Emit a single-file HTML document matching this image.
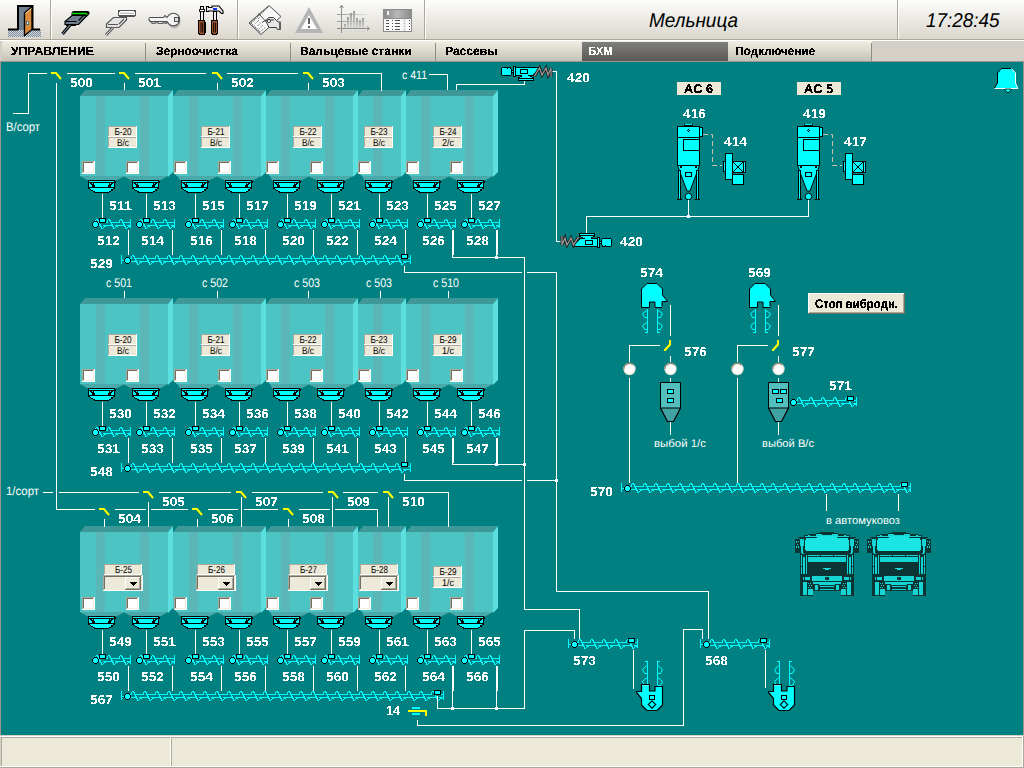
<!DOCTYPE html><html><head><meta charset="utf-8"><style>html,body{margin:0;padding:0;width:1024px;height:768px;overflow:hidden;background:#D4D0C8;}svg{display:block;font-family:"Liberation Sans",sans-serif;} rect,path.c{shape-rendering:crispEdges}</style></head><body><svg width="1024" height="768" viewBox="0 0 1024 768" text-rendering="geometricPrecision"><path class="c" fill="#D4D0C8" d="M0 0h1024v768h-1024z"/><defs><linearGradient id="tb" x1="0" y1="0" x2="0" y2="1"><stop offset="0" stop-color="#FDFDFB"/><stop offset="1" stop-color="#DAD6CE"/></linearGradient><linearGradient id="tab" x1="0" y1="0" x2="0" y2="1"><stop offset="0" stop-color="#F1EFE3"/><stop offset="1" stop-color="#C4C1B7"/></linearGradient><linearGradient id="tabA" x1="0" y1="0" x2="0" y2="1"><stop offset="0" stop-color="#7E7E7C"/><stop offset="1" stop-color="#5D5954"/></linearGradient><filter id="crisp" x="-10%" y="-30%" width="120%" height="160%"><feComponentTransfer><feFuncA type="discrete" tableValues="0 0 1 1"/></feComponentTransfer></filter><filter id="crispK" x="-10%" y="-30%" width="120%" height="160%"><feComponentTransfer><feFuncA type="discrete" tableValues="0 1 1"/></feComponentTransfer></filter><filter id="crispN" x="-10%" y="-30%" width="120%" height="160%"><feComponentTransfer><feFuncA type="discrete" tableValues="0 0 1 1 1"/></feComponentTransfer></filter><pattern id="dith" width="2" height="2" patternUnits="userSpaceOnUse"><rect width="1" height="1" fill="#7088A0"/><rect x="1" y="1" width="1" height="1" fill="#7088A0"/></pattern></defs><rect x="0" y="0" width="1024" height="39" fill="url(#tb)"/><rect x="0" y="39" width="1024" height="1" fill="#ACA899"/><rect x="0" y="40" width="1024" height="1" fill="#FFFFFF"/><rect x="50" y="0" width="1" height="39" fill="#ACA899"/><rect x="51" y="0" width="1" height="39" fill="#FFFFFF"/><rect x="237" y="0" width="1" height="39" fill="#ACA899"/><rect x="238" y="0" width="1" height="39" fill="#FFFFFF"/><rect x="424" y="0" width="1" height="39" fill="#ACA899"/><rect x="425" y="0" width="1" height="39" fill="#FFFFFF"/><rect x="897" y="0" width="1" height="39" fill="#ACA899"/><rect x="898" y="0" width="1" height="39" fill="#FFFFFF"/><rect x="0" y="41" width="1024" height="20" fill="#D4D0C8"/><rect x="2" y="41" width="870" height="20" fill="url(#tab)"/><rect x="582" y="42" width="146" height="19" fill="url(#tabA)"/><rect x="145" y="43" width="1" height="18" fill="#8E8C86"/><rect x="290" y="43" width="1" height="18" fill="#8E8C86"/><rect x="435" y="43" width="1" height="18" fill="#8E8C86"/><rect x="871" y="43" width="1" height="18" fill="#8E8C86"/><text x="11" y="55" font-size="12" fill="#000" style="font-weight:bold;" textLength="83" lengthAdjust="spacingAndGlyphs" filter="url(#crispK)">УПРАВЛЕНИЕ</text><text x="156" y="55" font-size="12" fill="#000" style="font-weight:bold;" textLength="82" lengthAdjust="spacingAndGlyphs" filter="url(#crispK)">Зерноочистка</text><text x="300" y="55" font-size="12" fill="#000" style="font-weight:bold;" textLength="111.5" lengthAdjust="spacingAndGlyphs" filter="url(#crispK)">Вальцевые станки</text><text x="445" y="55" font-size="12" fill="#000" style="font-weight:bold;" textLength="52.5" lengthAdjust="spacingAndGlyphs" filter="url(#crispK)">Рассевы</text><text x="588.5" y="55" font-size="12" fill="#FFFFFF" style="font-weight:bold;" textLength="24" lengthAdjust="spacingAndGlyphs" filter="url(#crisp)">БХМ</text><text x="735.5" y="55" font-size="12" fill="#000" style="font-weight:bold;" textLength="79.5" lengthAdjust="spacingAndGlyphs" filter="url(#crispK)">Подключение</text><text x="649" y="27" font-size="20" fill="#000" style="font-style:italic;" textLength="89" lengthAdjust="spacingAndGlyphs">Мельница</text><text x="926" y="27" font-size="20" fill="#000" style="font-style:italic;" textLength="73.5" lengthAdjust="spacingAndGlyphs">17:28:45</text><rect x="8" y="30" width="33" height="7" fill="url(#dith)"/><path d="M8,29.5 H18 M32,29.5 H40" stroke="#000" stroke-width="2"/><path d="M18,30 V6 H32.5 V30" fill="#708090" stroke="#000" stroke-width="2"/><path d="M24.5,13 L32,6.5 V29.5 L24.5,35.5 Z" fill="#D98C3C" stroke="#000" stroke-width="1.4"/><path d="M25.5,13.5 L31.5,8.5" stroke="#F8D8A8" stroke-width="1"/><rect x="26.5" y="21" width="2" height="3" fill="#fff" stroke="#2A6070" stroke-width="0.8"/><path d="M71.5,15.5 V13 Q72,11 74,11 H87.5 Q89.5,11 89.5,13 V14 L87,16.5 Z" fill="#000"/><path d="M72,13.5 H86 L87.5,15.8" stroke="#00E000" stroke-width="1.3" fill="none"/><path d="M72,15.5 H87 L78.5,24.5 H65 V21.5 Z" fill="#708090" stroke="#000" stroke-width="1.2"/><path d="M65.5,21.5 H76.5 M78.5,20.5 L83.5,15.5" stroke="#000" stroke-width="1.1"/><path d="M66.5,24.5 V25.5 H76" stroke="#000" stroke-width="1.2" fill="none"/><path d="M70,25 L62.5,34" stroke="#000" stroke-width="3.2"/><path d="M70,25 L62.5,34" stroke="#7890A0" stroke-width="1.1"/><rect x="118.5" y="10.5" width="17" height="5.5" rx="2" fill="#fff" stroke="#555" stroke-width="1.4"/><path d="M120.5,13.3 H134" stroke="#555" stroke-width="1.1" stroke-dasharray="1,1"/><path d="M113.5,17.5 H126.5 V20 L119,27.5 H106.5 V24 Z" fill="#E4E4E4" stroke="#555" stroke-width="1.2"/><path d="M108,24.5 H118 M119,24 L124,19" stroke="#555" stroke-width="1.1"/><path d="M113,27.5 L106,35" stroke="#555" stroke-width="2.8"/><path d="M113,27.5 L106,35" stroke="#fff" stroke-width="0.9"/><g transform="translate(1,2.5)" opacity="0.45"><path d="M150,17.5 H167 L170,14 A6.3,6.3 0 1 1 170,25 L167,21.5 H152 Q149,21.5 149,19.5 Z" fill="#808080"/></g><path d="M152,21.5 V23.5 H155 V22 H158 V23.5 H163 V22 H165 V23.5 H166.5 V21.5" fill="#E8E8E8" stroke="#606060" stroke-width="1"/><path d="M150,17.5 H163.5 L165,15.5 L167,17.5 L169,15 A6.3,6.3 0 1 1 169.5,24.5 L167,21.5 H151.5 Q149,21.5 149,19.5 Q149,17.5 150,17.5 Z" fill="#F4F4F4" stroke="#505050" stroke-width="1.1"/><rect x="174.5" y="17.5" width="4" height="4" rx="1.5" fill="#E0E0E0" stroke="#505050" stroke-width="1.1"/><rect x="198.5" y="20" width="6.5" height="14.5" rx="2.5" fill="#A0522D" stroke="#000" stroke-width="1.3"/><path d="M201,22.5 V32.5 M202.7,22.5 V32.5" stroke="#000" stroke-width="0.9"/><rect x="200" y="6" width="3" height="14" fill="#EEE" stroke="#000" stroke-width="1"/><rect x="199" y="9" width="5" height="2.5" fill="#fff" stroke="#000" stroke-width="0.9"/><rect x="211.3" y="20" width="6.5" height="14.5" rx="2.5" fill="#A0522D" stroke="#000" stroke-width="1.3"/><path d="M213.7,22.5 V32.5 M215.4,22.5 V32.5" stroke="#000" stroke-width="0.9"/><rect x="213" y="11.5" width="3" height="8.5" fill="#EEE" stroke="#000" stroke-width="1"/><path d="M206.5,6.5 H208.5 V7.5 H212 V6 H219 L223,11 V13.5 H221.5 L219,11 H208.5 V11.5 H206.5 Z" fill="#EEE" stroke="#000" stroke-width="1.1"/><rect x="212.8" y="8" width="4" height="1.6" fill="#1030FF"/><path d="M269,5.5 L281,16.5 L261,34.5 L249,23 Z" fill="#F8F8F8" stroke="#505050" stroke-width="1"/><path d="M268,7 L250.5,23 L261,33" stroke="#505050" stroke-width="1.6" stroke-dasharray="1,1" fill="none"/><path d="M258.5,13.5 L269,25" stroke="#505050" stroke-width="1"/><path d="M255.5,23.5 L259,20 M257.5,26 L261,22.5 M259.5,28.5 L263,25 M261.5,31 L265,27.5 M258,19 L260,17" stroke="#606060" stroke-width="1" stroke-dasharray="1,1"/><path d="M266,21.5 L268.5,17.5 H273.5 L278,22 H280.5 V29.5 H277.5 L276.5,27.5 H269 Z" fill="#E6E6E6" stroke="#404040" stroke-width="1"/><rect x="278.5" y="22" width="2.5" height="8" fill="#606060"/><path d="M262,22.5 L266,20 H274" stroke="#404040" stroke-width="1" fill="none"/><circle cx="269" cy="21" r="1.6" fill="#fff" stroke="#404040" stroke-width="1"/><path d="M309,7 L323,33 H295 Z" fill="#B4B4B4"/><path d="M309,15 L317,29 H301 Z" fill="#FFFFFF"/><rect x="308" y="18" width="2" height="6" fill="#606060"/><rect x="308" y="26" width="2" height="2" fill="#606060"/><defs><linearGradient id="bar" x1="0" y1="0" x2="0" y2="1"><stop offset="0" stop-color="#9C9C9C"/><stop offset="1" stop-color="#D4D4D4"/></linearGradient><linearGradient id="grid" x1="0" y1="0" x2="1" y2="0"><stop offset="0" stop-color="#9A9A9A"/><stop offset="1" stop-color="#E4E4E4"/></linearGradient><linearGradient id="thead" x1="0" y1="0" x2="1" y2="0"><stop offset="0" stop-color="#8A8A8A"/><stop offset="0.5" stop-color="#B8B8B8"/><stop offset="1" stop-color="#8A8A8A"/></linearGradient></defs><rect x="337" y="14" width="32" height="1" fill="url(#grid)"/><rect x="337" y="21" width="32" height="1" fill="url(#grid)"/><rect x="341" y="6" width="1" height="27" fill="#909090"/><rect x="337" y="28" width="32" height="1" fill="#909090"/><path d="M339.5,8 L341.5,5 L343.5,8 M367,26.5 L369.5,28.5 L367,30.5" stroke="#909090" fill="none" stroke-width="1"/><rect x="344" y="24" width="2" height="4" fill="url(#bar)"/><rect x="347" y="17" width="2" height="11" fill="url(#bar)"/><rect x="350" y="13" width="2" height="15" fill="url(#bar)"/><rect x="353" y="11" width="2" height="17" fill="url(#bar)"/><rect x="356" y="18" width="2" height="10" fill="url(#bar)"/><rect x="359" y="20" width="2" height="8" fill="url(#bar)"/><rect x="362" y="18" width="2" height="10" fill="url(#bar)"/><path d="M344,31.5 H364" stroke="#D8D8D8" stroke-dasharray="2,1"/><rect x="383" y="9" width="29" height="23" rx="1" fill="#8C8C8C"/><rect x="384" y="10" width="27" height="8" fill="url(#thead)"/><rect x="384" y="19" width="27" height="12" fill="#F8F8F8"/><rect x="387" y="11" width="2" height="4" fill="#F0F0F0"/><path d="M386,20.5 H389 M392,20.5 H393 M395,20.5 H400 M404,20.5 H405 M409,20.5 H410" stroke="#505050"/><path d="M386,23.5 H389 M392,23.5 H393 M395,23.5 H400 M404,23.5 H405 M409,23.5 H410" stroke="#505050"/><path d="M386,26.5 H389 M392,26.5 H393 M395,26.5 H400 M404,26.5 H405 M409,26.5 H410" stroke="#505050"/><path d="M386,29.5 H389 M392,29.5 H393 M395,29.5 H400 M404,29.5 H405 M409,29.5 H410" stroke="#505050"/><rect x="403" y="19" width="3" height="12" fill="#E8E8E8" opacity="0.6"/><path class="c" fill="#9D9492" d="M0 61h1024v675h-1024z"/><path class="c" fill="#008080" d="M1 62h1022v673h-1022z"/><polygon points="80,96 85,90 173,90 168,96" fill="#3F9898"/><path class="c" fill="#4DC4C4" d="M80 96h88v80h-88z"/><path class="c" fill="#5BB7B7" d="M96 96h9v80h-9zM140 96h9v80h-9z"/><polygon points="168,96 173,90 173,172 168,177" fill="#5BDFDF"/><polygon points="80,176 87,180 117,180 124.0,176.5 131,180 161,180 168,176" fill="#48AAAA"/><path class="c" fill="#FFFFFF" d="M82 161h13v13h-13z"/><path class="c" fill="#ACA899" d="M82 161h12v1h-12zM82 161h1v12h-1z"/><path class="c" fill="#716F64" d="M83 162h10v1h-10zM83 162h1v10h-1z"/><path class="c" fill="#F1EFE2" d="M83 172h11v1h-11zM93 162h1v11h-1z"/><path class="c" fill="#FFFFFF" d="M126 161h13v13h-13z"/><path class="c" fill="#ACA899" d="M126 161h12v1h-12zM126 161h1v12h-1z"/><path class="c" fill="#716F64" d="M127 162h10v1h-10zM127 162h1v10h-1z"/><path class="c" fill="#F1EFE2" d="M127 172h11v1h-11zM137 162h1v11h-1z"/><polygon points="173,96 178,90 266,90 261,96" fill="#3F9898"/><path class="c" fill="#4DC4C4" d="M173 96h88v80h-88z"/><path class="c" fill="#5BB7B7" d="M189 96h9v80h-9zM233 96h9v80h-9z"/><polygon points="261,96 266,90 266,172 261,177" fill="#5BDFDF"/><polygon points="173,172.5 177,176 173,176" fill="#008080"/><polygon points="177,176 180,180 210,180 217.0,176.5 224,180 254,180 261,176" fill="#48AAAA"/><path class="c" fill="#FFFFFF" d="M174 161h13v13h-13z"/><path class="c" fill="#ACA899" d="M174 161h12v1h-12zM174 161h1v12h-1z"/><path class="c" fill="#716F64" d="M175 162h10v1h-10zM175 162h1v10h-1z"/><path class="c" fill="#F1EFE2" d="M175 172h11v1h-11zM185 162h1v11h-1z"/><path class="c" fill="#FFFFFF" d="M218 161h13v13h-13z"/><path class="c" fill="#ACA899" d="M218 161h12v1h-12zM218 161h1v12h-1z"/><path class="c" fill="#716F64" d="M219 162h10v1h-10zM219 162h1v10h-1z"/><path class="c" fill="#F1EFE2" d="M219 172h11v1h-11zM229 162h1v11h-1z"/><polygon points="266,96 271,90 358,90 353,96" fill="#3F9898"/><path class="c" fill="#4DC4C4" d="M266 96h87v80h-87z"/><path class="c" fill="#5BB7B7" d="M281 96h9v80h-9zM325 96h9v80h-9z"/><polygon points="353,96 358,90 358,172 353,177" fill="#5BDFDF"/><polygon points="266,172.5 270,176 266,176" fill="#008080"/><polygon points="270,176 272,180 302,180 309.0,176.5 316,180 346,180 353,176" fill="#48AAAA"/><path class="c" fill="#FFFFFF" d="M266 161h13v13h-13z"/><path class="c" fill="#ACA899" d="M266 161h12v1h-12zM266 161h1v12h-1z"/><path class="c" fill="#716F64" d="M267 162h10v1h-10zM267 162h1v10h-1z"/><path class="c" fill="#F1EFE2" d="M267 172h11v1h-11zM277 162h1v11h-1z"/><path class="c" fill="#FFFFFF" d="M310 161h13v13h-13z"/><path class="c" fill="#ACA899" d="M310 161h12v1h-12zM310 161h1v12h-1z"/><path class="c" fill="#716F64" d="M311 162h10v1h-10zM311 162h1v10h-1z"/><path class="c" fill="#F1EFE2" d="M311 172h11v1h-11zM321 162h1v11h-1z"/><polygon points="358,96 363,90 406,90 401,96" fill="#3F9898"/><path class="c" fill="#4DC4C4" d="M358 96h43v80h-43z"/><path class="c" fill="#5BB7B7" d="M373 96h9v80h-9z"/><polygon points="401,96 406,90 406,172 401,177" fill="#5BDFDF"/><polygon points="358,172.5 362,176 358,176" fill="#008080"/><polygon points="362,176 364,180 394,180 401,176" fill="#48AAAA"/><path class="c" fill="#FFFFFF" d="M358 161h13v13h-13z"/><path class="c" fill="#ACA899" d="M358 161h12v1h-12zM358 161h1v12h-1z"/><path class="c" fill="#716F64" d="M359 162h10v1h-10zM359 162h1v10h-1z"/><path class="c" fill="#F1EFE2" d="M359 172h11v1h-11zM369 162h1v11h-1z"/><polygon points="406,96 411,90 498,90 493,96" fill="#3F9898"/><path class="c" fill="#4DC4C4" d="M406 96h87v80h-87z"/><path class="c" fill="#5BB7B7" d="M421 96h9v80h-9zM465 96h9v80h-9z"/><polygon points="493,96 498,90 498,172 493,177" fill="#5BDFDF"/><polygon points="406,172.5 410,176 406,176" fill="#008080"/><polygon points="410,176 412,180 442,180 449.0,176.5 456,180 486,180 493,176" fill="#48AAAA"/><path class="c" fill="#FFFFFF" d="M406 161h13v13h-13z"/><path class="c" fill="#ACA899" d="M406 161h12v1h-12zM406 161h1v12h-1z"/><path class="c" fill="#716F64" d="M407 162h10v1h-10zM407 162h1v10h-1z"/><path class="c" fill="#F1EFE2" d="M407 172h11v1h-11zM417 162h1v11h-1z"/><path class="c" fill="#FFFFFF" d="M450 161h13v13h-13z"/><path class="c" fill="#ACA899" d="M450 161h12v1h-12zM450 161h1v12h-1z"/><path class="c" fill="#716F64" d="M451 162h10v1h-10zM451 162h1v10h-1z"/><path class="c" fill="#F1EFE2" d="M451 172h11v1h-11zM461 162h1v11h-1z"/><path class="c" fill="#FFFFFF" d="M108 126h29v11h-29z"/><path class="c" fill="#ACA899" d="M108 126h28v10h-28z"/><path class="c" fill="#ECE9D8" d="M109 127h27v9h-27z"/><text x="114.5" y="135" font-size="10" fill="#000" style="" text-anchor="start" textLength="17" lengthAdjust="spacingAndGlyphs" >Б-20</text><path class="c" fill="#FFFFFF" d="M108 137h29v11h-29z"/><path class="c" fill="#ACA899" d="M108 137h28v10h-28z"/><path class="c" fill="#ECE9D8" d="M109 138h27v9h-27z"/><text x="117.0" y="146" font-size="10" fill="#000" style="" text-anchor="start" textLength="12" lengthAdjust="spacingAndGlyphs" >В/с</text><path class="c" fill="#FFFFFF" d="M201 126h29v11h-29z"/><path class="c" fill="#ACA899" d="M201 126h28v10h-28z"/><path class="c" fill="#ECE9D8" d="M202 127h27v9h-27z"/><text x="207.5" y="135" font-size="10" fill="#000" style="" text-anchor="start" textLength="17" lengthAdjust="spacingAndGlyphs" >Б-21</text><path class="c" fill="#FFFFFF" d="M201 137h29v11h-29z"/><path class="c" fill="#ACA899" d="M201 137h28v10h-28z"/><path class="c" fill="#ECE9D8" d="M202 138h27v9h-27z"/><text x="210.0" y="146" font-size="10" fill="#000" style="" text-anchor="start" textLength="12" lengthAdjust="spacingAndGlyphs" >В/с</text><path class="c" fill="#FFFFFF" d="M293 126h29v11h-29z"/><path class="c" fill="#ACA899" d="M293 126h28v10h-28z"/><path class="c" fill="#ECE9D8" d="M294 127h27v9h-27z"/><text x="299.5" y="135" font-size="10" fill="#000" style="" text-anchor="start" textLength="17" lengthAdjust="spacingAndGlyphs" >Б-22</text><path class="c" fill="#FFFFFF" d="M293 137h29v11h-29z"/><path class="c" fill="#ACA899" d="M293 137h28v10h-28z"/><path class="c" fill="#ECE9D8" d="M294 138h27v9h-27z"/><text x="302.0" y="146" font-size="10" fill="#000" style="" text-anchor="start" textLength="12" lengthAdjust="spacingAndGlyphs" >В/с</text><path class="c" fill="#FFFFFF" d="M364 126h29v11h-29z"/><path class="c" fill="#ACA899" d="M364 126h28v10h-28z"/><path class="c" fill="#ECE9D8" d="M365 127h27v9h-27z"/><text x="370.5" y="135" font-size="10" fill="#000" style="" text-anchor="start" textLength="17" lengthAdjust="spacingAndGlyphs" >Б-23</text><path class="c" fill="#FFFFFF" d="M364 137h29v11h-29z"/><path class="c" fill="#ACA899" d="M364 137h28v10h-28z"/><path class="c" fill="#ECE9D8" d="M365 138h27v9h-27z"/><text x="373.0" y="146" font-size="10" fill="#000" style="" text-anchor="start" textLength="12" lengthAdjust="spacingAndGlyphs" >В/с</text><path class="c" fill="#FFFFFF" d="M433 126h29v11h-29z"/><path class="c" fill="#ACA899" d="M433 126h28v10h-28z"/><path class="c" fill="#ECE9D8" d="M434 127h27v9h-27z"/><text x="439.5" y="135" font-size="10" fill="#000" style="" text-anchor="start" textLength="17" lengthAdjust="spacingAndGlyphs" >Б-24</text><path class="c" fill="#FFFFFF" d="M433 137h29v11h-29z"/><path class="c" fill="#ACA899" d="M433 137h28v10h-28z"/><path class="c" fill="#ECE9D8" d="M434 138h27v9h-27z"/><text x="442.0" y="146" font-size="10" fill="#000" style="" text-anchor="start" textLength="12" lengthAdjust="spacingAndGlyphs" >2/с</text><path class="c" fill="#000" d="M88 180h27v1h-27zM88 181h1v1h-1z"/><path class="c" fill="#00FFFF" d="M89 181h25v1h-25z"/><path class="c" fill="#000" d="M114 181h2v1h-2zM88 182h28v1h-28zM88 183h1v1h-1z"/><path class="c" fill="#00FFFF" d="M89 183h1v1h-1z"/><path class="c" fill="#000" d="M90 183h2v1h-2z"/><path class="c" fill="#00FFFF" d="M92 183h1v1h-1z"/><path class="c" fill="#000" d="M93 183h1v1h-1z"/><path class="c" fill="#00FFFF" d="M94 183h15v1h-15z"/><path class="c" fill="#000" d="M109 183h1v1h-1z"/><path class="c" fill="#00FFFF" d="M110 183h1v1h-1z"/><path class="c" fill="#000" d="M111 183h2v1h-2z"/><path class="c" fill="#00FFFF" d="M113 183h1v1h-1z"/><path class="c" fill="#000" d="M114 183h1v1h-1zM88 184h1v1h-1z"/><path class="c" fill="#00FFFF" d="M89 184h2v1h-2z"/><path class="c" fill="#000" d="M91 184h3v1h-3z"/><path class="c" fill="#00FFFF" d="M94 184h15v1h-15z"/><path class="c" fill="#000" d="M109 184h3v1h-3z"/><path class="c" fill="#00FFFF" d="M112 184h2v1h-2z"/><path class="c" fill="#000" d="M114 184h1v1h-1zM88 185h1v1h-1z"/><path class="c" fill="#00FFFF" d="M89 185h3v1h-3z"/><path class="c" fill="#000" d="M92 185h3v1h-3z"/><path class="c" fill="#00FFFF" d="M95 185h13v1h-13z"/><path class="c" fill="#000" d="M108 185h3v1h-3z"/><path class="c" fill="#00FFFF" d="M111 185h3v1h-3z"/><path class="c" fill="#000" d="M114 185h1v1h-1zM88 186h1v1h-1z"/><path class="c" fill="#00FFFF" d="M89 186h3v1h-3z"/><path class="c" fill="#000" d="M92 186h3v1h-3z"/><path class="c" fill="#00FFFF" d="M95 186h13v1h-13z"/><path class="c" fill="#000" d="M108 186h3v1h-3z"/><path class="c" fill="#00FFFF" d="M111 186h3v1h-3z"/><path class="c" fill="#000" d="M114 186h1v1h-1zM88 187h27v1h-27zM88 188h2v1h-2z"/><path class="c" fill="#00FFFF" d="M90 188h23v1h-23z"/><path class="c" fill="#000" d="M113 188h2v1h-2zM90 189h1v1h-1z"/><path class="c" fill="#00FFFF" d="M91 189h20v1h-20z"/><path class="c" fill="#000" d="M111 189h2v1h-2zM91 190h2v1h-2z"/><path class="c" fill="#00FFFF" d="M93 190h18v1h-18z"/><path class="c" fill="#000" d="M111 190h2v1h-2zM93 191h2v1h-2z"/><path class="c" fill="#00FFFF" d="M95 191h14v1h-14z"/><path class="c" fill="#000" d="M109 191h2v1h-2zM94 192h15v1h-15z"/><path class="c" fill="#fff" d="M102 194h1v24h-1z"/><path class="c" fill="#00FFFF" d="M98 222h10v1h-10zM110 222h10v1h-10zM122 222h8v1h-8zM96 225h5v1h-5zM103 225h10v1h-10zM115 225h10v1h-10zM127 225h3v1h-3zM96 219h1v1h-1zM97 219h1v1h-1zM95 220h1v1h-1zM97 220h1v1h-1zM98 220h1v1h-1zM95 221h1v1h-1zM98 221h1v1h-1zM98 222h1v1h-1zM99 222h1v1h-1zM99 223h1v1h-1zM99 224h1v1h-1zM100 224h1v1h-1zM100 225h1v1h-1zM100 226h1v1h-1zM101 226h1v1h-1zM104 226h1v1h-1zM105 226h1v1h-1zM101 227h1v1h-1zM103 227h1v1h-1zM101 228h1v1h-1zM102 228h1v1h-1zM108 219h1v1h-1zM109 219h1v1h-1zM107 220h1v1h-1zM109 220h1v1h-1zM110 220h1v1h-1zM107 221h1v1h-1zM110 221h1v1h-1zM110 222h1v1h-1zM111 222h1v1h-1zM111 223h1v1h-1zM111 224h1v1h-1zM112 224h1v1h-1zM112 225h1v1h-1zM112 226h1v1h-1zM113 226h1v1h-1zM116 226h1v1h-1zM117 226h1v1h-1zM113 227h1v1h-1zM115 227h1v1h-1zM113 228h1v1h-1zM114 228h1v1h-1zM120 219h1v1h-1zM121 219h1v1h-1zM119 220h1v1h-1zM121 220h1v1h-1zM122 220h1v1h-1zM119 221h1v1h-1zM122 221h1v1h-1zM122 222h1v1h-1zM123 222h1v1h-1zM123 223h1v1h-1zM123 224h1v1h-1zM124 224h1v1h-1zM124 225h1v1h-1zM124 226h1v1h-1zM125 226h1v1h-1zM128 226h1v1h-1zM129 226h1v1h-1zM125 227h1v1h-1zM127 227h1v1h-1zM125 228h1v1h-1zM126 228h1v1h-1zM130 219h1v9h-1z"/><path class="c" fill="#000" d="M94 221h3v1h-3zM93 222h1v1h-1z"/><path class="c" fill="#00FFFF" d="M94 222h3v1h-3z"/><path class="c" fill="#000" d="M97 222h1v1h-1zM92 223h1v1h-1z"/><path class="c" fill="#00FFFF" d="M93 223h5v1h-5z"/><path class="c" fill="#000" d="M98 223h1v1h-1zM92 224h1v1h-1z"/><path class="c" fill="#00FFFF" d="M93 224h5v1h-5z"/><path class="c" fill="#000" d="M98 224h1v1h-1zM92 225h1v1h-1z"/><path class="c" fill="#00FFFF" d="M93 225h5v1h-5z"/><path class="c" fill="#000" d="M98 225h1v1h-1zM93 226h1v1h-1z"/><path class="c" fill="#00FFFF" d="M94 226h3v1h-3z"/><path class="c" fill="#000" d="M97 226h1v1h-1zM94 227h3v1h-3zM99 218h7v5h-7z"/><path class="c" fill="#00FFFF" d="M100 219h5v3h-5z"/><path class="c" fill="#fff" d="M128 230h1v25h-1z"/><path class="c" fill="#000" d="M132 180h27v1h-27zM132 181h1v1h-1z"/><path class="c" fill="#00FFFF" d="M133 181h25v1h-25z"/><path class="c" fill="#000" d="M158 181h2v1h-2zM132 182h28v1h-28zM132 183h1v1h-1z"/><path class="c" fill="#00FFFF" d="M133 183h1v1h-1z"/><path class="c" fill="#000" d="M134 183h2v1h-2z"/><path class="c" fill="#00FFFF" d="M136 183h1v1h-1z"/><path class="c" fill="#000" d="M137 183h1v1h-1z"/><path class="c" fill="#00FFFF" d="M138 183h15v1h-15z"/><path class="c" fill="#000" d="M153 183h1v1h-1z"/><path class="c" fill="#00FFFF" d="M154 183h1v1h-1z"/><path class="c" fill="#000" d="M155 183h2v1h-2z"/><path class="c" fill="#00FFFF" d="M157 183h1v1h-1z"/><path class="c" fill="#000" d="M158 183h1v1h-1zM132 184h1v1h-1z"/><path class="c" fill="#00FFFF" d="M133 184h2v1h-2z"/><path class="c" fill="#000" d="M135 184h3v1h-3z"/><path class="c" fill="#00FFFF" d="M138 184h15v1h-15z"/><path class="c" fill="#000" d="M153 184h3v1h-3z"/><path class="c" fill="#00FFFF" d="M156 184h2v1h-2z"/><path class="c" fill="#000" d="M158 184h1v1h-1zM132 185h1v1h-1z"/><path class="c" fill="#00FFFF" d="M133 185h3v1h-3z"/><path class="c" fill="#000" d="M136 185h3v1h-3z"/><path class="c" fill="#00FFFF" d="M139 185h13v1h-13z"/><path class="c" fill="#000" d="M152 185h3v1h-3z"/><path class="c" fill="#00FFFF" d="M155 185h3v1h-3z"/><path class="c" fill="#000" d="M158 185h1v1h-1zM132 186h1v1h-1z"/><path class="c" fill="#00FFFF" d="M133 186h3v1h-3z"/><path class="c" fill="#000" d="M136 186h3v1h-3z"/><path class="c" fill="#00FFFF" d="M139 186h13v1h-13z"/><path class="c" fill="#000" d="M152 186h3v1h-3z"/><path class="c" fill="#00FFFF" d="M155 186h3v1h-3z"/><path class="c" fill="#000" d="M158 186h1v1h-1zM132 187h27v1h-27zM132 188h2v1h-2z"/><path class="c" fill="#00FFFF" d="M134 188h23v1h-23z"/><path class="c" fill="#000" d="M157 188h2v1h-2zM134 189h1v1h-1z"/><path class="c" fill="#00FFFF" d="M135 189h20v1h-20z"/><path class="c" fill="#000" d="M155 189h2v1h-2zM135 190h2v1h-2z"/><path class="c" fill="#00FFFF" d="M137 190h18v1h-18z"/><path class="c" fill="#000" d="M155 190h2v1h-2zM137 191h2v1h-2z"/><path class="c" fill="#00FFFF" d="M139 191h14v1h-14z"/><path class="c" fill="#000" d="M153 191h2v1h-2zM138 192h15v1h-15z"/><path class="c" fill="#fff" d="M146 194h1v24h-1z"/><path class="c" fill="#00FFFF" d="M142 222h10v1h-10zM154 222h10v1h-10zM166 222h8v1h-8zM140 225h5v1h-5zM147 225h10v1h-10zM159 225h10v1h-10zM171 225h3v1h-3zM140 219h1v1h-1zM141 219h1v1h-1zM139 220h1v1h-1zM141 220h1v1h-1zM142 220h1v1h-1zM139 221h1v1h-1zM142 221h1v1h-1zM142 222h1v1h-1zM143 222h1v1h-1zM143 223h1v1h-1zM143 224h1v1h-1zM144 224h1v1h-1zM144 225h1v1h-1zM144 226h1v1h-1zM145 226h1v1h-1zM148 226h1v1h-1zM149 226h1v1h-1zM145 227h1v1h-1zM147 227h1v1h-1zM145 228h1v1h-1zM146 228h1v1h-1zM152 219h1v1h-1zM153 219h1v1h-1zM151 220h1v1h-1zM153 220h1v1h-1zM154 220h1v1h-1zM151 221h1v1h-1zM154 221h1v1h-1zM154 222h1v1h-1zM155 222h1v1h-1zM155 223h1v1h-1zM155 224h1v1h-1zM156 224h1v1h-1zM156 225h1v1h-1zM156 226h1v1h-1zM157 226h1v1h-1zM160 226h1v1h-1zM161 226h1v1h-1zM157 227h1v1h-1zM159 227h1v1h-1zM157 228h1v1h-1zM158 228h1v1h-1zM164 219h1v1h-1zM165 219h1v1h-1zM163 220h1v1h-1zM165 220h1v1h-1zM166 220h1v1h-1zM163 221h1v1h-1zM166 221h1v1h-1zM166 222h1v1h-1zM167 222h1v1h-1zM167 223h1v1h-1zM167 224h1v1h-1zM168 224h1v1h-1zM168 225h1v1h-1zM168 226h1v1h-1zM169 226h1v1h-1zM172 226h1v1h-1zM173 226h1v1h-1zM169 227h1v1h-1zM171 227h1v1h-1zM169 228h1v1h-1zM170 228h1v1h-1zM174 219h1v9h-1z"/><path class="c" fill="#000" d="M138 221h3v1h-3zM137 222h1v1h-1z"/><path class="c" fill="#00FFFF" d="M138 222h3v1h-3z"/><path class="c" fill="#000" d="M141 222h1v1h-1zM136 223h1v1h-1z"/><path class="c" fill="#00FFFF" d="M137 223h5v1h-5z"/><path class="c" fill="#000" d="M142 223h1v1h-1zM136 224h1v1h-1z"/><path class="c" fill="#00FFFF" d="M137 224h5v1h-5z"/><path class="c" fill="#000" d="M142 224h1v1h-1zM136 225h1v1h-1z"/><path class="c" fill="#00FFFF" d="M137 225h5v1h-5z"/><path class="c" fill="#000" d="M142 225h1v1h-1zM137 226h1v1h-1z"/><path class="c" fill="#00FFFF" d="M138 226h3v1h-3z"/><path class="c" fill="#000" d="M141 226h1v1h-1zM138 227h3v1h-3zM143 218h7v5h-7z"/><path class="c" fill="#00FFFF" d="M144 219h5v3h-5z"/><path class="c" fill="#fff" d="M172 230h1v25h-1z"/><path class="c" fill="#000" d="M181 180h27v1h-27zM181 181h1v1h-1z"/><path class="c" fill="#00FFFF" d="M182 181h25v1h-25z"/><path class="c" fill="#000" d="M207 181h2v1h-2zM181 182h28v1h-28zM181 183h1v1h-1z"/><path class="c" fill="#00FFFF" d="M182 183h1v1h-1z"/><path class="c" fill="#000" d="M183 183h2v1h-2z"/><path class="c" fill="#00FFFF" d="M185 183h1v1h-1z"/><path class="c" fill="#000" d="M186 183h1v1h-1z"/><path class="c" fill="#00FFFF" d="M187 183h15v1h-15z"/><path class="c" fill="#000" d="M202 183h1v1h-1z"/><path class="c" fill="#00FFFF" d="M203 183h1v1h-1z"/><path class="c" fill="#000" d="M204 183h2v1h-2z"/><path class="c" fill="#00FFFF" d="M206 183h1v1h-1z"/><path class="c" fill="#000" d="M207 183h1v1h-1zM181 184h1v1h-1z"/><path class="c" fill="#00FFFF" d="M182 184h2v1h-2z"/><path class="c" fill="#000" d="M184 184h3v1h-3z"/><path class="c" fill="#00FFFF" d="M187 184h15v1h-15z"/><path class="c" fill="#000" d="M202 184h3v1h-3z"/><path class="c" fill="#00FFFF" d="M205 184h2v1h-2z"/><path class="c" fill="#000" d="M207 184h1v1h-1zM181 185h1v1h-1z"/><path class="c" fill="#00FFFF" d="M182 185h3v1h-3z"/><path class="c" fill="#000" d="M185 185h3v1h-3z"/><path class="c" fill="#00FFFF" d="M188 185h13v1h-13z"/><path class="c" fill="#000" d="M201 185h3v1h-3z"/><path class="c" fill="#00FFFF" d="M204 185h3v1h-3z"/><path class="c" fill="#000" d="M207 185h1v1h-1zM181 186h1v1h-1z"/><path class="c" fill="#00FFFF" d="M182 186h3v1h-3z"/><path class="c" fill="#000" d="M185 186h3v1h-3z"/><path class="c" fill="#00FFFF" d="M188 186h13v1h-13z"/><path class="c" fill="#000" d="M201 186h3v1h-3z"/><path class="c" fill="#00FFFF" d="M204 186h3v1h-3z"/><path class="c" fill="#000" d="M207 186h1v1h-1zM181 187h27v1h-27zM181 188h2v1h-2z"/><path class="c" fill="#00FFFF" d="M183 188h23v1h-23z"/><path class="c" fill="#000" d="M206 188h2v1h-2zM183 189h1v1h-1z"/><path class="c" fill="#00FFFF" d="M184 189h20v1h-20z"/><path class="c" fill="#000" d="M204 189h2v1h-2zM184 190h2v1h-2z"/><path class="c" fill="#00FFFF" d="M186 190h18v1h-18z"/><path class="c" fill="#000" d="M204 190h2v1h-2zM186 191h2v1h-2z"/><path class="c" fill="#00FFFF" d="M188 191h14v1h-14z"/><path class="c" fill="#000" d="M202 191h2v1h-2zM187 192h15v1h-15z"/><path class="c" fill="#fff" d="M195 194h1v24h-1z"/><path class="c" fill="#00FFFF" d="M191 222h10v1h-10zM203 222h10v1h-10zM215 222h8v1h-8zM189 225h5v1h-5zM196 225h10v1h-10zM208 225h10v1h-10zM220 225h3v1h-3zM189 219h1v1h-1zM190 219h1v1h-1zM188 220h1v1h-1zM190 220h1v1h-1zM191 220h1v1h-1zM188 221h1v1h-1zM191 221h1v1h-1zM191 222h1v1h-1zM192 222h1v1h-1zM192 223h1v1h-1zM192 224h1v1h-1zM193 224h1v1h-1zM193 225h1v1h-1zM193 226h1v1h-1zM194 226h1v1h-1zM197 226h1v1h-1zM198 226h1v1h-1zM194 227h1v1h-1zM196 227h1v1h-1zM194 228h1v1h-1zM195 228h1v1h-1zM201 219h1v1h-1zM202 219h1v1h-1zM200 220h1v1h-1zM202 220h1v1h-1zM203 220h1v1h-1zM200 221h1v1h-1zM203 221h1v1h-1zM203 222h1v1h-1zM204 222h1v1h-1zM204 223h1v1h-1zM204 224h1v1h-1zM205 224h1v1h-1zM205 225h1v1h-1zM205 226h1v1h-1zM206 226h1v1h-1zM209 226h1v1h-1zM210 226h1v1h-1zM206 227h1v1h-1zM208 227h1v1h-1zM206 228h1v1h-1zM207 228h1v1h-1zM213 219h1v1h-1zM214 219h1v1h-1zM212 220h1v1h-1zM214 220h1v1h-1zM215 220h1v1h-1zM212 221h1v1h-1zM215 221h1v1h-1zM215 222h1v1h-1zM216 222h1v1h-1zM216 223h1v1h-1zM216 224h1v1h-1zM217 224h1v1h-1zM217 225h1v1h-1zM217 226h1v1h-1zM218 226h1v1h-1zM221 226h1v1h-1zM222 226h1v1h-1zM218 227h1v1h-1zM220 227h1v1h-1zM218 228h1v1h-1zM219 228h1v1h-1zM223 219h1v9h-1z"/><path class="c" fill="#000" d="M187 221h3v1h-3zM186 222h1v1h-1z"/><path class="c" fill="#00FFFF" d="M187 222h3v1h-3z"/><path class="c" fill="#000" d="M190 222h1v1h-1zM185 223h1v1h-1z"/><path class="c" fill="#00FFFF" d="M186 223h5v1h-5z"/><path class="c" fill="#000" d="M191 223h1v1h-1zM185 224h1v1h-1z"/><path class="c" fill="#00FFFF" d="M186 224h5v1h-5z"/><path class="c" fill="#000" d="M191 224h1v1h-1zM185 225h1v1h-1z"/><path class="c" fill="#00FFFF" d="M186 225h5v1h-5z"/><path class="c" fill="#000" d="M191 225h1v1h-1zM186 226h1v1h-1z"/><path class="c" fill="#00FFFF" d="M187 226h3v1h-3z"/><path class="c" fill="#000" d="M190 226h1v1h-1zM187 227h3v1h-3zM192 218h7v5h-7z"/><path class="c" fill="#00FFFF" d="M193 219h5v3h-5z"/><path class="c" fill="#fff" d="M221 230h1v25h-1z"/><path class="c" fill="#000" d="M225 180h27v1h-27zM225 181h1v1h-1z"/><path class="c" fill="#00FFFF" d="M226 181h25v1h-25z"/><path class="c" fill="#000" d="M251 181h2v1h-2zM225 182h28v1h-28zM225 183h1v1h-1z"/><path class="c" fill="#00FFFF" d="M226 183h1v1h-1z"/><path class="c" fill="#000" d="M227 183h2v1h-2z"/><path class="c" fill="#00FFFF" d="M229 183h1v1h-1z"/><path class="c" fill="#000" d="M230 183h1v1h-1z"/><path class="c" fill="#00FFFF" d="M231 183h15v1h-15z"/><path class="c" fill="#000" d="M246 183h1v1h-1z"/><path class="c" fill="#00FFFF" d="M247 183h1v1h-1z"/><path class="c" fill="#000" d="M248 183h2v1h-2z"/><path class="c" fill="#00FFFF" d="M250 183h1v1h-1z"/><path class="c" fill="#000" d="M251 183h1v1h-1zM225 184h1v1h-1z"/><path class="c" fill="#00FFFF" d="M226 184h2v1h-2z"/><path class="c" fill="#000" d="M228 184h3v1h-3z"/><path class="c" fill="#00FFFF" d="M231 184h15v1h-15z"/><path class="c" fill="#000" d="M246 184h3v1h-3z"/><path class="c" fill="#00FFFF" d="M249 184h2v1h-2z"/><path class="c" fill="#000" d="M251 184h1v1h-1zM225 185h1v1h-1z"/><path class="c" fill="#00FFFF" d="M226 185h3v1h-3z"/><path class="c" fill="#000" d="M229 185h3v1h-3z"/><path class="c" fill="#00FFFF" d="M232 185h13v1h-13z"/><path class="c" fill="#000" d="M245 185h3v1h-3z"/><path class="c" fill="#00FFFF" d="M248 185h3v1h-3z"/><path class="c" fill="#000" d="M251 185h1v1h-1zM225 186h1v1h-1z"/><path class="c" fill="#00FFFF" d="M226 186h3v1h-3z"/><path class="c" fill="#000" d="M229 186h3v1h-3z"/><path class="c" fill="#00FFFF" d="M232 186h13v1h-13z"/><path class="c" fill="#000" d="M245 186h3v1h-3z"/><path class="c" fill="#00FFFF" d="M248 186h3v1h-3z"/><path class="c" fill="#000" d="M251 186h1v1h-1zM225 187h27v1h-27zM225 188h2v1h-2z"/><path class="c" fill="#00FFFF" d="M227 188h23v1h-23z"/><path class="c" fill="#000" d="M250 188h2v1h-2zM227 189h1v1h-1z"/><path class="c" fill="#00FFFF" d="M228 189h20v1h-20z"/><path class="c" fill="#000" d="M248 189h2v1h-2zM228 190h2v1h-2z"/><path class="c" fill="#00FFFF" d="M230 190h18v1h-18z"/><path class="c" fill="#000" d="M248 190h2v1h-2zM230 191h2v1h-2z"/><path class="c" fill="#00FFFF" d="M232 191h14v1h-14z"/><path class="c" fill="#000" d="M246 191h2v1h-2zM231 192h15v1h-15z"/><path class="c" fill="#fff" d="M239 194h1v24h-1z"/><path class="c" fill="#00FFFF" d="M235 222h10v1h-10zM247 222h10v1h-10zM259 222h8v1h-8zM233 225h5v1h-5zM240 225h10v1h-10zM252 225h10v1h-10zM264 225h3v1h-3zM233 219h1v1h-1zM234 219h1v1h-1zM232 220h1v1h-1zM234 220h1v1h-1zM235 220h1v1h-1zM232 221h1v1h-1zM235 221h1v1h-1zM235 222h1v1h-1zM236 222h1v1h-1zM236 223h1v1h-1zM236 224h1v1h-1zM237 224h1v1h-1zM237 225h1v1h-1zM237 226h1v1h-1zM238 226h1v1h-1zM241 226h1v1h-1zM242 226h1v1h-1zM238 227h1v1h-1zM240 227h1v1h-1zM238 228h1v1h-1zM239 228h1v1h-1zM245 219h1v1h-1zM246 219h1v1h-1zM244 220h1v1h-1zM246 220h1v1h-1zM247 220h1v1h-1zM244 221h1v1h-1zM247 221h1v1h-1zM247 222h1v1h-1zM248 222h1v1h-1zM248 223h1v1h-1zM248 224h1v1h-1zM249 224h1v1h-1zM249 225h1v1h-1zM249 226h1v1h-1zM250 226h1v1h-1zM253 226h1v1h-1zM254 226h1v1h-1zM250 227h1v1h-1zM252 227h1v1h-1zM250 228h1v1h-1zM251 228h1v1h-1zM257 219h1v1h-1zM258 219h1v1h-1zM256 220h1v1h-1zM258 220h1v1h-1zM259 220h1v1h-1zM256 221h1v1h-1zM259 221h1v1h-1zM259 222h1v1h-1zM260 222h1v1h-1zM260 223h1v1h-1zM260 224h1v1h-1zM261 224h1v1h-1zM261 225h1v1h-1zM261 226h1v1h-1zM262 226h1v1h-1zM265 226h1v1h-1zM266 226h1v1h-1zM262 227h1v1h-1zM264 227h1v1h-1zM262 228h1v1h-1zM263 228h1v1h-1zM267 219h1v9h-1z"/><path class="c" fill="#000" d="M231 221h3v1h-3zM230 222h1v1h-1z"/><path class="c" fill="#00FFFF" d="M231 222h3v1h-3z"/><path class="c" fill="#000" d="M234 222h1v1h-1zM229 223h1v1h-1z"/><path class="c" fill="#00FFFF" d="M230 223h5v1h-5z"/><path class="c" fill="#000" d="M235 223h1v1h-1zM229 224h1v1h-1z"/><path class="c" fill="#00FFFF" d="M230 224h5v1h-5z"/><path class="c" fill="#000" d="M235 224h1v1h-1zM229 225h1v1h-1z"/><path class="c" fill="#00FFFF" d="M230 225h5v1h-5z"/><path class="c" fill="#000" d="M235 225h1v1h-1zM230 226h1v1h-1z"/><path class="c" fill="#00FFFF" d="M231 226h3v1h-3z"/><path class="c" fill="#000" d="M234 226h1v1h-1zM231 227h3v1h-3zM236 218h7v5h-7z"/><path class="c" fill="#00FFFF" d="M237 219h5v3h-5z"/><path class="c" fill="#fff" d="M265 230h1v25h-1z"/><path class="c" fill="#000" d="M273 180h27v1h-27zM273 181h1v1h-1z"/><path class="c" fill="#00FFFF" d="M274 181h25v1h-25z"/><path class="c" fill="#000" d="M299 181h2v1h-2zM273 182h28v1h-28zM273 183h1v1h-1z"/><path class="c" fill="#00FFFF" d="M274 183h1v1h-1z"/><path class="c" fill="#000" d="M275 183h2v1h-2z"/><path class="c" fill="#00FFFF" d="M277 183h1v1h-1z"/><path class="c" fill="#000" d="M278 183h1v1h-1z"/><path class="c" fill="#00FFFF" d="M279 183h15v1h-15z"/><path class="c" fill="#000" d="M294 183h1v1h-1z"/><path class="c" fill="#00FFFF" d="M295 183h1v1h-1z"/><path class="c" fill="#000" d="M296 183h2v1h-2z"/><path class="c" fill="#00FFFF" d="M298 183h1v1h-1z"/><path class="c" fill="#000" d="M299 183h1v1h-1zM273 184h1v1h-1z"/><path class="c" fill="#00FFFF" d="M274 184h2v1h-2z"/><path class="c" fill="#000" d="M276 184h3v1h-3z"/><path class="c" fill="#00FFFF" d="M279 184h15v1h-15z"/><path class="c" fill="#000" d="M294 184h3v1h-3z"/><path class="c" fill="#00FFFF" d="M297 184h2v1h-2z"/><path class="c" fill="#000" d="M299 184h1v1h-1zM273 185h1v1h-1z"/><path class="c" fill="#00FFFF" d="M274 185h3v1h-3z"/><path class="c" fill="#000" d="M277 185h3v1h-3z"/><path class="c" fill="#00FFFF" d="M280 185h13v1h-13z"/><path class="c" fill="#000" d="M293 185h3v1h-3z"/><path class="c" fill="#00FFFF" d="M296 185h3v1h-3z"/><path class="c" fill="#000" d="M299 185h1v1h-1zM273 186h1v1h-1z"/><path class="c" fill="#00FFFF" d="M274 186h3v1h-3z"/><path class="c" fill="#000" d="M277 186h3v1h-3z"/><path class="c" fill="#00FFFF" d="M280 186h13v1h-13z"/><path class="c" fill="#000" d="M293 186h3v1h-3z"/><path class="c" fill="#00FFFF" d="M296 186h3v1h-3z"/><path class="c" fill="#000" d="M299 186h1v1h-1zM273 187h27v1h-27zM273 188h2v1h-2z"/><path class="c" fill="#00FFFF" d="M275 188h23v1h-23z"/><path class="c" fill="#000" d="M298 188h2v1h-2zM275 189h1v1h-1z"/><path class="c" fill="#00FFFF" d="M276 189h20v1h-20z"/><path class="c" fill="#000" d="M296 189h2v1h-2zM276 190h2v1h-2z"/><path class="c" fill="#00FFFF" d="M278 190h18v1h-18z"/><path class="c" fill="#000" d="M296 190h2v1h-2zM278 191h2v1h-2z"/><path class="c" fill="#00FFFF" d="M280 191h14v1h-14z"/><path class="c" fill="#000" d="M294 191h2v1h-2zM279 192h15v1h-15z"/><path class="c" fill="#fff" d="M287 194h1v24h-1z"/><path class="c" fill="#00FFFF" d="M283 222h10v1h-10zM295 222h10v1h-10zM307 222h8v1h-8zM281 225h5v1h-5zM288 225h10v1h-10zM300 225h10v1h-10zM312 225h3v1h-3zM281 219h1v1h-1zM282 219h1v1h-1zM280 220h1v1h-1zM282 220h1v1h-1zM283 220h1v1h-1zM280 221h1v1h-1zM283 221h1v1h-1zM283 222h1v1h-1zM284 222h1v1h-1zM284 223h1v1h-1zM284 224h1v1h-1zM285 224h1v1h-1zM285 225h1v1h-1zM285 226h1v1h-1zM286 226h1v1h-1zM289 226h1v1h-1zM290 226h1v1h-1zM286 227h1v1h-1zM288 227h1v1h-1zM286 228h1v1h-1zM287 228h1v1h-1zM293 219h1v1h-1zM294 219h1v1h-1zM292 220h1v1h-1zM294 220h1v1h-1zM295 220h1v1h-1zM292 221h1v1h-1zM295 221h1v1h-1zM295 222h1v1h-1zM296 222h1v1h-1zM296 223h1v1h-1zM296 224h1v1h-1zM297 224h1v1h-1zM297 225h1v1h-1zM297 226h1v1h-1zM298 226h1v1h-1zM301 226h1v1h-1zM302 226h1v1h-1zM298 227h1v1h-1zM300 227h1v1h-1zM298 228h1v1h-1zM299 228h1v1h-1zM305 219h1v1h-1zM306 219h1v1h-1zM304 220h1v1h-1zM306 220h1v1h-1zM307 220h1v1h-1zM304 221h1v1h-1zM307 221h1v1h-1zM307 222h1v1h-1zM308 222h1v1h-1zM308 223h1v1h-1zM308 224h1v1h-1zM309 224h1v1h-1zM309 225h1v1h-1zM309 226h1v1h-1zM310 226h1v1h-1zM313 226h1v1h-1zM314 226h1v1h-1zM310 227h1v1h-1zM312 227h1v1h-1zM310 228h1v1h-1zM311 228h1v1h-1zM315 219h1v9h-1z"/><path class="c" fill="#000" d="M279 221h3v1h-3zM278 222h1v1h-1z"/><path class="c" fill="#00FFFF" d="M279 222h3v1h-3z"/><path class="c" fill="#000" d="M282 222h1v1h-1zM277 223h1v1h-1z"/><path class="c" fill="#00FFFF" d="M278 223h5v1h-5z"/><path class="c" fill="#000" d="M283 223h1v1h-1zM277 224h1v1h-1z"/><path class="c" fill="#00FFFF" d="M278 224h5v1h-5z"/><path class="c" fill="#000" d="M283 224h1v1h-1zM277 225h1v1h-1z"/><path class="c" fill="#00FFFF" d="M278 225h5v1h-5z"/><path class="c" fill="#000" d="M283 225h1v1h-1zM278 226h1v1h-1z"/><path class="c" fill="#00FFFF" d="M279 226h3v1h-3z"/><path class="c" fill="#000" d="M282 226h1v1h-1zM279 227h3v1h-3zM284 218h7v5h-7z"/><path class="c" fill="#00FFFF" d="M285 219h5v3h-5z"/><path class="c" fill="#fff" d="M313 230h1v25h-1z"/><path class="c" fill="#000" d="M317 180h27v1h-27zM317 181h1v1h-1z"/><path class="c" fill="#00FFFF" d="M318 181h25v1h-25z"/><path class="c" fill="#000" d="M343 181h2v1h-2zM317 182h28v1h-28zM317 183h1v1h-1z"/><path class="c" fill="#00FFFF" d="M318 183h1v1h-1z"/><path class="c" fill="#000" d="M319 183h2v1h-2z"/><path class="c" fill="#00FFFF" d="M321 183h1v1h-1z"/><path class="c" fill="#000" d="M322 183h1v1h-1z"/><path class="c" fill="#00FFFF" d="M323 183h15v1h-15z"/><path class="c" fill="#000" d="M338 183h1v1h-1z"/><path class="c" fill="#00FFFF" d="M339 183h1v1h-1z"/><path class="c" fill="#000" d="M340 183h2v1h-2z"/><path class="c" fill="#00FFFF" d="M342 183h1v1h-1z"/><path class="c" fill="#000" d="M343 183h1v1h-1zM317 184h1v1h-1z"/><path class="c" fill="#00FFFF" d="M318 184h2v1h-2z"/><path class="c" fill="#000" d="M320 184h3v1h-3z"/><path class="c" fill="#00FFFF" d="M323 184h15v1h-15z"/><path class="c" fill="#000" d="M338 184h3v1h-3z"/><path class="c" fill="#00FFFF" d="M341 184h2v1h-2z"/><path class="c" fill="#000" d="M343 184h1v1h-1zM317 185h1v1h-1z"/><path class="c" fill="#00FFFF" d="M318 185h3v1h-3z"/><path class="c" fill="#000" d="M321 185h3v1h-3z"/><path class="c" fill="#00FFFF" d="M324 185h13v1h-13z"/><path class="c" fill="#000" d="M337 185h3v1h-3z"/><path class="c" fill="#00FFFF" d="M340 185h3v1h-3z"/><path class="c" fill="#000" d="M343 185h1v1h-1zM317 186h1v1h-1z"/><path class="c" fill="#00FFFF" d="M318 186h3v1h-3z"/><path class="c" fill="#000" d="M321 186h3v1h-3z"/><path class="c" fill="#00FFFF" d="M324 186h13v1h-13z"/><path class="c" fill="#000" d="M337 186h3v1h-3z"/><path class="c" fill="#00FFFF" d="M340 186h3v1h-3z"/><path class="c" fill="#000" d="M343 186h1v1h-1zM317 187h27v1h-27zM317 188h2v1h-2z"/><path class="c" fill="#00FFFF" d="M319 188h23v1h-23z"/><path class="c" fill="#000" d="M342 188h2v1h-2zM319 189h1v1h-1z"/><path class="c" fill="#00FFFF" d="M320 189h20v1h-20z"/><path class="c" fill="#000" d="M340 189h2v1h-2zM320 190h2v1h-2z"/><path class="c" fill="#00FFFF" d="M322 190h18v1h-18z"/><path class="c" fill="#000" d="M340 190h2v1h-2zM322 191h2v1h-2z"/><path class="c" fill="#00FFFF" d="M324 191h14v1h-14z"/><path class="c" fill="#000" d="M338 191h2v1h-2zM323 192h15v1h-15z"/><path class="c" fill="#fff" d="M331 194h1v24h-1z"/><path class="c" fill="#00FFFF" d="M327 222h10v1h-10zM339 222h10v1h-10zM351 222h8v1h-8zM325 225h5v1h-5zM332 225h10v1h-10zM344 225h10v1h-10zM356 225h3v1h-3zM325 219h1v1h-1zM326 219h1v1h-1zM324 220h1v1h-1zM326 220h1v1h-1zM327 220h1v1h-1zM324 221h1v1h-1zM327 221h1v1h-1zM327 222h1v1h-1zM328 222h1v1h-1zM328 223h1v1h-1zM328 224h1v1h-1zM329 224h1v1h-1zM329 225h1v1h-1zM329 226h1v1h-1zM330 226h1v1h-1zM333 226h1v1h-1zM334 226h1v1h-1zM330 227h1v1h-1zM332 227h1v1h-1zM330 228h1v1h-1zM331 228h1v1h-1zM337 219h1v1h-1zM338 219h1v1h-1zM336 220h1v1h-1zM338 220h1v1h-1zM339 220h1v1h-1zM336 221h1v1h-1zM339 221h1v1h-1zM339 222h1v1h-1zM340 222h1v1h-1zM340 223h1v1h-1zM340 224h1v1h-1zM341 224h1v1h-1zM341 225h1v1h-1zM341 226h1v1h-1zM342 226h1v1h-1zM345 226h1v1h-1zM346 226h1v1h-1zM342 227h1v1h-1zM344 227h1v1h-1zM342 228h1v1h-1zM343 228h1v1h-1zM349 219h1v1h-1zM350 219h1v1h-1zM348 220h1v1h-1zM350 220h1v1h-1zM351 220h1v1h-1zM348 221h1v1h-1zM351 221h1v1h-1zM351 222h1v1h-1zM352 222h1v1h-1zM352 223h1v1h-1zM352 224h1v1h-1zM353 224h1v1h-1zM353 225h1v1h-1zM353 226h1v1h-1zM354 226h1v1h-1zM357 226h1v1h-1zM358 226h1v1h-1zM354 227h1v1h-1zM356 227h1v1h-1zM354 228h1v1h-1zM355 228h1v1h-1zM359 219h1v9h-1z"/><path class="c" fill="#000" d="M323 221h3v1h-3zM322 222h1v1h-1z"/><path class="c" fill="#00FFFF" d="M323 222h3v1h-3z"/><path class="c" fill="#000" d="M326 222h1v1h-1zM321 223h1v1h-1z"/><path class="c" fill="#00FFFF" d="M322 223h5v1h-5z"/><path class="c" fill="#000" d="M327 223h1v1h-1zM321 224h1v1h-1z"/><path class="c" fill="#00FFFF" d="M322 224h5v1h-5z"/><path class="c" fill="#000" d="M327 224h1v1h-1zM321 225h1v1h-1z"/><path class="c" fill="#00FFFF" d="M322 225h5v1h-5z"/><path class="c" fill="#000" d="M327 225h1v1h-1zM322 226h1v1h-1z"/><path class="c" fill="#00FFFF" d="M323 226h3v1h-3z"/><path class="c" fill="#000" d="M326 226h1v1h-1zM323 227h3v1h-3zM328 218h7v5h-7z"/><path class="c" fill="#00FFFF" d="M329 219h5v3h-5z"/><path class="c" fill="#fff" d="M357 230h1v25h-1z"/><path class="c" fill="#000" d="M365 180h27v1h-27zM365 181h1v1h-1z"/><path class="c" fill="#00FFFF" d="M366 181h25v1h-25z"/><path class="c" fill="#000" d="M391 181h2v1h-2zM365 182h28v1h-28zM365 183h1v1h-1z"/><path class="c" fill="#00FFFF" d="M366 183h1v1h-1z"/><path class="c" fill="#000" d="M367 183h2v1h-2z"/><path class="c" fill="#00FFFF" d="M369 183h1v1h-1z"/><path class="c" fill="#000" d="M370 183h1v1h-1z"/><path class="c" fill="#00FFFF" d="M371 183h15v1h-15z"/><path class="c" fill="#000" d="M386 183h1v1h-1z"/><path class="c" fill="#00FFFF" d="M387 183h1v1h-1z"/><path class="c" fill="#000" d="M388 183h2v1h-2z"/><path class="c" fill="#00FFFF" d="M390 183h1v1h-1z"/><path class="c" fill="#000" d="M391 183h1v1h-1zM365 184h1v1h-1z"/><path class="c" fill="#00FFFF" d="M366 184h2v1h-2z"/><path class="c" fill="#000" d="M368 184h3v1h-3z"/><path class="c" fill="#00FFFF" d="M371 184h15v1h-15z"/><path class="c" fill="#000" d="M386 184h3v1h-3z"/><path class="c" fill="#00FFFF" d="M389 184h2v1h-2z"/><path class="c" fill="#000" d="M391 184h1v1h-1zM365 185h1v1h-1z"/><path class="c" fill="#00FFFF" d="M366 185h3v1h-3z"/><path class="c" fill="#000" d="M369 185h3v1h-3z"/><path class="c" fill="#00FFFF" d="M372 185h13v1h-13z"/><path class="c" fill="#000" d="M385 185h3v1h-3z"/><path class="c" fill="#00FFFF" d="M388 185h3v1h-3z"/><path class="c" fill="#000" d="M391 185h1v1h-1zM365 186h1v1h-1z"/><path class="c" fill="#00FFFF" d="M366 186h3v1h-3z"/><path class="c" fill="#000" d="M369 186h3v1h-3z"/><path class="c" fill="#00FFFF" d="M372 186h13v1h-13z"/><path class="c" fill="#000" d="M385 186h3v1h-3z"/><path class="c" fill="#00FFFF" d="M388 186h3v1h-3z"/><path class="c" fill="#000" d="M391 186h1v1h-1zM365 187h27v1h-27zM365 188h2v1h-2z"/><path class="c" fill="#00FFFF" d="M367 188h23v1h-23z"/><path class="c" fill="#000" d="M390 188h2v1h-2zM367 189h1v1h-1z"/><path class="c" fill="#00FFFF" d="M368 189h20v1h-20z"/><path class="c" fill="#000" d="M388 189h2v1h-2zM368 190h2v1h-2z"/><path class="c" fill="#00FFFF" d="M370 190h18v1h-18z"/><path class="c" fill="#000" d="M388 190h2v1h-2zM370 191h2v1h-2z"/><path class="c" fill="#00FFFF" d="M372 191h14v1h-14z"/><path class="c" fill="#000" d="M386 191h2v1h-2zM371 192h15v1h-15z"/><path class="c" fill="#fff" d="M379 194h1v24h-1z"/><path class="c" fill="#00FFFF" d="M375 222h10v1h-10zM387 222h10v1h-10zM399 222h8v1h-8zM373 225h5v1h-5zM380 225h10v1h-10zM392 225h10v1h-10zM404 225h3v1h-3zM373 219h1v1h-1zM374 219h1v1h-1zM372 220h1v1h-1zM374 220h1v1h-1zM375 220h1v1h-1zM372 221h1v1h-1zM375 221h1v1h-1zM375 222h1v1h-1zM376 222h1v1h-1zM376 223h1v1h-1zM376 224h1v1h-1zM377 224h1v1h-1zM377 225h1v1h-1zM377 226h1v1h-1zM378 226h1v1h-1zM381 226h1v1h-1zM382 226h1v1h-1zM378 227h1v1h-1zM380 227h1v1h-1zM378 228h1v1h-1zM379 228h1v1h-1zM385 219h1v1h-1zM386 219h1v1h-1zM384 220h1v1h-1zM386 220h1v1h-1zM387 220h1v1h-1zM384 221h1v1h-1zM387 221h1v1h-1zM387 222h1v1h-1zM388 222h1v1h-1zM388 223h1v1h-1zM388 224h1v1h-1zM389 224h1v1h-1zM389 225h1v1h-1zM389 226h1v1h-1zM390 226h1v1h-1zM393 226h1v1h-1zM394 226h1v1h-1zM390 227h1v1h-1zM392 227h1v1h-1zM390 228h1v1h-1zM391 228h1v1h-1zM397 219h1v1h-1zM398 219h1v1h-1zM396 220h1v1h-1zM398 220h1v1h-1zM399 220h1v1h-1zM396 221h1v1h-1zM399 221h1v1h-1zM399 222h1v1h-1zM400 222h1v1h-1zM400 223h1v1h-1zM400 224h1v1h-1zM401 224h1v1h-1zM401 225h1v1h-1zM401 226h1v1h-1zM402 226h1v1h-1zM405 226h1v1h-1zM406 226h1v1h-1zM402 227h1v1h-1zM404 227h1v1h-1zM402 228h1v1h-1zM403 228h1v1h-1zM407 219h1v9h-1z"/><path class="c" fill="#000" d="M371 221h3v1h-3zM370 222h1v1h-1z"/><path class="c" fill="#00FFFF" d="M371 222h3v1h-3z"/><path class="c" fill="#000" d="M374 222h1v1h-1zM369 223h1v1h-1z"/><path class="c" fill="#00FFFF" d="M370 223h5v1h-5z"/><path class="c" fill="#000" d="M375 223h1v1h-1zM369 224h1v1h-1z"/><path class="c" fill="#00FFFF" d="M370 224h5v1h-5z"/><path class="c" fill="#000" d="M375 224h1v1h-1zM369 225h1v1h-1z"/><path class="c" fill="#00FFFF" d="M370 225h5v1h-5z"/><path class="c" fill="#000" d="M375 225h1v1h-1zM370 226h1v1h-1z"/><path class="c" fill="#00FFFF" d="M371 226h3v1h-3z"/><path class="c" fill="#000" d="M374 226h1v1h-1zM371 227h3v1h-3zM376 218h7v5h-7z"/><path class="c" fill="#00FFFF" d="M377 219h5v3h-5z"/><path class="c" fill="#fff" d="M405 230h1v25h-1z"/><path class="c" fill="#000" d="M413 180h27v1h-27zM413 181h1v1h-1z"/><path class="c" fill="#00FFFF" d="M414 181h25v1h-25z"/><path class="c" fill="#000" d="M439 181h2v1h-2zM413 182h28v1h-28zM413 183h1v1h-1z"/><path class="c" fill="#00FFFF" d="M414 183h1v1h-1z"/><path class="c" fill="#000" d="M415 183h2v1h-2z"/><path class="c" fill="#00FFFF" d="M417 183h1v1h-1z"/><path class="c" fill="#000" d="M418 183h1v1h-1z"/><path class="c" fill="#00FFFF" d="M419 183h15v1h-15z"/><path class="c" fill="#000" d="M434 183h1v1h-1z"/><path class="c" fill="#00FFFF" d="M435 183h1v1h-1z"/><path class="c" fill="#000" d="M436 183h2v1h-2z"/><path class="c" fill="#00FFFF" d="M438 183h1v1h-1z"/><path class="c" fill="#000" d="M439 183h1v1h-1zM413 184h1v1h-1z"/><path class="c" fill="#00FFFF" d="M414 184h2v1h-2z"/><path class="c" fill="#000" d="M416 184h3v1h-3z"/><path class="c" fill="#00FFFF" d="M419 184h15v1h-15z"/><path class="c" fill="#000" d="M434 184h3v1h-3z"/><path class="c" fill="#00FFFF" d="M437 184h2v1h-2z"/><path class="c" fill="#000" d="M439 184h1v1h-1zM413 185h1v1h-1z"/><path class="c" fill="#00FFFF" d="M414 185h3v1h-3z"/><path class="c" fill="#000" d="M417 185h3v1h-3z"/><path class="c" fill="#00FFFF" d="M420 185h13v1h-13z"/><path class="c" fill="#000" d="M433 185h3v1h-3z"/><path class="c" fill="#00FFFF" d="M436 185h3v1h-3z"/><path class="c" fill="#000" d="M439 185h1v1h-1zM413 186h1v1h-1z"/><path class="c" fill="#00FFFF" d="M414 186h3v1h-3z"/><path class="c" fill="#000" d="M417 186h3v1h-3z"/><path class="c" fill="#00FFFF" d="M420 186h13v1h-13z"/><path class="c" fill="#000" d="M433 186h3v1h-3z"/><path class="c" fill="#00FFFF" d="M436 186h3v1h-3z"/><path class="c" fill="#000" d="M439 186h1v1h-1zM413 187h27v1h-27zM413 188h2v1h-2z"/><path class="c" fill="#00FFFF" d="M415 188h23v1h-23z"/><path class="c" fill="#000" d="M438 188h2v1h-2zM415 189h1v1h-1z"/><path class="c" fill="#00FFFF" d="M416 189h20v1h-20z"/><path class="c" fill="#000" d="M436 189h2v1h-2zM416 190h2v1h-2z"/><path class="c" fill="#00FFFF" d="M418 190h18v1h-18z"/><path class="c" fill="#000" d="M436 190h2v1h-2zM418 191h2v1h-2z"/><path class="c" fill="#00FFFF" d="M420 191h14v1h-14z"/><path class="c" fill="#000" d="M434 191h2v1h-2zM419 192h15v1h-15z"/><path class="c" fill="#fff" d="M427 194h1v24h-1z"/><path class="c" fill="#00FFFF" d="M423 222h10v1h-10zM435 222h10v1h-10zM447 222h8v1h-8zM421 225h5v1h-5zM428 225h10v1h-10zM440 225h10v1h-10zM452 225h3v1h-3zM421 219h1v1h-1zM422 219h1v1h-1zM420 220h1v1h-1zM422 220h1v1h-1zM423 220h1v1h-1zM420 221h1v1h-1zM423 221h1v1h-1zM423 222h1v1h-1zM424 222h1v1h-1zM424 223h1v1h-1zM424 224h1v1h-1zM425 224h1v1h-1zM425 225h1v1h-1zM425 226h1v1h-1zM426 226h1v1h-1zM429 226h1v1h-1zM430 226h1v1h-1zM426 227h1v1h-1zM428 227h1v1h-1zM426 228h1v1h-1zM427 228h1v1h-1zM433 219h1v1h-1zM434 219h1v1h-1zM432 220h1v1h-1zM434 220h1v1h-1zM435 220h1v1h-1zM432 221h1v1h-1zM435 221h1v1h-1zM435 222h1v1h-1zM436 222h1v1h-1zM436 223h1v1h-1zM436 224h1v1h-1zM437 224h1v1h-1zM437 225h1v1h-1zM437 226h1v1h-1zM438 226h1v1h-1zM441 226h1v1h-1zM442 226h1v1h-1zM438 227h1v1h-1zM440 227h1v1h-1zM438 228h1v1h-1zM439 228h1v1h-1zM445 219h1v1h-1zM446 219h1v1h-1zM444 220h1v1h-1zM446 220h1v1h-1zM447 220h1v1h-1zM444 221h1v1h-1zM447 221h1v1h-1zM447 222h1v1h-1zM448 222h1v1h-1zM448 223h1v1h-1zM448 224h1v1h-1zM449 224h1v1h-1zM449 225h1v1h-1zM449 226h1v1h-1zM450 226h1v1h-1zM453 226h1v1h-1zM454 226h1v1h-1zM450 227h1v1h-1zM452 227h1v1h-1zM450 228h1v1h-1zM451 228h1v1h-1zM455 219h1v9h-1z"/><path class="c" fill="#000" d="M419 221h3v1h-3zM418 222h1v1h-1z"/><path class="c" fill="#00FFFF" d="M419 222h3v1h-3z"/><path class="c" fill="#000" d="M422 222h1v1h-1zM417 223h1v1h-1z"/><path class="c" fill="#00FFFF" d="M418 223h5v1h-5z"/><path class="c" fill="#000" d="M423 223h1v1h-1zM417 224h1v1h-1z"/><path class="c" fill="#00FFFF" d="M418 224h5v1h-5z"/><path class="c" fill="#000" d="M423 224h1v1h-1zM417 225h1v1h-1z"/><path class="c" fill="#00FFFF" d="M418 225h5v1h-5z"/><path class="c" fill="#000" d="M423 225h1v1h-1zM418 226h1v1h-1z"/><path class="c" fill="#00FFFF" d="M419 226h3v1h-3z"/><path class="c" fill="#000" d="M422 226h1v1h-1zM419 227h3v1h-3zM424 218h7v5h-7z"/><path class="c" fill="#00FFFF" d="M425 219h5v3h-5z"/><path class="c" fill="#fff" d="M453 230h1v25h-1z"/><path class="c" fill="#000" d="M457 180h27v1h-27zM457 181h1v1h-1z"/><path class="c" fill="#00FFFF" d="M458 181h25v1h-25z"/><path class="c" fill="#000" d="M483 181h2v1h-2zM457 182h28v1h-28zM457 183h1v1h-1z"/><path class="c" fill="#00FFFF" d="M458 183h1v1h-1z"/><path class="c" fill="#000" d="M459 183h2v1h-2z"/><path class="c" fill="#00FFFF" d="M461 183h1v1h-1z"/><path class="c" fill="#000" d="M462 183h1v1h-1z"/><path class="c" fill="#00FFFF" d="M463 183h15v1h-15z"/><path class="c" fill="#000" d="M478 183h1v1h-1z"/><path class="c" fill="#00FFFF" d="M479 183h1v1h-1z"/><path class="c" fill="#000" d="M480 183h2v1h-2z"/><path class="c" fill="#00FFFF" d="M482 183h1v1h-1z"/><path class="c" fill="#000" d="M483 183h1v1h-1zM457 184h1v1h-1z"/><path class="c" fill="#00FFFF" d="M458 184h2v1h-2z"/><path class="c" fill="#000" d="M460 184h3v1h-3z"/><path class="c" fill="#00FFFF" d="M463 184h15v1h-15z"/><path class="c" fill="#000" d="M478 184h3v1h-3z"/><path class="c" fill="#00FFFF" d="M481 184h2v1h-2z"/><path class="c" fill="#000" d="M483 184h1v1h-1zM457 185h1v1h-1z"/><path class="c" fill="#00FFFF" d="M458 185h3v1h-3z"/><path class="c" fill="#000" d="M461 185h3v1h-3z"/><path class="c" fill="#00FFFF" d="M464 185h13v1h-13z"/><path class="c" fill="#000" d="M477 185h3v1h-3z"/><path class="c" fill="#00FFFF" d="M480 185h3v1h-3z"/><path class="c" fill="#000" d="M483 185h1v1h-1zM457 186h1v1h-1z"/><path class="c" fill="#00FFFF" d="M458 186h3v1h-3z"/><path class="c" fill="#000" d="M461 186h3v1h-3z"/><path class="c" fill="#00FFFF" d="M464 186h13v1h-13z"/><path class="c" fill="#000" d="M477 186h3v1h-3z"/><path class="c" fill="#00FFFF" d="M480 186h3v1h-3z"/><path class="c" fill="#000" d="M483 186h1v1h-1zM457 187h27v1h-27zM457 188h2v1h-2z"/><path class="c" fill="#00FFFF" d="M459 188h23v1h-23z"/><path class="c" fill="#000" d="M482 188h2v1h-2zM459 189h1v1h-1z"/><path class="c" fill="#00FFFF" d="M460 189h20v1h-20z"/><path class="c" fill="#000" d="M480 189h2v1h-2zM460 190h2v1h-2z"/><path class="c" fill="#00FFFF" d="M462 190h18v1h-18z"/><path class="c" fill="#000" d="M480 190h2v1h-2zM462 191h2v1h-2z"/><path class="c" fill="#00FFFF" d="M464 191h14v1h-14z"/><path class="c" fill="#000" d="M478 191h2v1h-2zM463 192h15v1h-15z"/><path class="c" fill="#fff" d="M471 194h1v24h-1z"/><path class="c" fill="#00FFFF" d="M467 222h10v1h-10zM479 222h10v1h-10zM491 222h8v1h-8zM465 225h5v1h-5zM472 225h10v1h-10zM484 225h10v1h-10zM496 225h3v1h-3zM465 219h1v1h-1zM466 219h1v1h-1zM464 220h1v1h-1zM466 220h1v1h-1zM467 220h1v1h-1zM464 221h1v1h-1zM467 221h1v1h-1zM467 222h1v1h-1zM468 222h1v1h-1zM468 223h1v1h-1zM468 224h1v1h-1zM469 224h1v1h-1zM469 225h1v1h-1zM469 226h1v1h-1zM470 226h1v1h-1zM473 226h1v1h-1zM474 226h1v1h-1zM470 227h1v1h-1zM472 227h1v1h-1zM470 228h1v1h-1zM471 228h1v1h-1zM477 219h1v1h-1zM478 219h1v1h-1zM476 220h1v1h-1zM478 220h1v1h-1zM479 220h1v1h-1zM476 221h1v1h-1zM479 221h1v1h-1zM479 222h1v1h-1zM480 222h1v1h-1zM480 223h1v1h-1zM480 224h1v1h-1zM481 224h1v1h-1zM481 225h1v1h-1zM481 226h1v1h-1zM482 226h1v1h-1zM485 226h1v1h-1zM486 226h1v1h-1zM482 227h1v1h-1zM484 227h1v1h-1zM482 228h1v1h-1zM483 228h1v1h-1zM489 219h1v1h-1zM490 219h1v1h-1zM488 220h1v1h-1zM490 220h1v1h-1zM491 220h1v1h-1zM488 221h1v1h-1zM491 221h1v1h-1zM491 222h1v1h-1zM492 222h1v1h-1zM492 223h1v1h-1zM492 224h1v1h-1zM493 224h1v1h-1zM493 225h1v1h-1zM493 226h1v1h-1zM494 226h1v1h-1zM497 226h1v1h-1zM498 226h1v1h-1zM494 227h1v1h-1zM496 227h1v1h-1zM494 228h1v1h-1zM495 228h1v1h-1zM499 219h1v9h-1z"/><path class="c" fill="#000" d="M463 221h3v1h-3zM462 222h1v1h-1z"/><path class="c" fill="#00FFFF" d="M463 222h3v1h-3z"/><path class="c" fill="#000" d="M466 222h1v1h-1zM461 223h1v1h-1z"/><path class="c" fill="#00FFFF" d="M462 223h5v1h-5z"/><path class="c" fill="#000" d="M467 223h1v1h-1zM461 224h1v1h-1z"/><path class="c" fill="#00FFFF" d="M462 224h5v1h-5z"/><path class="c" fill="#000" d="M467 224h1v1h-1zM461 225h1v1h-1z"/><path class="c" fill="#00FFFF" d="M462 225h5v1h-5z"/><path class="c" fill="#000" d="M467 225h1v1h-1zM462 226h1v1h-1z"/><path class="c" fill="#00FFFF" d="M463 226h3v1h-3z"/><path class="c" fill="#000" d="M466 226h1v1h-1zM463 227h3v1h-3zM468 218h7v5h-7z"/><path class="c" fill="#00FFFF" d="M469 219h5v3h-5z"/><path class="c" fill="#fff" d="M497 230h1v25h-1z"/><polygon points="80,304 85,298 173,298 168,304" fill="#3F9898"/><path class="c" fill="#4DC4C4" d="M80 304h88v80h-88z"/><path class="c" fill="#5BB7B7" d="M96 304h9v80h-9zM140 304h9v80h-9z"/><polygon points="168,304 173,298 173,380 168,385" fill="#5BDFDF"/><polygon points="80,384 87,388 117,388 124.0,384.5 131,388 161,388 168,384" fill="#48AAAA"/><path class="c" fill="#FFFFFF" d="M82 369h13v13h-13z"/><path class="c" fill="#ACA899" d="M82 369h12v1h-12zM82 369h1v12h-1z"/><path class="c" fill="#716F64" d="M83 370h10v1h-10zM83 370h1v10h-1z"/><path class="c" fill="#F1EFE2" d="M83 380h11v1h-11zM93 370h1v11h-1z"/><path class="c" fill="#FFFFFF" d="M126 369h13v13h-13z"/><path class="c" fill="#ACA899" d="M126 369h12v1h-12zM126 369h1v12h-1z"/><path class="c" fill="#716F64" d="M127 370h10v1h-10zM127 370h1v10h-1z"/><path class="c" fill="#F1EFE2" d="M127 380h11v1h-11zM137 370h1v11h-1z"/><polygon points="173,304 178,298 266,298 261,304" fill="#3F9898"/><path class="c" fill="#4DC4C4" d="M173 304h88v80h-88z"/><path class="c" fill="#5BB7B7" d="M189 304h9v80h-9zM233 304h9v80h-9z"/><polygon points="261,304 266,298 266,380 261,385" fill="#5BDFDF"/><polygon points="173,380.5 177,384 173,384" fill="#008080"/><polygon points="177,384 180,388 210,388 217.0,384.5 224,388 254,388 261,384" fill="#48AAAA"/><path class="c" fill="#FFFFFF" d="M174 369h13v13h-13z"/><path class="c" fill="#ACA899" d="M174 369h12v1h-12zM174 369h1v12h-1z"/><path class="c" fill="#716F64" d="M175 370h10v1h-10zM175 370h1v10h-1z"/><path class="c" fill="#F1EFE2" d="M175 380h11v1h-11zM185 370h1v11h-1z"/><path class="c" fill="#FFFFFF" d="M218 369h13v13h-13z"/><path class="c" fill="#ACA899" d="M218 369h12v1h-12zM218 369h1v12h-1z"/><path class="c" fill="#716F64" d="M219 370h10v1h-10zM219 370h1v10h-1z"/><path class="c" fill="#F1EFE2" d="M219 380h11v1h-11zM229 370h1v11h-1z"/><polygon points="266,304 271,298 358,298 353,304" fill="#3F9898"/><path class="c" fill="#4DC4C4" d="M266 304h87v80h-87z"/><path class="c" fill="#5BB7B7" d="M281 304h9v80h-9zM325 304h9v80h-9z"/><polygon points="353,304 358,298 358,380 353,385" fill="#5BDFDF"/><polygon points="266,380.5 270,384 266,384" fill="#008080"/><polygon points="270,384 272,388 302,388 309.0,384.5 316,388 346,388 353,384" fill="#48AAAA"/><path class="c" fill="#FFFFFF" d="M266 369h13v13h-13z"/><path class="c" fill="#ACA899" d="M266 369h12v1h-12zM266 369h1v12h-1z"/><path class="c" fill="#716F64" d="M267 370h10v1h-10zM267 370h1v10h-1z"/><path class="c" fill="#F1EFE2" d="M267 380h11v1h-11zM277 370h1v11h-1z"/><path class="c" fill="#FFFFFF" d="M310 369h13v13h-13z"/><path class="c" fill="#ACA899" d="M310 369h12v1h-12zM310 369h1v12h-1z"/><path class="c" fill="#716F64" d="M311 370h10v1h-10zM311 370h1v10h-1z"/><path class="c" fill="#F1EFE2" d="M311 380h11v1h-11zM321 370h1v11h-1z"/><polygon points="358,304 363,298 406,298 401,304" fill="#3F9898"/><path class="c" fill="#4DC4C4" d="M358 304h43v80h-43z"/><path class="c" fill="#5BB7B7" d="M373 304h9v80h-9z"/><polygon points="401,304 406,298 406,380 401,385" fill="#5BDFDF"/><polygon points="358,380.5 362,384 358,384" fill="#008080"/><polygon points="362,384 364,388 394,388 401,384" fill="#48AAAA"/><path class="c" fill="#FFFFFF" d="M358 369h13v13h-13z"/><path class="c" fill="#ACA899" d="M358 369h12v1h-12zM358 369h1v12h-1z"/><path class="c" fill="#716F64" d="M359 370h10v1h-10zM359 370h1v10h-1z"/><path class="c" fill="#F1EFE2" d="M359 380h11v1h-11zM369 370h1v11h-1z"/><polygon points="406,304 411,298 498,298 493,304" fill="#3F9898"/><path class="c" fill="#4DC4C4" d="M406 304h87v80h-87z"/><path class="c" fill="#5BB7B7" d="M421 304h9v80h-9zM465 304h9v80h-9z"/><polygon points="493,304 498,298 498,380 493,385" fill="#5BDFDF"/><polygon points="406,380.5 410,384 406,384" fill="#008080"/><polygon points="410,384 412,388 442,388 449.0,384.5 456,388 486,388 493,384" fill="#48AAAA"/><path class="c" fill="#FFFFFF" d="M406 369h13v13h-13z"/><path class="c" fill="#ACA899" d="M406 369h12v1h-12zM406 369h1v12h-1z"/><path class="c" fill="#716F64" d="M407 370h10v1h-10zM407 370h1v10h-1z"/><path class="c" fill="#F1EFE2" d="M407 380h11v1h-11zM417 370h1v11h-1z"/><path class="c" fill="#FFFFFF" d="M450 369h13v13h-13z"/><path class="c" fill="#ACA899" d="M450 369h12v1h-12zM450 369h1v12h-1z"/><path class="c" fill="#716F64" d="M451 370h10v1h-10zM451 370h1v10h-1z"/><path class="c" fill="#F1EFE2" d="M451 380h11v1h-11zM461 370h1v11h-1z"/><path class="c" fill="#FFFFFF" d="M108 334h29v11h-29z"/><path class="c" fill="#ACA899" d="M108 334h28v10h-28z"/><path class="c" fill="#ECE9D8" d="M109 335h27v9h-27z"/><text x="114.5" y="343" font-size="10" fill="#000" style="" text-anchor="start" textLength="17" lengthAdjust="spacingAndGlyphs" >Б-20</text><path class="c" fill="#FFFFFF" d="M108 345h29v11h-29z"/><path class="c" fill="#ACA899" d="M108 345h28v10h-28z"/><path class="c" fill="#ECE9D8" d="M109 346h27v9h-27z"/><text x="117.0" y="354" font-size="10" fill="#000" style="" text-anchor="start" textLength="12" lengthAdjust="spacingAndGlyphs" >В/с</text><path class="c" fill="#FFFFFF" d="M201 334h29v11h-29z"/><path class="c" fill="#ACA899" d="M201 334h28v10h-28z"/><path class="c" fill="#ECE9D8" d="M202 335h27v9h-27z"/><text x="207.5" y="343" font-size="10" fill="#000" style="" text-anchor="start" textLength="17" lengthAdjust="spacingAndGlyphs" >Б-21</text><path class="c" fill="#FFFFFF" d="M201 345h29v11h-29z"/><path class="c" fill="#ACA899" d="M201 345h28v10h-28z"/><path class="c" fill="#ECE9D8" d="M202 346h27v9h-27z"/><text x="210.0" y="354" font-size="10" fill="#000" style="" text-anchor="start" textLength="12" lengthAdjust="spacingAndGlyphs" >В/с</text><path class="c" fill="#FFFFFF" d="M293 334h29v11h-29z"/><path class="c" fill="#ACA899" d="M293 334h28v10h-28z"/><path class="c" fill="#ECE9D8" d="M294 335h27v9h-27z"/><text x="299.5" y="343" font-size="10" fill="#000" style="" text-anchor="start" textLength="17" lengthAdjust="spacingAndGlyphs" >Б-22</text><path class="c" fill="#FFFFFF" d="M293 345h29v11h-29z"/><path class="c" fill="#ACA899" d="M293 345h28v10h-28z"/><path class="c" fill="#ECE9D8" d="M294 346h27v9h-27z"/><text x="302.0" y="354" font-size="10" fill="#000" style="" text-anchor="start" textLength="12" lengthAdjust="spacingAndGlyphs" >В/с</text><path class="c" fill="#FFFFFF" d="M364 334h29v11h-29z"/><path class="c" fill="#ACA899" d="M364 334h28v10h-28z"/><path class="c" fill="#ECE9D8" d="M365 335h27v9h-27z"/><text x="370.5" y="343" font-size="10" fill="#000" style="" text-anchor="start" textLength="17" lengthAdjust="spacingAndGlyphs" >Б-23</text><path class="c" fill="#FFFFFF" d="M364 345h29v11h-29z"/><path class="c" fill="#ACA899" d="M364 345h28v10h-28z"/><path class="c" fill="#ECE9D8" d="M365 346h27v9h-27z"/><text x="373.0" y="354" font-size="10" fill="#000" style="" text-anchor="start" textLength="12" lengthAdjust="spacingAndGlyphs" >В/с</text><path class="c" fill="#FFFFFF" d="M433 334h29v11h-29z"/><path class="c" fill="#ACA899" d="M433 334h28v10h-28z"/><path class="c" fill="#ECE9D8" d="M434 335h27v9h-27z"/><text x="439.5" y="343" font-size="10" fill="#000" style="" text-anchor="start" textLength="17" lengthAdjust="spacingAndGlyphs" >Б-29</text><path class="c" fill="#FFFFFF" d="M433 345h29v11h-29z"/><path class="c" fill="#ACA899" d="M433 345h28v10h-28z"/><path class="c" fill="#ECE9D8" d="M434 346h27v9h-27z"/><text x="442.0" y="354" font-size="10" fill="#000" style="" text-anchor="start" textLength="12" lengthAdjust="spacingAndGlyphs" >1/с</text><path class="c" fill="#000" d="M88 388h27v1h-27zM88 389h1v1h-1z"/><path class="c" fill="#00FFFF" d="M89 389h25v1h-25z"/><path class="c" fill="#000" d="M114 389h2v1h-2zM88 390h28v1h-28zM88 391h1v1h-1z"/><path class="c" fill="#00FFFF" d="M89 391h1v1h-1z"/><path class="c" fill="#000" d="M90 391h2v1h-2z"/><path class="c" fill="#00FFFF" d="M92 391h1v1h-1z"/><path class="c" fill="#000" d="M93 391h1v1h-1z"/><path class="c" fill="#00FFFF" d="M94 391h15v1h-15z"/><path class="c" fill="#000" d="M109 391h1v1h-1z"/><path class="c" fill="#00FFFF" d="M110 391h1v1h-1z"/><path class="c" fill="#000" d="M111 391h2v1h-2z"/><path class="c" fill="#00FFFF" d="M113 391h1v1h-1z"/><path class="c" fill="#000" d="M114 391h1v1h-1zM88 392h1v1h-1z"/><path class="c" fill="#00FFFF" d="M89 392h2v1h-2z"/><path class="c" fill="#000" d="M91 392h3v1h-3z"/><path class="c" fill="#00FFFF" d="M94 392h15v1h-15z"/><path class="c" fill="#000" d="M109 392h3v1h-3z"/><path class="c" fill="#00FFFF" d="M112 392h2v1h-2z"/><path class="c" fill="#000" d="M114 392h1v1h-1zM88 393h1v1h-1z"/><path class="c" fill="#00FFFF" d="M89 393h3v1h-3z"/><path class="c" fill="#000" d="M92 393h3v1h-3z"/><path class="c" fill="#00FFFF" d="M95 393h13v1h-13z"/><path class="c" fill="#000" d="M108 393h3v1h-3z"/><path class="c" fill="#00FFFF" d="M111 393h3v1h-3z"/><path class="c" fill="#000" d="M114 393h1v1h-1zM88 394h1v1h-1z"/><path class="c" fill="#00FFFF" d="M89 394h3v1h-3z"/><path class="c" fill="#000" d="M92 394h3v1h-3z"/><path class="c" fill="#00FFFF" d="M95 394h13v1h-13z"/><path class="c" fill="#000" d="M108 394h3v1h-3z"/><path class="c" fill="#00FFFF" d="M111 394h3v1h-3z"/><path class="c" fill="#000" d="M114 394h1v1h-1zM88 395h27v1h-27zM88 396h2v1h-2z"/><path class="c" fill="#00FFFF" d="M90 396h23v1h-23z"/><path class="c" fill="#000" d="M113 396h2v1h-2zM90 397h1v1h-1z"/><path class="c" fill="#00FFFF" d="M91 397h20v1h-20z"/><path class="c" fill="#000" d="M111 397h2v1h-2zM91 398h2v1h-2z"/><path class="c" fill="#00FFFF" d="M93 398h18v1h-18z"/><path class="c" fill="#000" d="M111 398h2v1h-2zM93 399h2v1h-2z"/><path class="c" fill="#00FFFF" d="M95 399h14v1h-14z"/><path class="c" fill="#000" d="M109 399h2v1h-2zM94 400h15v1h-15z"/><path class="c" fill="#fff" d="M102 402h1v24h-1z"/><path class="c" fill="#00FFFF" d="M98 430h10v1h-10zM110 430h10v1h-10zM122 430h8v1h-8zM96 433h5v1h-5zM103 433h10v1h-10zM115 433h10v1h-10zM127 433h3v1h-3zM96 427h1v1h-1zM97 427h1v1h-1zM95 428h1v1h-1zM97 428h1v1h-1zM98 428h1v1h-1zM95 429h1v1h-1zM98 429h1v1h-1zM98 430h1v1h-1zM99 430h1v1h-1zM99 431h1v1h-1zM99 432h1v1h-1zM100 432h1v1h-1zM100 433h1v1h-1zM100 434h1v1h-1zM101 434h1v1h-1zM104 434h1v1h-1zM105 434h1v1h-1zM101 435h1v1h-1zM103 435h1v1h-1zM101 436h1v1h-1zM102 436h1v1h-1zM108 427h1v1h-1zM109 427h1v1h-1zM107 428h1v1h-1zM109 428h1v1h-1zM110 428h1v1h-1zM107 429h1v1h-1zM110 429h1v1h-1zM110 430h1v1h-1zM111 430h1v1h-1zM111 431h1v1h-1zM111 432h1v1h-1zM112 432h1v1h-1zM112 433h1v1h-1zM112 434h1v1h-1zM113 434h1v1h-1zM116 434h1v1h-1zM117 434h1v1h-1zM113 435h1v1h-1zM115 435h1v1h-1zM113 436h1v1h-1zM114 436h1v1h-1zM120 427h1v1h-1zM121 427h1v1h-1zM119 428h1v1h-1zM121 428h1v1h-1zM122 428h1v1h-1zM119 429h1v1h-1zM122 429h1v1h-1zM122 430h1v1h-1zM123 430h1v1h-1zM123 431h1v1h-1zM123 432h1v1h-1zM124 432h1v1h-1zM124 433h1v1h-1zM124 434h1v1h-1zM125 434h1v1h-1zM128 434h1v1h-1zM129 434h1v1h-1zM125 435h1v1h-1zM127 435h1v1h-1zM125 436h1v1h-1zM126 436h1v1h-1zM130 427h1v9h-1z"/><path class="c" fill="#000" d="M94 429h3v1h-3zM93 430h1v1h-1z"/><path class="c" fill="#00FFFF" d="M94 430h3v1h-3z"/><path class="c" fill="#000" d="M97 430h1v1h-1zM92 431h1v1h-1z"/><path class="c" fill="#00FFFF" d="M93 431h5v1h-5z"/><path class="c" fill="#000" d="M98 431h1v1h-1zM92 432h1v1h-1z"/><path class="c" fill="#00FFFF" d="M93 432h5v1h-5z"/><path class="c" fill="#000" d="M98 432h1v1h-1zM92 433h1v1h-1z"/><path class="c" fill="#00FFFF" d="M93 433h5v1h-5z"/><path class="c" fill="#000" d="M98 433h1v1h-1zM93 434h1v1h-1z"/><path class="c" fill="#00FFFF" d="M94 434h3v1h-3z"/><path class="c" fill="#000" d="M97 434h1v1h-1zM94 435h3v1h-3zM99 426h7v5h-7z"/><path class="c" fill="#00FFFF" d="M100 427h5v3h-5z"/><path class="c" fill="#fff" d="M128 438h1v25h-1z"/><path class="c" fill="#000" d="M132 388h27v1h-27zM132 389h1v1h-1z"/><path class="c" fill="#00FFFF" d="M133 389h25v1h-25z"/><path class="c" fill="#000" d="M158 389h2v1h-2zM132 390h28v1h-28zM132 391h1v1h-1z"/><path class="c" fill="#00FFFF" d="M133 391h1v1h-1z"/><path class="c" fill="#000" d="M134 391h2v1h-2z"/><path class="c" fill="#00FFFF" d="M136 391h1v1h-1z"/><path class="c" fill="#000" d="M137 391h1v1h-1z"/><path class="c" fill="#00FFFF" d="M138 391h15v1h-15z"/><path class="c" fill="#000" d="M153 391h1v1h-1z"/><path class="c" fill="#00FFFF" d="M154 391h1v1h-1z"/><path class="c" fill="#000" d="M155 391h2v1h-2z"/><path class="c" fill="#00FFFF" d="M157 391h1v1h-1z"/><path class="c" fill="#000" d="M158 391h1v1h-1zM132 392h1v1h-1z"/><path class="c" fill="#00FFFF" d="M133 392h2v1h-2z"/><path class="c" fill="#000" d="M135 392h3v1h-3z"/><path class="c" fill="#00FFFF" d="M138 392h15v1h-15z"/><path class="c" fill="#000" d="M153 392h3v1h-3z"/><path class="c" fill="#00FFFF" d="M156 392h2v1h-2z"/><path class="c" fill="#000" d="M158 392h1v1h-1zM132 393h1v1h-1z"/><path class="c" fill="#00FFFF" d="M133 393h3v1h-3z"/><path class="c" fill="#000" d="M136 393h3v1h-3z"/><path class="c" fill="#00FFFF" d="M139 393h13v1h-13z"/><path class="c" fill="#000" d="M152 393h3v1h-3z"/><path class="c" fill="#00FFFF" d="M155 393h3v1h-3z"/><path class="c" fill="#000" d="M158 393h1v1h-1zM132 394h1v1h-1z"/><path class="c" fill="#00FFFF" d="M133 394h3v1h-3z"/><path class="c" fill="#000" d="M136 394h3v1h-3z"/><path class="c" fill="#00FFFF" d="M139 394h13v1h-13z"/><path class="c" fill="#000" d="M152 394h3v1h-3z"/><path class="c" fill="#00FFFF" d="M155 394h3v1h-3z"/><path class="c" fill="#000" d="M158 394h1v1h-1zM132 395h27v1h-27zM132 396h2v1h-2z"/><path class="c" fill="#00FFFF" d="M134 396h23v1h-23z"/><path class="c" fill="#000" d="M157 396h2v1h-2zM134 397h1v1h-1z"/><path class="c" fill="#00FFFF" d="M135 397h20v1h-20z"/><path class="c" fill="#000" d="M155 397h2v1h-2zM135 398h2v1h-2z"/><path class="c" fill="#00FFFF" d="M137 398h18v1h-18z"/><path class="c" fill="#000" d="M155 398h2v1h-2zM137 399h2v1h-2z"/><path class="c" fill="#00FFFF" d="M139 399h14v1h-14z"/><path class="c" fill="#000" d="M153 399h2v1h-2zM138 400h15v1h-15z"/><path class="c" fill="#fff" d="M146 402h1v24h-1z"/><path class="c" fill="#00FFFF" d="M142 430h10v1h-10zM154 430h10v1h-10zM166 430h8v1h-8zM140 433h5v1h-5zM147 433h10v1h-10zM159 433h10v1h-10zM171 433h3v1h-3zM140 427h1v1h-1zM141 427h1v1h-1zM139 428h1v1h-1zM141 428h1v1h-1zM142 428h1v1h-1zM139 429h1v1h-1zM142 429h1v1h-1zM142 430h1v1h-1zM143 430h1v1h-1zM143 431h1v1h-1zM143 432h1v1h-1zM144 432h1v1h-1zM144 433h1v1h-1zM144 434h1v1h-1zM145 434h1v1h-1zM148 434h1v1h-1zM149 434h1v1h-1zM145 435h1v1h-1zM147 435h1v1h-1zM145 436h1v1h-1zM146 436h1v1h-1zM152 427h1v1h-1zM153 427h1v1h-1zM151 428h1v1h-1zM153 428h1v1h-1zM154 428h1v1h-1zM151 429h1v1h-1zM154 429h1v1h-1zM154 430h1v1h-1zM155 430h1v1h-1zM155 431h1v1h-1zM155 432h1v1h-1zM156 432h1v1h-1zM156 433h1v1h-1zM156 434h1v1h-1zM157 434h1v1h-1zM160 434h1v1h-1zM161 434h1v1h-1zM157 435h1v1h-1zM159 435h1v1h-1zM157 436h1v1h-1zM158 436h1v1h-1zM164 427h1v1h-1zM165 427h1v1h-1zM163 428h1v1h-1zM165 428h1v1h-1zM166 428h1v1h-1zM163 429h1v1h-1zM166 429h1v1h-1zM166 430h1v1h-1zM167 430h1v1h-1zM167 431h1v1h-1zM167 432h1v1h-1zM168 432h1v1h-1zM168 433h1v1h-1zM168 434h1v1h-1zM169 434h1v1h-1zM172 434h1v1h-1zM173 434h1v1h-1zM169 435h1v1h-1zM171 435h1v1h-1zM169 436h1v1h-1zM170 436h1v1h-1zM174 427h1v9h-1z"/><path class="c" fill="#000" d="M138 429h3v1h-3zM137 430h1v1h-1z"/><path class="c" fill="#00FFFF" d="M138 430h3v1h-3z"/><path class="c" fill="#000" d="M141 430h1v1h-1zM136 431h1v1h-1z"/><path class="c" fill="#00FFFF" d="M137 431h5v1h-5z"/><path class="c" fill="#000" d="M142 431h1v1h-1zM136 432h1v1h-1z"/><path class="c" fill="#00FFFF" d="M137 432h5v1h-5z"/><path class="c" fill="#000" d="M142 432h1v1h-1zM136 433h1v1h-1z"/><path class="c" fill="#00FFFF" d="M137 433h5v1h-5z"/><path class="c" fill="#000" d="M142 433h1v1h-1zM137 434h1v1h-1z"/><path class="c" fill="#00FFFF" d="M138 434h3v1h-3z"/><path class="c" fill="#000" d="M141 434h1v1h-1zM138 435h3v1h-3zM143 426h7v5h-7z"/><path class="c" fill="#00FFFF" d="M144 427h5v3h-5z"/><path class="c" fill="#fff" d="M172 438h1v25h-1z"/><path class="c" fill="#000" d="M181 388h27v1h-27zM181 389h1v1h-1z"/><path class="c" fill="#00FFFF" d="M182 389h25v1h-25z"/><path class="c" fill="#000" d="M207 389h2v1h-2zM181 390h28v1h-28zM181 391h1v1h-1z"/><path class="c" fill="#00FFFF" d="M182 391h1v1h-1z"/><path class="c" fill="#000" d="M183 391h2v1h-2z"/><path class="c" fill="#00FFFF" d="M185 391h1v1h-1z"/><path class="c" fill="#000" d="M186 391h1v1h-1z"/><path class="c" fill="#00FFFF" d="M187 391h15v1h-15z"/><path class="c" fill="#000" d="M202 391h1v1h-1z"/><path class="c" fill="#00FFFF" d="M203 391h1v1h-1z"/><path class="c" fill="#000" d="M204 391h2v1h-2z"/><path class="c" fill="#00FFFF" d="M206 391h1v1h-1z"/><path class="c" fill="#000" d="M207 391h1v1h-1zM181 392h1v1h-1z"/><path class="c" fill="#00FFFF" d="M182 392h2v1h-2z"/><path class="c" fill="#000" d="M184 392h3v1h-3z"/><path class="c" fill="#00FFFF" d="M187 392h15v1h-15z"/><path class="c" fill="#000" d="M202 392h3v1h-3z"/><path class="c" fill="#00FFFF" d="M205 392h2v1h-2z"/><path class="c" fill="#000" d="M207 392h1v1h-1zM181 393h1v1h-1z"/><path class="c" fill="#00FFFF" d="M182 393h3v1h-3z"/><path class="c" fill="#000" d="M185 393h3v1h-3z"/><path class="c" fill="#00FFFF" d="M188 393h13v1h-13z"/><path class="c" fill="#000" d="M201 393h3v1h-3z"/><path class="c" fill="#00FFFF" d="M204 393h3v1h-3z"/><path class="c" fill="#000" d="M207 393h1v1h-1zM181 394h1v1h-1z"/><path class="c" fill="#00FFFF" d="M182 394h3v1h-3z"/><path class="c" fill="#000" d="M185 394h3v1h-3z"/><path class="c" fill="#00FFFF" d="M188 394h13v1h-13z"/><path class="c" fill="#000" d="M201 394h3v1h-3z"/><path class="c" fill="#00FFFF" d="M204 394h3v1h-3z"/><path class="c" fill="#000" d="M207 394h1v1h-1zM181 395h27v1h-27zM181 396h2v1h-2z"/><path class="c" fill="#00FFFF" d="M183 396h23v1h-23z"/><path class="c" fill="#000" d="M206 396h2v1h-2zM183 397h1v1h-1z"/><path class="c" fill="#00FFFF" d="M184 397h20v1h-20z"/><path class="c" fill="#000" d="M204 397h2v1h-2zM184 398h2v1h-2z"/><path class="c" fill="#00FFFF" d="M186 398h18v1h-18z"/><path class="c" fill="#000" d="M204 398h2v1h-2zM186 399h2v1h-2z"/><path class="c" fill="#00FFFF" d="M188 399h14v1h-14z"/><path class="c" fill="#000" d="M202 399h2v1h-2zM187 400h15v1h-15z"/><path class="c" fill="#fff" d="M195 402h1v24h-1z"/><path class="c" fill="#00FFFF" d="M191 430h10v1h-10zM203 430h10v1h-10zM215 430h8v1h-8zM189 433h5v1h-5zM196 433h10v1h-10zM208 433h10v1h-10zM220 433h3v1h-3zM189 427h1v1h-1zM190 427h1v1h-1zM188 428h1v1h-1zM190 428h1v1h-1zM191 428h1v1h-1zM188 429h1v1h-1zM191 429h1v1h-1zM191 430h1v1h-1zM192 430h1v1h-1zM192 431h1v1h-1zM192 432h1v1h-1zM193 432h1v1h-1zM193 433h1v1h-1zM193 434h1v1h-1zM194 434h1v1h-1zM197 434h1v1h-1zM198 434h1v1h-1zM194 435h1v1h-1zM196 435h1v1h-1zM194 436h1v1h-1zM195 436h1v1h-1zM201 427h1v1h-1zM202 427h1v1h-1zM200 428h1v1h-1zM202 428h1v1h-1zM203 428h1v1h-1zM200 429h1v1h-1zM203 429h1v1h-1zM203 430h1v1h-1zM204 430h1v1h-1zM204 431h1v1h-1zM204 432h1v1h-1zM205 432h1v1h-1zM205 433h1v1h-1zM205 434h1v1h-1zM206 434h1v1h-1zM209 434h1v1h-1zM210 434h1v1h-1zM206 435h1v1h-1zM208 435h1v1h-1zM206 436h1v1h-1zM207 436h1v1h-1zM213 427h1v1h-1zM214 427h1v1h-1zM212 428h1v1h-1zM214 428h1v1h-1zM215 428h1v1h-1zM212 429h1v1h-1zM215 429h1v1h-1zM215 430h1v1h-1zM216 430h1v1h-1zM216 431h1v1h-1zM216 432h1v1h-1zM217 432h1v1h-1zM217 433h1v1h-1zM217 434h1v1h-1zM218 434h1v1h-1zM221 434h1v1h-1zM222 434h1v1h-1zM218 435h1v1h-1zM220 435h1v1h-1zM218 436h1v1h-1zM219 436h1v1h-1zM223 427h1v9h-1z"/><path class="c" fill="#000" d="M187 429h3v1h-3zM186 430h1v1h-1z"/><path class="c" fill="#00FFFF" d="M187 430h3v1h-3z"/><path class="c" fill="#000" d="M190 430h1v1h-1zM185 431h1v1h-1z"/><path class="c" fill="#00FFFF" d="M186 431h5v1h-5z"/><path class="c" fill="#000" d="M191 431h1v1h-1zM185 432h1v1h-1z"/><path class="c" fill="#00FFFF" d="M186 432h5v1h-5z"/><path class="c" fill="#000" d="M191 432h1v1h-1zM185 433h1v1h-1z"/><path class="c" fill="#00FFFF" d="M186 433h5v1h-5z"/><path class="c" fill="#000" d="M191 433h1v1h-1zM186 434h1v1h-1z"/><path class="c" fill="#00FFFF" d="M187 434h3v1h-3z"/><path class="c" fill="#000" d="M190 434h1v1h-1zM187 435h3v1h-3zM192 426h7v5h-7z"/><path class="c" fill="#00FFFF" d="M193 427h5v3h-5z"/><path class="c" fill="#fff" d="M221 438h1v25h-1z"/><path class="c" fill="#000" d="M225 388h27v1h-27zM225 389h1v1h-1z"/><path class="c" fill="#00FFFF" d="M226 389h25v1h-25z"/><path class="c" fill="#000" d="M251 389h2v1h-2zM225 390h28v1h-28zM225 391h1v1h-1z"/><path class="c" fill="#00FFFF" d="M226 391h1v1h-1z"/><path class="c" fill="#000" d="M227 391h2v1h-2z"/><path class="c" fill="#00FFFF" d="M229 391h1v1h-1z"/><path class="c" fill="#000" d="M230 391h1v1h-1z"/><path class="c" fill="#00FFFF" d="M231 391h15v1h-15z"/><path class="c" fill="#000" d="M246 391h1v1h-1z"/><path class="c" fill="#00FFFF" d="M247 391h1v1h-1z"/><path class="c" fill="#000" d="M248 391h2v1h-2z"/><path class="c" fill="#00FFFF" d="M250 391h1v1h-1z"/><path class="c" fill="#000" d="M251 391h1v1h-1zM225 392h1v1h-1z"/><path class="c" fill="#00FFFF" d="M226 392h2v1h-2z"/><path class="c" fill="#000" d="M228 392h3v1h-3z"/><path class="c" fill="#00FFFF" d="M231 392h15v1h-15z"/><path class="c" fill="#000" d="M246 392h3v1h-3z"/><path class="c" fill="#00FFFF" d="M249 392h2v1h-2z"/><path class="c" fill="#000" d="M251 392h1v1h-1zM225 393h1v1h-1z"/><path class="c" fill="#00FFFF" d="M226 393h3v1h-3z"/><path class="c" fill="#000" d="M229 393h3v1h-3z"/><path class="c" fill="#00FFFF" d="M232 393h13v1h-13z"/><path class="c" fill="#000" d="M245 393h3v1h-3z"/><path class="c" fill="#00FFFF" d="M248 393h3v1h-3z"/><path class="c" fill="#000" d="M251 393h1v1h-1zM225 394h1v1h-1z"/><path class="c" fill="#00FFFF" d="M226 394h3v1h-3z"/><path class="c" fill="#000" d="M229 394h3v1h-3z"/><path class="c" fill="#00FFFF" d="M232 394h13v1h-13z"/><path class="c" fill="#000" d="M245 394h3v1h-3z"/><path class="c" fill="#00FFFF" d="M248 394h3v1h-3z"/><path class="c" fill="#000" d="M251 394h1v1h-1zM225 395h27v1h-27zM225 396h2v1h-2z"/><path class="c" fill="#00FFFF" d="M227 396h23v1h-23z"/><path class="c" fill="#000" d="M250 396h2v1h-2zM227 397h1v1h-1z"/><path class="c" fill="#00FFFF" d="M228 397h20v1h-20z"/><path class="c" fill="#000" d="M248 397h2v1h-2zM228 398h2v1h-2z"/><path class="c" fill="#00FFFF" d="M230 398h18v1h-18z"/><path class="c" fill="#000" d="M248 398h2v1h-2zM230 399h2v1h-2z"/><path class="c" fill="#00FFFF" d="M232 399h14v1h-14z"/><path class="c" fill="#000" d="M246 399h2v1h-2zM231 400h15v1h-15z"/><path class="c" fill="#fff" d="M239 402h1v24h-1z"/><path class="c" fill="#00FFFF" d="M235 430h10v1h-10zM247 430h10v1h-10zM259 430h8v1h-8zM233 433h5v1h-5zM240 433h10v1h-10zM252 433h10v1h-10zM264 433h3v1h-3zM233 427h1v1h-1zM234 427h1v1h-1zM232 428h1v1h-1zM234 428h1v1h-1zM235 428h1v1h-1zM232 429h1v1h-1zM235 429h1v1h-1zM235 430h1v1h-1zM236 430h1v1h-1zM236 431h1v1h-1zM236 432h1v1h-1zM237 432h1v1h-1zM237 433h1v1h-1zM237 434h1v1h-1zM238 434h1v1h-1zM241 434h1v1h-1zM242 434h1v1h-1zM238 435h1v1h-1zM240 435h1v1h-1zM238 436h1v1h-1zM239 436h1v1h-1zM245 427h1v1h-1zM246 427h1v1h-1zM244 428h1v1h-1zM246 428h1v1h-1zM247 428h1v1h-1zM244 429h1v1h-1zM247 429h1v1h-1zM247 430h1v1h-1zM248 430h1v1h-1zM248 431h1v1h-1zM248 432h1v1h-1zM249 432h1v1h-1zM249 433h1v1h-1zM249 434h1v1h-1zM250 434h1v1h-1zM253 434h1v1h-1zM254 434h1v1h-1zM250 435h1v1h-1zM252 435h1v1h-1zM250 436h1v1h-1zM251 436h1v1h-1zM257 427h1v1h-1zM258 427h1v1h-1zM256 428h1v1h-1zM258 428h1v1h-1zM259 428h1v1h-1zM256 429h1v1h-1zM259 429h1v1h-1zM259 430h1v1h-1zM260 430h1v1h-1zM260 431h1v1h-1zM260 432h1v1h-1zM261 432h1v1h-1zM261 433h1v1h-1zM261 434h1v1h-1zM262 434h1v1h-1zM265 434h1v1h-1zM266 434h1v1h-1zM262 435h1v1h-1zM264 435h1v1h-1zM262 436h1v1h-1zM263 436h1v1h-1zM267 427h1v9h-1z"/><path class="c" fill="#000" d="M231 429h3v1h-3zM230 430h1v1h-1z"/><path class="c" fill="#00FFFF" d="M231 430h3v1h-3z"/><path class="c" fill="#000" d="M234 430h1v1h-1zM229 431h1v1h-1z"/><path class="c" fill="#00FFFF" d="M230 431h5v1h-5z"/><path class="c" fill="#000" d="M235 431h1v1h-1zM229 432h1v1h-1z"/><path class="c" fill="#00FFFF" d="M230 432h5v1h-5z"/><path class="c" fill="#000" d="M235 432h1v1h-1zM229 433h1v1h-1z"/><path class="c" fill="#00FFFF" d="M230 433h5v1h-5z"/><path class="c" fill="#000" d="M235 433h1v1h-1zM230 434h1v1h-1z"/><path class="c" fill="#00FFFF" d="M231 434h3v1h-3z"/><path class="c" fill="#000" d="M234 434h1v1h-1zM231 435h3v1h-3zM236 426h7v5h-7z"/><path class="c" fill="#00FFFF" d="M237 427h5v3h-5z"/><path class="c" fill="#fff" d="M265 438h1v25h-1z"/><path class="c" fill="#000" d="M273 388h27v1h-27zM273 389h1v1h-1z"/><path class="c" fill="#00FFFF" d="M274 389h25v1h-25z"/><path class="c" fill="#000" d="M299 389h2v1h-2zM273 390h28v1h-28zM273 391h1v1h-1z"/><path class="c" fill="#00FFFF" d="M274 391h1v1h-1z"/><path class="c" fill="#000" d="M275 391h2v1h-2z"/><path class="c" fill="#00FFFF" d="M277 391h1v1h-1z"/><path class="c" fill="#000" d="M278 391h1v1h-1z"/><path class="c" fill="#00FFFF" d="M279 391h15v1h-15z"/><path class="c" fill="#000" d="M294 391h1v1h-1z"/><path class="c" fill="#00FFFF" d="M295 391h1v1h-1z"/><path class="c" fill="#000" d="M296 391h2v1h-2z"/><path class="c" fill="#00FFFF" d="M298 391h1v1h-1z"/><path class="c" fill="#000" d="M299 391h1v1h-1zM273 392h1v1h-1z"/><path class="c" fill="#00FFFF" d="M274 392h2v1h-2z"/><path class="c" fill="#000" d="M276 392h3v1h-3z"/><path class="c" fill="#00FFFF" d="M279 392h15v1h-15z"/><path class="c" fill="#000" d="M294 392h3v1h-3z"/><path class="c" fill="#00FFFF" d="M297 392h2v1h-2z"/><path class="c" fill="#000" d="M299 392h1v1h-1zM273 393h1v1h-1z"/><path class="c" fill="#00FFFF" d="M274 393h3v1h-3z"/><path class="c" fill="#000" d="M277 393h3v1h-3z"/><path class="c" fill="#00FFFF" d="M280 393h13v1h-13z"/><path class="c" fill="#000" d="M293 393h3v1h-3z"/><path class="c" fill="#00FFFF" d="M296 393h3v1h-3z"/><path class="c" fill="#000" d="M299 393h1v1h-1zM273 394h1v1h-1z"/><path class="c" fill="#00FFFF" d="M274 394h3v1h-3z"/><path class="c" fill="#000" d="M277 394h3v1h-3z"/><path class="c" fill="#00FFFF" d="M280 394h13v1h-13z"/><path class="c" fill="#000" d="M293 394h3v1h-3z"/><path class="c" fill="#00FFFF" d="M296 394h3v1h-3z"/><path class="c" fill="#000" d="M299 394h1v1h-1zM273 395h27v1h-27zM273 396h2v1h-2z"/><path class="c" fill="#00FFFF" d="M275 396h23v1h-23z"/><path class="c" fill="#000" d="M298 396h2v1h-2zM275 397h1v1h-1z"/><path class="c" fill="#00FFFF" d="M276 397h20v1h-20z"/><path class="c" fill="#000" d="M296 397h2v1h-2zM276 398h2v1h-2z"/><path class="c" fill="#00FFFF" d="M278 398h18v1h-18z"/><path class="c" fill="#000" d="M296 398h2v1h-2zM278 399h2v1h-2z"/><path class="c" fill="#00FFFF" d="M280 399h14v1h-14z"/><path class="c" fill="#000" d="M294 399h2v1h-2zM279 400h15v1h-15z"/><path class="c" fill="#fff" d="M287 402h1v24h-1z"/><path class="c" fill="#00FFFF" d="M283 430h10v1h-10zM295 430h10v1h-10zM307 430h8v1h-8zM281 433h5v1h-5zM288 433h10v1h-10zM300 433h10v1h-10zM312 433h3v1h-3zM281 427h1v1h-1zM282 427h1v1h-1zM280 428h1v1h-1zM282 428h1v1h-1zM283 428h1v1h-1zM280 429h1v1h-1zM283 429h1v1h-1zM283 430h1v1h-1zM284 430h1v1h-1zM284 431h1v1h-1zM284 432h1v1h-1zM285 432h1v1h-1zM285 433h1v1h-1zM285 434h1v1h-1zM286 434h1v1h-1zM289 434h1v1h-1zM290 434h1v1h-1zM286 435h1v1h-1zM288 435h1v1h-1zM286 436h1v1h-1zM287 436h1v1h-1zM293 427h1v1h-1zM294 427h1v1h-1zM292 428h1v1h-1zM294 428h1v1h-1zM295 428h1v1h-1zM292 429h1v1h-1zM295 429h1v1h-1zM295 430h1v1h-1zM296 430h1v1h-1zM296 431h1v1h-1zM296 432h1v1h-1zM297 432h1v1h-1zM297 433h1v1h-1zM297 434h1v1h-1zM298 434h1v1h-1zM301 434h1v1h-1zM302 434h1v1h-1zM298 435h1v1h-1zM300 435h1v1h-1zM298 436h1v1h-1zM299 436h1v1h-1zM305 427h1v1h-1zM306 427h1v1h-1zM304 428h1v1h-1zM306 428h1v1h-1zM307 428h1v1h-1zM304 429h1v1h-1zM307 429h1v1h-1zM307 430h1v1h-1zM308 430h1v1h-1zM308 431h1v1h-1zM308 432h1v1h-1zM309 432h1v1h-1zM309 433h1v1h-1zM309 434h1v1h-1zM310 434h1v1h-1zM313 434h1v1h-1zM314 434h1v1h-1zM310 435h1v1h-1zM312 435h1v1h-1zM310 436h1v1h-1zM311 436h1v1h-1zM315 427h1v9h-1z"/><path class="c" fill="#000" d="M279 429h3v1h-3zM278 430h1v1h-1z"/><path class="c" fill="#00FFFF" d="M279 430h3v1h-3z"/><path class="c" fill="#000" d="M282 430h1v1h-1zM277 431h1v1h-1z"/><path class="c" fill="#00FFFF" d="M278 431h5v1h-5z"/><path class="c" fill="#000" d="M283 431h1v1h-1zM277 432h1v1h-1z"/><path class="c" fill="#00FFFF" d="M278 432h5v1h-5z"/><path class="c" fill="#000" d="M283 432h1v1h-1zM277 433h1v1h-1z"/><path class="c" fill="#00FFFF" d="M278 433h5v1h-5z"/><path class="c" fill="#000" d="M283 433h1v1h-1zM278 434h1v1h-1z"/><path class="c" fill="#00FFFF" d="M279 434h3v1h-3z"/><path class="c" fill="#000" d="M282 434h1v1h-1zM279 435h3v1h-3zM284 426h7v5h-7z"/><path class="c" fill="#00FFFF" d="M285 427h5v3h-5z"/><path class="c" fill="#fff" d="M313 438h1v25h-1z"/><path class="c" fill="#000" d="M317 388h27v1h-27zM317 389h1v1h-1z"/><path class="c" fill="#00FFFF" d="M318 389h25v1h-25z"/><path class="c" fill="#000" d="M343 389h2v1h-2zM317 390h28v1h-28zM317 391h1v1h-1z"/><path class="c" fill="#00FFFF" d="M318 391h1v1h-1z"/><path class="c" fill="#000" d="M319 391h2v1h-2z"/><path class="c" fill="#00FFFF" d="M321 391h1v1h-1z"/><path class="c" fill="#000" d="M322 391h1v1h-1z"/><path class="c" fill="#00FFFF" d="M323 391h15v1h-15z"/><path class="c" fill="#000" d="M338 391h1v1h-1z"/><path class="c" fill="#00FFFF" d="M339 391h1v1h-1z"/><path class="c" fill="#000" d="M340 391h2v1h-2z"/><path class="c" fill="#00FFFF" d="M342 391h1v1h-1z"/><path class="c" fill="#000" d="M343 391h1v1h-1zM317 392h1v1h-1z"/><path class="c" fill="#00FFFF" d="M318 392h2v1h-2z"/><path class="c" fill="#000" d="M320 392h3v1h-3z"/><path class="c" fill="#00FFFF" d="M323 392h15v1h-15z"/><path class="c" fill="#000" d="M338 392h3v1h-3z"/><path class="c" fill="#00FFFF" d="M341 392h2v1h-2z"/><path class="c" fill="#000" d="M343 392h1v1h-1zM317 393h1v1h-1z"/><path class="c" fill="#00FFFF" d="M318 393h3v1h-3z"/><path class="c" fill="#000" d="M321 393h3v1h-3z"/><path class="c" fill="#00FFFF" d="M324 393h13v1h-13z"/><path class="c" fill="#000" d="M337 393h3v1h-3z"/><path class="c" fill="#00FFFF" d="M340 393h3v1h-3z"/><path class="c" fill="#000" d="M343 393h1v1h-1zM317 394h1v1h-1z"/><path class="c" fill="#00FFFF" d="M318 394h3v1h-3z"/><path class="c" fill="#000" d="M321 394h3v1h-3z"/><path class="c" fill="#00FFFF" d="M324 394h13v1h-13z"/><path class="c" fill="#000" d="M337 394h3v1h-3z"/><path class="c" fill="#00FFFF" d="M340 394h3v1h-3z"/><path class="c" fill="#000" d="M343 394h1v1h-1zM317 395h27v1h-27zM317 396h2v1h-2z"/><path class="c" fill="#00FFFF" d="M319 396h23v1h-23z"/><path class="c" fill="#000" d="M342 396h2v1h-2zM319 397h1v1h-1z"/><path class="c" fill="#00FFFF" d="M320 397h20v1h-20z"/><path class="c" fill="#000" d="M340 397h2v1h-2zM320 398h2v1h-2z"/><path class="c" fill="#00FFFF" d="M322 398h18v1h-18z"/><path class="c" fill="#000" d="M340 398h2v1h-2zM322 399h2v1h-2z"/><path class="c" fill="#00FFFF" d="M324 399h14v1h-14z"/><path class="c" fill="#000" d="M338 399h2v1h-2zM323 400h15v1h-15z"/><path class="c" fill="#fff" d="M331 402h1v24h-1z"/><path class="c" fill="#00FFFF" d="M327 430h10v1h-10zM339 430h10v1h-10zM351 430h8v1h-8zM325 433h5v1h-5zM332 433h10v1h-10zM344 433h10v1h-10zM356 433h3v1h-3zM325 427h1v1h-1zM326 427h1v1h-1zM324 428h1v1h-1zM326 428h1v1h-1zM327 428h1v1h-1zM324 429h1v1h-1zM327 429h1v1h-1zM327 430h1v1h-1zM328 430h1v1h-1zM328 431h1v1h-1zM328 432h1v1h-1zM329 432h1v1h-1zM329 433h1v1h-1zM329 434h1v1h-1zM330 434h1v1h-1zM333 434h1v1h-1zM334 434h1v1h-1zM330 435h1v1h-1zM332 435h1v1h-1zM330 436h1v1h-1zM331 436h1v1h-1zM337 427h1v1h-1zM338 427h1v1h-1zM336 428h1v1h-1zM338 428h1v1h-1zM339 428h1v1h-1zM336 429h1v1h-1zM339 429h1v1h-1zM339 430h1v1h-1zM340 430h1v1h-1zM340 431h1v1h-1zM340 432h1v1h-1zM341 432h1v1h-1zM341 433h1v1h-1zM341 434h1v1h-1zM342 434h1v1h-1zM345 434h1v1h-1zM346 434h1v1h-1zM342 435h1v1h-1zM344 435h1v1h-1zM342 436h1v1h-1zM343 436h1v1h-1zM349 427h1v1h-1zM350 427h1v1h-1zM348 428h1v1h-1zM350 428h1v1h-1zM351 428h1v1h-1zM348 429h1v1h-1zM351 429h1v1h-1zM351 430h1v1h-1zM352 430h1v1h-1zM352 431h1v1h-1zM352 432h1v1h-1zM353 432h1v1h-1zM353 433h1v1h-1zM353 434h1v1h-1zM354 434h1v1h-1zM357 434h1v1h-1zM358 434h1v1h-1zM354 435h1v1h-1zM356 435h1v1h-1zM354 436h1v1h-1zM355 436h1v1h-1zM359 427h1v9h-1z"/><path class="c" fill="#000" d="M323 429h3v1h-3zM322 430h1v1h-1z"/><path class="c" fill="#00FFFF" d="M323 430h3v1h-3z"/><path class="c" fill="#000" d="M326 430h1v1h-1zM321 431h1v1h-1z"/><path class="c" fill="#00FFFF" d="M322 431h5v1h-5z"/><path class="c" fill="#000" d="M327 431h1v1h-1zM321 432h1v1h-1z"/><path class="c" fill="#00FFFF" d="M322 432h5v1h-5z"/><path class="c" fill="#000" d="M327 432h1v1h-1zM321 433h1v1h-1z"/><path class="c" fill="#00FFFF" d="M322 433h5v1h-5z"/><path class="c" fill="#000" d="M327 433h1v1h-1zM322 434h1v1h-1z"/><path class="c" fill="#00FFFF" d="M323 434h3v1h-3z"/><path class="c" fill="#000" d="M326 434h1v1h-1zM323 435h3v1h-3zM328 426h7v5h-7z"/><path class="c" fill="#00FFFF" d="M329 427h5v3h-5z"/><path class="c" fill="#fff" d="M357 438h1v25h-1z"/><path class="c" fill="#000" d="M365 388h27v1h-27zM365 389h1v1h-1z"/><path class="c" fill="#00FFFF" d="M366 389h25v1h-25z"/><path class="c" fill="#000" d="M391 389h2v1h-2zM365 390h28v1h-28zM365 391h1v1h-1z"/><path class="c" fill="#00FFFF" d="M366 391h1v1h-1z"/><path class="c" fill="#000" d="M367 391h2v1h-2z"/><path class="c" fill="#00FFFF" d="M369 391h1v1h-1z"/><path class="c" fill="#000" d="M370 391h1v1h-1z"/><path class="c" fill="#00FFFF" d="M371 391h15v1h-15z"/><path class="c" fill="#000" d="M386 391h1v1h-1z"/><path class="c" fill="#00FFFF" d="M387 391h1v1h-1z"/><path class="c" fill="#000" d="M388 391h2v1h-2z"/><path class="c" fill="#00FFFF" d="M390 391h1v1h-1z"/><path class="c" fill="#000" d="M391 391h1v1h-1zM365 392h1v1h-1z"/><path class="c" fill="#00FFFF" d="M366 392h2v1h-2z"/><path class="c" fill="#000" d="M368 392h3v1h-3z"/><path class="c" fill="#00FFFF" d="M371 392h15v1h-15z"/><path class="c" fill="#000" d="M386 392h3v1h-3z"/><path class="c" fill="#00FFFF" d="M389 392h2v1h-2z"/><path class="c" fill="#000" d="M391 392h1v1h-1zM365 393h1v1h-1z"/><path class="c" fill="#00FFFF" d="M366 393h3v1h-3z"/><path class="c" fill="#000" d="M369 393h3v1h-3z"/><path class="c" fill="#00FFFF" d="M372 393h13v1h-13z"/><path class="c" fill="#000" d="M385 393h3v1h-3z"/><path class="c" fill="#00FFFF" d="M388 393h3v1h-3z"/><path class="c" fill="#000" d="M391 393h1v1h-1zM365 394h1v1h-1z"/><path class="c" fill="#00FFFF" d="M366 394h3v1h-3z"/><path class="c" fill="#000" d="M369 394h3v1h-3z"/><path class="c" fill="#00FFFF" d="M372 394h13v1h-13z"/><path class="c" fill="#000" d="M385 394h3v1h-3z"/><path class="c" fill="#00FFFF" d="M388 394h3v1h-3z"/><path class="c" fill="#000" d="M391 394h1v1h-1zM365 395h27v1h-27zM365 396h2v1h-2z"/><path class="c" fill="#00FFFF" d="M367 396h23v1h-23z"/><path class="c" fill="#000" d="M390 396h2v1h-2zM367 397h1v1h-1z"/><path class="c" fill="#00FFFF" d="M368 397h20v1h-20z"/><path class="c" fill="#000" d="M388 397h2v1h-2zM368 398h2v1h-2z"/><path class="c" fill="#00FFFF" d="M370 398h18v1h-18z"/><path class="c" fill="#000" d="M388 398h2v1h-2zM370 399h2v1h-2z"/><path class="c" fill="#00FFFF" d="M372 399h14v1h-14z"/><path class="c" fill="#000" d="M386 399h2v1h-2zM371 400h15v1h-15z"/><path class="c" fill="#fff" d="M379 402h1v24h-1z"/><path class="c" fill="#00FFFF" d="M375 430h10v1h-10zM387 430h10v1h-10zM399 430h8v1h-8zM373 433h5v1h-5zM380 433h10v1h-10zM392 433h10v1h-10zM404 433h3v1h-3zM373 427h1v1h-1zM374 427h1v1h-1zM372 428h1v1h-1zM374 428h1v1h-1zM375 428h1v1h-1zM372 429h1v1h-1zM375 429h1v1h-1zM375 430h1v1h-1zM376 430h1v1h-1zM376 431h1v1h-1zM376 432h1v1h-1zM377 432h1v1h-1zM377 433h1v1h-1zM377 434h1v1h-1zM378 434h1v1h-1zM381 434h1v1h-1zM382 434h1v1h-1zM378 435h1v1h-1zM380 435h1v1h-1zM378 436h1v1h-1zM379 436h1v1h-1zM385 427h1v1h-1zM386 427h1v1h-1zM384 428h1v1h-1zM386 428h1v1h-1zM387 428h1v1h-1zM384 429h1v1h-1zM387 429h1v1h-1zM387 430h1v1h-1zM388 430h1v1h-1zM388 431h1v1h-1zM388 432h1v1h-1zM389 432h1v1h-1zM389 433h1v1h-1zM389 434h1v1h-1zM390 434h1v1h-1zM393 434h1v1h-1zM394 434h1v1h-1zM390 435h1v1h-1zM392 435h1v1h-1zM390 436h1v1h-1zM391 436h1v1h-1zM397 427h1v1h-1zM398 427h1v1h-1zM396 428h1v1h-1zM398 428h1v1h-1zM399 428h1v1h-1zM396 429h1v1h-1zM399 429h1v1h-1zM399 430h1v1h-1zM400 430h1v1h-1zM400 431h1v1h-1zM400 432h1v1h-1zM401 432h1v1h-1zM401 433h1v1h-1zM401 434h1v1h-1zM402 434h1v1h-1zM405 434h1v1h-1zM406 434h1v1h-1zM402 435h1v1h-1zM404 435h1v1h-1zM402 436h1v1h-1zM403 436h1v1h-1zM407 427h1v9h-1z"/><path class="c" fill="#000" d="M371 429h3v1h-3zM370 430h1v1h-1z"/><path class="c" fill="#00FFFF" d="M371 430h3v1h-3z"/><path class="c" fill="#000" d="M374 430h1v1h-1zM369 431h1v1h-1z"/><path class="c" fill="#00FFFF" d="M370 431h5v1h-5z"/><path class="c" fill="#000" d="M375 431h1v1h-1zM369 432h1v1h-1z"/><path class="c" fill="#00FFFF" d="M370 432h5v1h-5z"/><path class="c" fill="#000" d="M375 432h1v1h-1zM369 433h1v1h-1z"/><path class="c" fill="#00FFFF" d="M370 433h5v1h-5z"/><path class="c" fill="#000" d="M375 433h1v1h-1zM370 434h1v1h-1z"/><path class="c" fill="#00FFFF" d="M371 434h3v1h-3z"/><path class="c" fill="#000" d="M374 434h1v1h-1zM371 435h3v1h-3zM376 426h7v5h-7z"/><path class="c" fill="#00FFFF" d="M377 427h5v3h-5z"/><path class="c" fill="#fff" d="M405 438h1v25h-1z"/><path class="c" fill="#000" d="M413 388h27v1h-27zM413 389h1v1h-1z"/><path class="c" fill="#00FFFF" d="M414 389h25v1h-25z"/><path class="c" fill="#000" d="M439 389h2v1h-2zM413 390h28v1h-28zM413 391h1v1h-1z"/><path class="c" fill="#00FFFF" d="M414 391h1v1h-1z"/><path class="c" fill="#000" d="M415 391h2v1h-2z"/><path class="c" fill="#00FFFF" d="M417 391h1v1h-1z"/><path class="c" fill="#000" d="M418 391h1v1h-1z"/><path class="c" fill="#00FFFF" d="M419 391h15v1h-15z"/><path class="c" fill="#000" d="M434 391h1v1h-1z"/><path class="c" fill="#00FFFF" d="M435 391h1v1h-1z"/><path class="c" fill="#000" d="M436 391h2v1h-2z"/><path class="c" fill="#00FFFF" d="M438 391h1v1h-1z"/><path class="c" fill="#000" d="M439 391h1v1h-1zM413 392h1v1h-1z"/><path class="c" fill="#00FFFF" d="M414 392h2v1h-2z"/><path class="c" fill="#000" d="M416 392h3v1h-3z"/><path class="c" fill="#00FFFF" d="M419 392h15v1h-15z"/><path class="c" fill="#000" d="M434 392h3v1h-3z"/><path class="c" fill="#00FFFF" d="M437 392h2v1h-2z"/><path class="c" fill="#000" d="M439 392h1v1h-1zM413 393h1v1h-1z"/><path class="c" fill="#00FFFF" d="M414 393h3v1h-3z"/><path class="c" fill="#000" d="M417 393h3v1h-3z"/><path class="c" fill="#00FFFF" d="M420 393h13v1h-13z"/><path class="c" fill="#000" d="M433 393h3v1h-3z"/><path class="c" fill="#00FFFF" d="M436 393h3v1h-3z"/><path class="c" fill="#000" d="M439 393h1v1h-1zM413 394h1v1h-1z"/><path class="c" fill="#00FFFF" d="M414 394h3v1h-3z"/><path class="c" fill="#000" d="M417 394h3v1h-3z"/><path class="c" fill="#00FFFF" d="M420 394h13v1h-13z"/><path class="c" fill="#000" d="M433 394h3v1h-3z"/><path class="c" fill="#00FFFF" d="M436 394h3v1h-3z"/><path class="c" fill="#000" d="M439 394h1v1h-1zM413 395h27v1h-27zM413 396h2v1h-2z"/><path class="c" fill="#00FFFF" d="M415 396h23v1h-23z"/><path class="c" fill="#000" d="M438 396h2v1h-2zM415 397h1v1h-1z"/><path class="c" fill="#00FFFF" d="M416 397h20v1h-20z"/><path class="c" fill="#000" d="M436 397h2v1h-2zM416 398h2v1h-2z"/><path class="c" fill="#00FFFF" d="M418 398h18v1h-18z"/><path class="c" fill="#000" d="M436 398h2v1h-2zM418 399h2v1h-2z"/><path class="c" fill="#00FFFF" d="M420 399h14v1h-14z"/><path class="c" fill="#000" d="M434 399h2v1h-2zM419 400h15v1h-15z"/><path class="c" fill="#fff" d="M427 402h1v24h-1z"/><path class="c" fill="#00FFFF" d="M423 430h10v1h-10zM435 430h10v1h-10zM447 430h8v1h-8zM421 433h5v1h-5zM428 433h10v1h-10zM440 433h10v1h-10zM452 433h3v1h-3zM421 427h1v1h-1zM422 427h1v1h-1zM420 428h1v1h-1zM422 428h1v1h-1zM423 428h1v1h-1zM420 429h1v1h-1zM423 429h1v1h-1zM423 430h1v1h-1zM424 430h1v1h-1zM424 431h1v1h-1zM424 432h1v1h-1zM425 432h1v1h-1zM425 433h1v1h-1zM425 434h1v1h-1zM426 434h1v1h-1zM429 434h1v1h-1zM430 434h1v1h-1zM426 435h1v1h-1zM428 435h1v1h-1zM426 436h1v1h-1zM427 436h1v1h-1zM433 427h1v1h-1zM434 427h1v1h-1zM432 428h1v1h-1zM434 428h1v1h-1zM435 428h1v1h-1zM432 429h1v1h-1zM435 429h1v1h-1zM435 430h1v1h-1zM436 430h1v1h-1zM436 431h1v1h-1zM436 432h1v1h-1zM437 432h1v1h-1zM437 433h1v1h-1zM437 434h1v1h-1zM438 434h1v1h-1zM441 434h1v1h-1zM442 434h1v1h-1zM438 435h1v1h-1zM440 435h1v1h-1zM438 436h1v1h-1zM439 436h1v1h-1zM445 427h1v1h-1zM446 427h1v1h-1zM444 428h1v1h-1zM446 428h1v1h-1zM447 428h1v1h-1zM444 429h1v1h-1zM447 429h1v1h-1zM447 430h1v1h-1zM448 430h1v1h-1zM448 431h1v1h-1zM448 432h1v1h-1zM449 432h1v1h-1zM449 433h1v1h-1zM449 434h1v1h-1zM450 434h1v1h-1zM453 434h1v1h-1zM454 434h1v1h-1zM450 435h1v1h-1zM452 435h1v1h-1zM450 436h1v1h-1zM451 436h1v1h-1zM455 427h1v9h-1z"/><path class="c" fill="#000" d="M419 429h3v1h-3zM418 430h1v1h-1z"/><path class="c" fill="#00FFFF" d="M419 430h3v1h-3z"/><path class="c" fill="#000" d="M422 430h1v1h-1zM417 431h1v1h-1z"/><path class="c" fill="#00FFFF" d="M418 431h5v1h-5z"/><path class="c" fill="#000" d="M423 431h1v1h-1zM417 432h1v1h-1z"/><path class="c" fill="#00FFFF" d="M418 432h5v1h-5z"/><path class="c" fill="#000" d="M423 432h1v1h-1zM417 433h1v1h-1z"/><path class="c" fill="#00FFFF" d="M418 433h5v1h-5z"/><path class="c" fill="#000" d="M423 433h1v1h-1zM418 434h1v1h-1z"/><path class="c" fill="#00FFFF" d="M419 434h3v1h-3z"/><path class="c" fill="#000" d="M422 434h1v1h-1zM419 435h3v1h-3zM424 426h7v5h-7z"/><path class="c" fill="#00FFFF" d="M425 427h5v3h-5z"/><path class="c" fill="#fff" d="M453 438h1v25h-1z"/><path class="c" fill="#000" d="M457 388h27v1h-27zM457 389h1v1h-1z"/><path class="c" fill="#00FFFF" d="M458 389h25v1h-25z"/><path class="c" fill="#000" d="M483 389h2v1h-2zM457 390h28v1h-28zM457 391h1v1h-1z"/><path class="c" fill="#00FFFF" d="M458 391h1v1h-1z"/><path class="c" fill="#000" d="M459 391h2v1h-2z"/><path class="c" fill="#00FFFF" d="M461 391h1v1h-1z"/><path class="c" fill="#000" d="M462 391h1v1h-1z"/><path class="c" fill="#00FFFF" d="M463 391h15v1h-15z"/><path class="c" fill="#000" d="M478 391h1v1h-1z"/><path class="c" fill="#00FFFF" d="M479 391h1v1h-1z"/><path class="c" fill="#000" d="M480 391h2v1h-2z"/><path class="c" fill="#00FFFF" d="M482 391h1v1h-1z"/><path class="c" fill="#000" d="M483 391h1v1h-1zM457 392h1v1h-1z"/><path class="c" fill="#00FFFF" d="M458 392h2v1h-2z"/><path class="c" fill="#000" d="M460 392h3v1h-3z"/><path class="c" fill="#00FFFF" d="M463 392h15v1h-15z"/><path class="c" fill="#000" d="M478 392h3v1h-3z"/><path class="c" fill="#00FFFF" d="M481 392h2v1h-2z"/><path class="c" fill="#000" d="M483 392h1v1h-1zM457 393h1v1h-1z"/><path class="c" fill="#00FFFF" d="M458 393h3v1h-3z"/><path class="c" fill="#000" d="M461 393h3v1h-3z"/><path class="c" fill="#00FFFF" d="M464 393h13v1h-13z"/><path class="c" fill="#000" d="M477 393h3v1h-3z"/><path class="c" fill="#00FFFF" d="M480 393h3v1h-3z"/><path class="c" fill="#000" d="M483 393h1v1h-1zM457 394h1v1h-1z"/><path class="c" fill="#00FFFF" d="M458 394h3v1h-3z"/><path class="c" fill="#000" d="M461 394h3v1h-3z"/><path class="c" fill="#00FFFF" d="M464 394h13v1h-13z"/><path class="c" fill="#000" d="M477 394h3v1h-3z"/><path class="c" fill="#00FFFF" d="M480 394h3v1h-3z"/><path class="c" fill="#000" d="M483 394h1v1h-1zM457 395h27v1h-27zM457 396h2v1h-2z"/><path class="c" fill="#00FFFF" d="M459 396h23v1h-23z"/><path class="c" fill="#000" d="M482 396h2v1h-2zM459 397h1v1h-1z"/><path class="c" fill="#00FFFF" d="M460 397h20v1h-20z"/><path class="c" fill="#000" d="M480 397h2v1h-2zM460 398h2v1h-2z"/><path class="c" fill="#00FFFF" d="M462 398h18v1h-18z"/><path class="c" fill="#000" d="M480 398h2v1h-2zM462 399h2v1h-2z"/><path class="c" fill="#00FFFF" d="M464 399h14v1h-14z"/><path class="c" fill="#000" d="M478 399h2v1h-2zM463 400h15v1h-15z"/><path class="c" fill="#fff" d="M471 402h1v24h-1z"/><path class="c" fill="#00FFFF" d="M467 430h10v1h-10zM479 430h10v1h-10zM491 430h8v1h-8zM465 433h5v1h-5zM472 433h10v1h-10zM484 433h10v1h-10zM496 433h3v1h-3zM465 427h1v1h-1zM466 427h1v1h-1zM464 428h1v1h-1zM466 428h1v1h-1zM467 428h1v1h-1zM464 429h1v1h-1zM467 429h1v1h-1zM467 430h1v1h-1zM468 430h1v1h-1zM468 431h1v1h-1zM468 432h1v1h-1zM469 432h1v1h-1zM469 433h1v1h-1zM469 434h1v1h-1zM470 434h1v1h-1zM473 434h1v1h-1zM474 434h1v1h-1zM470 435h1v1h-1zM472 435h1v1h-1zM470 436h1v1h-1zM471 436h1v1h-1zM477 427h1v1h-1zM478 427h1v1h-1zM476 428h1v1h-1zM478 428h1v1h-1zM479 428h1v1h-1zM476 429h1v1h-1zM479 429h1v1h-1zM479 430h1v1h-1zM480 430h1v1h-1zM480 431h1v1h-1zM480 432h1v1h-1zM481 432h1v1h-1zM481 433h1v1h-1zM481 434h1v1h-1zM482 434h1v1h-1zM485 434h1v1h-1zM486 434h1v1h-1zM482 435h1v1h-1zM484 435h1v1h-1zM482 436h1v1h-1zM483 436h1v1h-1zM489 427h1v1h-1zM490 427h1v1h-1zM488 428h1v1h-1zM490 428h1v1h-1zM491 428h1v1h-1zM488 429h1v1h-1zM491 429h1v1h-1zM491 430h1v1h-1zM492 430h1v1h-1zM492 431h1v1h-1zM492 432h1v1h-1zM493 432h1v1h-1zM493 433h1v1h-1zM493 434h1v1h-1zM494 434h1v1h-1zM497 434h1v1h-1zM498 434h1v1h-1zM494 435h1v1h-1zM496 435h1v1h-1zM494 436h1v1h-1zM495 436h1v1h-1zM499 427h1v9h-1z"/><path class="c" fill="#000" d="M463 429h3v1h-3zM462 430h1v1h-1z"/><path class="c" fill="#00FFFF" d="M463 430h3v1h-3z"/><path class="c" fill="#000" d="M466 430h1v1h-1zM461 431h1v1h-1z"/><path class="c" fill="#00FFFF" d="M462 431h5v1h-5z"/><path class="c" fill="#000" d="M467 431h1v1h-1zM461 432h1v1h-1z"/><path class="c" fill="#00FFFF" d="M462 432h5v1h-5z"/><path class="c" fill="#000" d="M467 432h1v1h-1zM461 433h1v1h-1z"/><path class="c" fill="#00FFFF" d="M462 433h5v1h-5z"/><path class="c" fill="#000" d="M467 433h1v1h-1zM462 434h1v1h-1z"/><path class="c" fill="#00FFFF" d="M463 434h3v1h-3z"/><path class="c" fill="#000" d="M466 434h1v1h-1zM463 435h3v1h-3zM468 426h7v5h-7z"/><path class="c" fill="#00FFFF" d="M469 427h5v3h-5z"/><path class="c" fill="#fff" d="M497 438h1v25h-1z"/><polygon points="80,532 85,526 173,526 168,532" fill="#3F9898"/><path class="c" fill="#4DC4C4" d="M80 532h88v80h-88z"/><path class="c" fill="#5BB7B7" d="M96 532h9v80h-9zM140 532h9v80h-9z"/><polygon points="168,532 173,526 173,608 168,613" fill="#5BDFDF"/><polygon points="80,612 87,616 117,616 124.0,612.5 131,616 161,616 168,612" fill="#48AAAA"/><path class="c" fill="#FFFFFF" d="M82 597h13v13h-13z"/><path class="c" fill="#ACA899" d="M82 597h12v1h-12zM82 597h1v12h-1z"/><path class="c" fill="#716F64" d="M83 598h10v1h-10zM83 598h1v10h-1z"/><path class="c" fill="#F1EFE2" d="M83 608h11v1h-11zM93 598h1v11h-1z"/><path class="c" fill="#FFFFFF" d="M126 597h13v13h-13z"/><path class="c" fill="#ACA899" d="M126 597h12v1h-12zM126 597h1v12h-1z"/><path class="c" fill="#716F64" d="M127 598h10v1h-10zM127 598h1v10h-1z"/><path class="c" fill="#F1EFE2" d="M127 608h11v1h-11zM137 598h1v11h-1z"/><polygon points="173,532 178,526 266,526 261,532" fill="#3F9898"/><path class="c" fill="#4DC4C4" d="M173 532h88v80h-88z"/><path class="c" fill="#5BB7B7" d="M189 532h9v80h-9zM233 532h9v80h-9z"/><polygon points="261,532 266,526 266,608 261,613" fill="#5BDFDF"/><polygon points="173,608.5 177,612 173,612" fill="#008080"/><polygon points="177,612 180,616 210,616 217.0,612.5 224,616 254,616 261,612" fill="#48AAAA"/><path class="c" fill="#FFFFFF" d="M174 597h13v13h-13z"/><path class="c" fill="#ACA899" d="M174 597h12v1h-12zM174 597h1v12h-1z"/><path class="c" fill="#716F64" d="M175 598h10v1h-10zM175 598h1v10h-1z"/><path class="c" fill="#F1EFE2" d="M175 608h11v1h-11zM185 598h1v11h-1z"/><path class="c" fill="#FFFFFF" d="M218 597h13v13h-13z"/><path class="c" fill="#ACA899" d="M218 597h12v1h-12zM218 597h1v12h-1z"/><path class="c" fill="#716F64" d="M219 598h10v1h-10zM219 598h1v10h-1z"/><path class="c" fill="#F1EFE2" d="M219 608h11v1h-11zM229 598h1v11h-1z"/><polygon points="266,532 271,526 358,526 353,532" fill="#3F9898"/><path class="c" fill="#4DC4C4" d="M266 532h87v80h-87z"/><path class="c" fill="#5BB7B7" d="M281 532h9v80h-9zM325 532h9v80h-9z"/><polygon points="353,532 358,526 358,608 353,613" fill="#5BDFDF"/><polygon points="266,608.5 270,612 266,612" fill="#008080"/><polygon points="270,612 272,616 302,616 309.0,612.5 316,616 346,616 353,612" fill="#48AAAA"/><path class="c" fill="#FFFFFF" d="M266 597h13v13h-13z"/><path class="c" fill="#ACA899" d="M266 597h12v1h-12zM266 597h1v12h-1z"/><path class="c" fill="#716F64" d="M267 598h10v1h-10zM267 598h1v10h-1z"/><path class="c" fill="#F1EFE2" d="M267 608h11v1h-11zM277 598h1v11h-1z"/><path class="c" fill="#FFFFFF" d="M310 597h13v13h-13z"/><path class="c" fill="#ACA899" d="M310 597h12v1h-12zM310 597h1v12h-1z"/><path class="c" fill="#716F64" d="M311 598h10v1h-10zM311 598h1v10h-1z"/><path class="c" fill="#F1EFE2" d="M311 608h11v1h-11zM321 598h1v11h-1z"/><polygon points="358,532 363,526 406,526 401,532" fill="#3F9898"/><path class="c" fill="#4DC4C4" d="M358 532h43v80h-43z"/><path class="c" fill="#5BB7B7" d="M373 532h9v80h-9z"/><polygon points="401,532 406,526 406,608 401,613" fill="#5BDFDF"/><polygon points="358,608.5 362,612 358,612" fill="#008080"/><polygon points="362,612 364,616 394,616 401,612" fill="#48AAAA"/><path class="c" fill="#FFFFFF" d="M358 597h13v13h-13z"/><path class="c" fill="#ACA899" d="M358 597h12v1h-12zM358 597h1v12h-1z"/><path class="c" fill="#716F64" d="M359 598h10v1h-10zM359 598h1v10h-1z"/><path class="c" fill="#F1EFE2" d="M359 608h11v1h-11zM369 598h1v11h-1z"/><polygon points="406,532 411,526 498,526 493,532" fill="#3F9898"/><path class="c" fill="#4DC4C4" d="M406 532h87v80h-87z"/><path class="c" fill="#5BB7B7" d="M421 532h9v80h-9zM465 532h9v80h-9z"/><polygon points="493,532 498,526 498,608 493,613" fill="#5BDFDF"/><polygon points="406,608.5 410,612 406,612" fill="#008080"/><polygon points="410,612 412,616 442,616 449.0,612.5 456,616 486,616 493,612" fill="#48AAAA"/><path class="c" fill="#FFFFFF" d="M406 597h13v13h-13z"/><path class="c" fill="#ACA899" d="M406 597h12v1h-12zM406 597h1v12h-1z"/><path class="c" fill="#716F64" d="M407 598h10v1h-10zM407 598h1v10h-1z"/><path class="c" fill="#F1EFE2" d="M407 608h11v1h-11zM417 598h1v11h-1z"/><path class="c" fill="#FFFFFF" d="M450 597h13v13h-13z"/><path class="c" fill="#ACA899" d="M450 597h12v1h-12zM450 597h1v12h-1z"/><path class="c" fill="#716F64" d="M451 598h10v1h-10zM451 598h1v10h-1z"/><path class="c" fill="#F1EFE2" d="M451 608h11v1h-11zM461 598h1v11h-1z"/><path class="c" fill="#FFFFFF" d="M104 564h38v11h-38z"/><path class="c" fill="#ACA899" d="M104 564h37v10h-37z"/><path class="c" fill="#ECE9D8" d="M105 565h36v9h-36z"/><text x="115.0" y="573" font-size="10" fill="#000" style="" text-anchor="start" textLength="17" lengthAdjust="spacingAndGlyphs" >Б-25</text><path class="c" fill="#ECE9D8" d="M103 575h40v16h-40z"/><path class="c" fill="#ACA899" d="M103 575h39v1h-39zM103 575h1v15h-1z"/><path class="c" fill="#716F64" d="M104 576h37v1h-37zM104 576h1v13h-1z"/><path class="c" fill="#FFFFFF" d="M103 590h40v1h-40zM142 575h1v16h-1z"/><path class="c" fill="#716F64" d="M125 577h16v13h-16z"/><path class="c" fill="#FFFFFF" d="M125 577h15v12h-15z"/><path class="c" fill="#ACA899" d="M126 578h13v10h-13z"/><path class="c" fill="#ECE9D8" d="M126 578h13v10h-13z"/><path class="c" fill="#ACA899" d="M139 578h1v11h-1zM126 588h14v1h-14z"/><path class="c" fill="#000" d="M130 582h7v1h-7zM131 583h5v1h-5zM132 584h3v1h-3zM133 585h1v1h-1z"/><path class="c" fill="#FFFFFF" d="M197 564h38v11h-38z"/><path class="c" fill="#ACA899" d="M197 564h37v10h-37z"/><path class="c" fill="#ECE9D8" d="M198 565h36v9h-36z"/><text x="208.0" y="573" font-size="10" fill="#000" style="" text-anchor="start" textLength="17" lengthAdjust="spacingAndGlyphs" >Б-26</text><path class="c" fill="#ECE9D8" d="M196 575h40v16h-40z"/><path class="c" fill="#ACA899" d="M196 575h39v1h-39zM196 575h1v15h-1z"/><path class="c" fill="#716F64" d="M197 576h37v1h-37zM197 576h1v13h-1z"/><path class="c" fill="#FFFFFF" d="M196 590h40v1h-40zM235 575h1v16h-1z"/><path class="c" fill="#716F64" d="M218 577h16v13h-16z"/><path class="c" fill="#FFFFFF" d="M218 577h15v12h-15z"/><path class="c" fill="#ACA899" d="M219 578h13v10h-13z"/><path class="c" fill="#ECE9D8" d="M219 578h13v10h-13z"/><path class="c" fill="#ACA899" d="M232 578h1v11h-1zM219 588h14v1h-14z"/><path class="c" fill="#000" d="M223 582h7v1h-7zM224 583h5v1h-5zM225 584h3v1h-3zM226 585h1v1h-1z"/><path class="c" fill="#FFFFFF" d="M289 564h38v11h-38z"/><path class="c" fill="#ACA899" d="M289 564h37v10h-37z"/><path class="c" fill="#ECE9D8" d="M290 565h36v9h-36z"/><text x="300.0" y="573" font-size="10" fill="#000" style="" text-anchor="start" textLength="17" lengthAdjust="spacingAndGlyphs" >Б-27</text><path class="c" fill="#ECE9D8" d="M288 575h40v16h-40z"/><path class="c" fill="#ACA899" d="M288 575h39v1h-39zM288 575h1v15h-1z"/><path class="c" fill="#716F64" d="M289 576h37v1h-37zM289 576h1v13h-1z"/><path class="c" fill="#FFFFFF" d="M288 590h40v1h-40zM327 575h1v16h-1z"/><path class="c" fill="#716F64" d="M310 577h16v13h-16z"/><path class="c" fill="#FFFFFF" d="M310 577h15v12h-15z"/><path class="c" fill="#ACA899" d="M311 578h13v10h-13z"/><path class="c" fill="#ECE9D8" d="M311 578h13v10h-13z"/><path class="c" fill="#ACA899" d="M324 578h1v11h-1zM311 588h14v1h-14z"/><path class="c" fill="#000" d="M315 582h7v1h-7zM316 583h5v1h-5zM317 584h3v1h-3zM318 585h1v1h-1z"/><path class="c" fill="#FFFFFF" d="M360 564h38v11h-38z"/><path class="c" fill="#ACA899" d="M360 564h37v10h-37z"/><path class="c" fill="#ECE9D8" d="M361 565h36v9h-36z"/><text x="371.0" y="573" font-size="10" fill="#000" style="" text-anchor="start" textLength="17" lengthAdjust="spacingAndGlyphs" >Б-28</text><path class="c" fill="#ECE9D8" d="M359 575h40v16h-40z"/><path class="c" fill="#ACA899" d="M359 575h39v1h-39zM359 575h1v15h-1z"/><path class="c" fill="#716F64" d="M360 576h37v1h-37zM360 576h1v13h-1z"/><path class="c" fill="#FFFFFF" d="M359 590h40v1h-40zM398 575h1v16h-1z"/><path class="c" fill="#716F64" d="M381 577h16v13h-16z"/><path class="c" fill="#FFFFFF" d="M381 577h15v12h-15z"/><path class="c" fill="#ACA899" d="M382 578h13v10h-13z"/><path class="c" fill="#ECE9D8" d="M382 578h13v10h-13z"/><path class="c" fill="#ACA899" d="M395 578h1v11h-1zM382 588h14v1h-14z"/><path class="c" fill="#000" d="M386 582h7v1h-7zM387 583h5v1h-5zM388 584h3v1h-3zM389 585h1v1h-1z"/><path class="c" fill="#FFFFFF" d="M433 566h29v11h-29z"/><path class="c" fill="#ACA899" d="M433 566h28v10h-28z"/><path class="c" fill="#ECE9D8" d="M434 567h27v9h-27z"/><text x="439.5" y="575" font-size="10" fill="#000" style="" text-anchor="start" textLength="17" lengthAdjust="spacingAndGlyphs" >Б-29</text><path class="c" fill="#FFFFFF" d="M433 577h29v11h-29z"/><path class="c" fill="#ACA899" d="M433 577h28v10h-28z"/><path class="c" fill="#ECE9D8" d="M434 578h27v9h-27z"/><text x="442.0" y="586" font-size="10" fill="#000" style="" text-anchor="start" textLength="12" lengthAdjust="spacingAndGlyphs" >1/с</text><path class="c" fill="#000" d="M88 616h27v1h-27zM88 617h1v1h-1z"/><path class="c" fill="#00FFFF" d="M89 617h25v1h-25z"/><path class="c" fill="#000" d="M114 617h2v1h-2zM88 618h28v1h-28zM88 619h1v1h-1z"/><path class="c" fill="#00FFFF" d="M89 619h1v1h-1z"/><path class="c" fill="#000" d="M90 619h2v1h-2z"/><path class="c" fill="#00FFFF" d="M92 619h1v1h-1z"/><path class="c" fill="#000" d="M93 619h1v1h-1z"/><path class="c" fill="#00FFFF" d="M94 619h15v1h-15z"/><path class="c" fill="#000" d="M109 619h1v1h-1z"/><path class="c" fill="#00FFFF" d="M110 619h1v1h-1z"/><path class="c" fill="#000" d="M111 619h2v1h-2z"/><path class="c" fill="#00FFFF" d="M113 619h1v1h-1z"/><path class="c" fill="#000" d="M114 619h1v1h-1zM88 620h1v1h-1z"/><path class="c" fill="#00FFFF" d="M89 620h2v1h-2z"/><path class="c" fill="#000" d="M91 620h3v1h-3z"/><path class="c" fill="#00FFFF" d="M94 620h15v1h-15z"/><path class="c" fill="#000" d="M109 620h3v1h-3z"/><path class="c" fill="#00FFFF" d="M112 620h2v1h-2z"/><path class="c" fill="#000" d="M114 620h1v1h-1zM88 621h1v1h-1z"/><path class="c" fill="#00FFFF" d="M89 621h3v1h-3z"/><path class="c" fill="#000" d="M92 621h3v1h-3z"/><path class="c" fill="#00FFFF" d="M95 621h13v1h-13z"/><path class="c" fill="#000" d="M108 621h3v1h-3z"/><path class="c" fill="#00FFFF" d="M111 621h3v1h-3z"/><path class="c" fill="#000" d="M114 621h1v1h-1zM88 622h1v1h-1z"/><path class="c" fill="#00FFFF" d="M89 622h3v1h-3z"/><path class="c" fill="#000" d="M92 622h3v1h-3z"/><path class="c" fill="#00FFFF" d="M95 622h13v1h-13z"/><path class="c" fill="#000" d="M108 622h3v1h-3z"/><path class="c" fill="#00FFFF" d="M111 622h3v1h-3z"/><path class="c" fill="#000" d="M114 622h1v1h-1zM88 623h27v1h-27zM88 624h2v1h-2z"/><path class="c" fill="#00FFFF" d="M90 624h23v1h-23z"/><path class="c" fill="#000" d="M113 624h2v1h-2zM90 625h1v1h-1z"/><path class="c" fill="#00FFFF" d="M91 625h20v1h-20z"/><path class="c" fill="#000" d="M111 625h2v1h-2zM91 626h2v1h-2z"/><path class="c" fill="#00FFFF" d="M93 626h18v1h-18z"/><path class="c" fill="#000" d="M111 626h2v1h-2zM93 627h2v1h-2z"/><path class="c" fill="#00FFFF" d="M95 627h14v1h-14z"/><path class="c" fill="#000" d="M109 627h2v1h-2zM94 628h15v1h-15z"/><path class="c" fill="#fff" d="M102 630h1v24h-1z"/><path class="c" fill="#00FFFF" d="M98 658h10v1h-10zM110 658h10v1h-10zM122 658h8v1h-8zM96 661h5v1h-5zM103 661h10v1h-10zM115 661h10v1h-10zM127 661h3v1h-3zM96 655h1v1h-1zM97 655h1v1h-1zM95 656h1v1h-1zM97 656h1v1h-1zM98 656h1v1h-1zM95 657h1v1h-1zM98 657h1v1h-1zM98 658h1v1h-1zM99 658h1v1h-1zM99 659h1v1h-1zM99 660h1v1h-1zM100 660h1v1h-1zM100 661h1v1h-1zM100 662h1v1h-1zM101 662h1v1h-1zM104 662h1v1h-1zM105 662h1v1h-1zM101 663h1v1h-1zM103 663h1v1h-1zM101 664h1v1h-1zM102 664h1v1h-1zM108 655h1v1h-1zM109 655h1v1h-1zM107 656h1v1h-1zM109 656h1v1h-1zM110 656h1v1h-1zM107 657h1v1h-1zM110 657h1v1h-1zM110 658h1v1h-1zM111 658h1v1h-1zM111 659h1v1h-1zM111 660h1v1h-1zM112 660h1v1h-1zM112 661h1v1h-1zM112 662h1v1h-1zM113 662h1v1h-1zM116 662h1v1h-1zM117 662h1v1h-1zM113 663h1v1h-1zM115 663h1v1h-1zM113 664h1v1h-1zM114 664h1v1h-1zM120 655h1v1h-1zM121 655h1v1h-1zM119 656h1v1h-1zM121 656h1v1h-1zM122 656h1v1h-1zM119 657h1v1h-1zM122 657h1v1h-1zM122 658h1v1h-1zM123 658h1v1h-1zM123 659h1v1h-1zM123 660h1v1h-1zM124 660h1v1h-1zM124 661h1v1h-1zM124 662h1v1h-1zM125 662h1v1h-1zM128 662h1v1h-1zM129 662h1v1h-1zM125 663h1v1h-1zM127 663h1v1h-1zM125 664h1v1h-1zM126 664h1v1h-1zM130 655h1v9h-1z"/><path class="c" fill="#000" d="M94 657h3v1h-3zM93 658h1v1h-1z"/><path class="c" fill="#00FFFF" d="M94 658h3v1h-3z"/><path class="c" fill="#000" d="M97 658h1v1h-1zM92 659h1v1h-1z"/><path class="c" fill="#00FFFF" d="M93 659h5v1h-5z"/><path class="c" fill="#000" d="M98 659h1v1h-1zM92 660h1v1h-1z"/><path class="c" fill="#00FFFF" d="M93 660h5v1h-5z"/><path class="c" fill="#000" d="M98 660h1v1h-1zM92 661h1v1h-1z"/><path class="c" fill="#00FFFF" d="M93 661h5v1h-5z"/><path class="c" fill="#000" d="M98 661h1v1h-1zM93 662h1v1h-1z"/><path class="c" fill="#00FFFF" d="M94 662h3v1h-3z"/><path class="c" fill="#000" d="M97 662h1v1h-1zM94 663h3v1h-3zM99 654h7v5h-7z"/><path class="c" fill="#00FFFF" d="M100 655h5v3h-5z"/><path class="c" fill="#fff" d="M128 666h1v25h-1z"/><path class="c" fill="#000" d="M132 616h27v1h-27zM132 617h1v1h-1z"/><path class="c" fill="#00FFFF" d="M133 617h25v1h-25z"/><path class="c" fill="#000" d="M158 617h2v1h-2zM132 618h28v1h-28zM132 619h1v1h-1z"/><path class="c" fill="#00FFFF" d="M133 619h1v1h-1z"/><path class="c" fill="#000" d="M134 619h2v1h-2z"/><path class="c" fill="#00FFFF" d="M136 619h1v1h-1z"/><path class="c" fill="#000" d="M137 619h1v1h-1z"/><path class="c" fill="#00FFFF" d="M138 619h15v1h-15z"/><path class="c" fill="#000" d="M153 619h1v1h-1z"/><path class="c" fill="#00FFFF" d="M154 619h1v1h-1z"/><path class="c" fill="#000" d="M155 619h2v1h-2z"/><path class="c" fill="#00FFFF" d="M157 619h1v1h-1z"/><path class="c" fill="#000" d="M158 619h1v1h-1zM132 620h1v1h-1z"/><path class="c" fill="#00FFFF" d="M133 620h2v1h-2z"/><path class="c" fill="#000" d="M135 620h3v1h-3z"/><path class="c" fill="#00FFFF" d="M138 620h15v1h-15z"/><path class="c" fill="#000" d="M153 620h3v1h-3z"/><path class="c" fill="#00FFFF" d="M156 620h2v1h-2z"/><path class="c" fill="#000" d="M158 620h1v1h-1zM132 621h1v1h-1z"/><path class="c" fill="#00FFFF" d="M133 621h3v1h-3z"/><path class="c" fill="#000" d="M136 621h3v1h-3z"/><path class="c" fill="#00FFFF" d="M139 621h13v1h-13z"/><path class="c" fill="#000" d="M152 621h3v1h-3z"/><path class="c" fill="#00FFFF" d="M155 621h3v1h-3z"/><path class="c" fill="#000" d="M158 621h1v1h-1zM132 622h1v1h-1z"/><path class="c" fill="#00FFFF" d="M133 622h3v1h-3z"/><path class="c" fill="#000" d="M136 622h3v1h-3z"/><path class="c" fill="#00FFFF" d="M139 622h13v1h-13z"/><path class="c" fill="#000" d="M152 622h3v1h-3z"/><path class="c" fill="#00FFFF" d="M155 622h3v1h-3z"/><path class="c" fill="#000" d="M158 622h1v1h-1zM132 623h27v1h-27zM132 624h2v1h-2z"/><path class="c" fill="#00FFFF" d="M134 624h23v1h-23z"/><path class="c" fill="#000" d="M157 624h2v1h-2zM134 625h1v1h-1z"/><path class="c" fill="#00FFFF" d="M135 625h20v1h-20z"/><path class="c" fill="#000" d="M155 625h2v1h-2zM135 626h2v1h-2z"/><path class="c" fill="#00FFFF" d="M137 626h18v1h-18z"/><path class="c" fill="#000" d="M155 626h2v1h-2zM137 627h2v1h-2z"/><path class="c" fill="#00FFFF" d="M139 627h14v1h-14z"/><path class="c" fill="#000" d="M153 627h2v1h-2zM138 628h15v1h-15z"/><path class="c" fill="#fff" d="M146 630h1v24h-1z"/><path class="c" fill="#00FFFF" d="M142 658h10v1h-10zM154 658h10v1h-10zM166 658h8v1h-8zM140 661h5v1h-5zM147 661h10v1h-10zM159 661h10v1h-10zM171 661h3v1h-3zM140 655h1v1h-1zM141 655h1v1h-1zM139 656h1v1h-1zM141 656h1v1h-1zM142 656h1v1h-1zM139 657h1v1h-1zM142 657h1v1h-1zM142 658h1v1h-1zM143 658h1v1h-1zM143 659h1v1h-1zM143 660h1v1h-1zM144 660h1v1h-1zM144 661h1v1h-1zM144 662h1v1h-1zM145 662h1v1h-1zM148 662h1v1h-1zM149 662h1v1h-1zM145 663h1v1h-1zM147 663h1v1h-1zM145 664h1v1h-1zM146 664h1v1h-1zM152 655h1v1h-1zM153 655h1v1h-1zM151 656h1v1h-1zM153 656h1v1h-1zM154 656h1v1h-1zM151 657h1v1h-1zM154 657h1v1h-1zM154 658h1v1h-1zM155 658h1v1h-1zM155 659h1v1h-1zM155 660h1v1h-1zM156 660h1v1h-1zM156 661h1v1h-1zM156 662h1v1h-1zM157 662h1v1h-1zM160 662h1v1h-1zM161 662h1v1h-1zM157 663h1v1h-1zM159 663h1v1h-1zM157 664h1v1h-1zM158 664h1v1h-1zM164 655h1v1h-1zM165 655h1v1h-1zM163 656h1v1h-1zM165 656h1v1h-1zM166 656h1v1h-1zM163 657h1v1h-1zM166 657h1v1h-1zM166 658h1v1h-1zM167 658h1v1h-1zM167 659h1v1h-1zM167 660h1v1h-1zM168 660h1v1h-1zM168 661h1v1h-1zM168 662h1v1h-1zM169 662h1v1h-1zM172 662h1v1h-1zM173 662h1v1h-1zM169 663h1v1h-1zM171 663h1v1h-1zM169 664h1v1h-1zM170 664h1v1h-1zM174 655h1v9h-1z"/><path class="c" fill="#000" d="M138 657h3v1h-3zM137 658h1v1h-1z"/><path class="c" fill="#00FFFF" d="M138 658h3v1h-3z"/><path class="c" fill="#000" d="M141 658h1v1h-1zM136 659h1v1h-1z"/><path class="c" fill="#00FFFF" d="M137 659h5v1h-5z"/><path class="c" fill="#000" d="M142 659h1v1h-1zM136 660h1v1h-1z"/><path class="c" fill="#00FFFF" d="M137 660h5v1h-5z"/><path class="c" fill="#000" d="M142 660h1v1h-1zM136 661h1v1h-1z"/><path class="c" fill="#00FFFF" d="M137 661h5v1h-5z"/><path class="c" fill="#000" d="M142 661h1v1h-1zM137 662h1v1h-1z"/><path class="c" fill="#00FFFF" d="M138 662h3v1h-3z"/><path class="c" fill="#000" d="M141 662h1v1h-1zM138 663h3v1h-3zM143 654h7v5h-7z"/><path class="c" fill="#00FFFF" d="M144 655h5v3h-5z"/><path class="c" fill="#fff" d="M172 666h1v25h-1z"/><path class="c" fill="#000" d="M181 616h27v1h-27zM181 617h1v1h-1z"/><path class="c" fill="#00FFFF" d="M182 617h25v1h-25z"/><path class="c" fill="#000" d="M207 617h2v1h-2zM181 618h28v1h-28zM181 619h1v1h-1z"/><path class="c" fill="#00FFFF" d="M182 619h1v1h-1z"/><path class="c" fill="#000" d="M183 619h2v1h-2z"/><path class="c" fill="#00FFFF" d="M185 619h1v1h-1z"/><path class="c" fill="#000" d="M186 619h1v1h-1z"/><path class="c" fill="#00FFFF" d="M187 619h15v1h-15z"/><path class="c" fill="#000" d="M202 619h1v1h-1z"/><path class="c" fill="#00FFFF" d="M203 619h1v1h-1z"/><path class="c" fill="#000" d="M204 619h2v1h-2z"/><path class="c" fill="#00FFFF" d="M206 619h1v1h-1z"/><path class="c" fill="#000" d="M207 619h1v1h-1zM181 620h1v1h-1z"/><path class="c" fill="#00FFFF" d="M182 620h2v1h-2z"/><path class="c" fill="#000" d="M184 620h3v1h-3z"/><path class="c" fill="#00FFFF" d="M187 620h15v1h-15z"/><path class="c" fill="#000" d="M202 620h3v1h-3z"/><path class="c" fill="#00FFFF" d="M205 620h2v1h-2z"/><path class="c" fill="#000" d="M207 620h1v1h-1zM181 621h1v1h-1z"/><path class="c" fill="#00FFFF" d="M182 621h3v1h-3z"/><path class="c" fill="#000" d="M185 621h3v1h-3z"/><path class="c" fill="#00FFFF" d="M188 621h13v1h-13z"/><path class="c" fill="#000" d="M201 621h3v1h-3z"/><path class="c" fill="#00FFFF" d="M204 621h3v1h-3z"/><path class="c" fill="#000" d="M207 621h1v1h-1zM181 622h1v1h-1z"/><path class="c" fill="#00FFFF" d="M182 622h3v1h-3z"/><path class="c" fill="#000" d="M185 622h3v1h-3z"/><path class="c" fill="#00FFFF" d="M188 622h13v1h-13z"/><path class="c" fill="#000" d="M201 622h3v1h-3z"/><path class="c" fill="#00FFFF" d="M204 622h3v1h-3z"/><path class="c" fill="#000" d="M207 622h1v1h-1zM181 623h27v1h-27zM181 624h2v1h-2z"/><path class="c" fill="#00FFFF" d="M183 624h23v1h-23z"/><path class="c" fill="#000" d="M206 624h2v1h-2zM183 625h1v1h-1z"/><path class="c" fill="#00FFFF" d="M184 625h20v1h-20z"/><path class="c" fill="#000" d="M204 625h2v1h-2zM184 626h2v1h-2z"/><path class="c" fill="#00FFFF" d="M186 626h18v1h-18z"/><path class="c" fill="#000" d="M204 626h2v1h-2zM186 627h2v1h-2z"/><path class="c" fill="#00FFFF" d="M188 627h14v1h-14z"/><path class="c" fill="#000" d="M202 627h2v1h-2zM187 628h15v1h-15z"/><path class="c" fill="#fff" d="M195 630h1v24h-1z"/><path class="c" fill="#00FFFF" d="M191 658h10v1h-10zM203 658h10v1h-10zM215 658h8v1h-8zM189 661h5v1h-5zM196 661h10v1h-10zM208 661h10v1h-10zM220 661h3v1h-3zM189 655h1v1h-1zM190 655h1v1h-1zM188 656h1v1h-1zM190 656h1v1h-1zM191 656h1v1h-1zM188 657h1v1h-1zM191 657h1v1h-1zM191 658h1v1h-1zM192 658h1v1h-1zM192 659h1v1h-1zM192 660h1v1h-1zM193 660h1v1h-1zM193 661h1v1h-1zM193 662h1v1h-1zM194 662h1v1h-1zM197 662h1v1h-1zM198 662h1v1h-1zM194 663h1v1h-1zM196 663h1v1h-1zM194 664h1v1h-1zM195 664h1v1h-1zM201 655h1v1h-1zM202 655h1v1h-1zM200 656h1v1h-1zM202 656h1v1h-1zM203 656h1v1h-1zM200 657h1v1h-1zM203 657h1v1h-1zM203 658h1v1h-1zM204 658h1v1h-1zM204 659h1v1h-1zM204 660h1v1h-1zM205 660h1v1h-1zM205 661h1v1h-1zM205 662h1v1h-1zM206 662h1v1h-1zM209 662h1v1h-1zM210 662h1v1h-1zM206 663h1v1h-1zM208 663h1v1h-1zM206 664h1v1h-1zM207 664h1v1h-1zM213 655h1v1h-1zM214 655h1v1h-1zM212 656h1v1h-1zM214 656h1v1h-1zM215 656h1v1h-1zM212 657h1v1h-1zM215 657h1v1h-1zM215 658h1v1h-1zM216 658h1v1h-1zM216 659h1v1h-1zM216 660h1v1h-1zM217 660h1v1h-1zM217 661h1v1h-1zM217 662h1v1h-1zM218 662h1v1h-1zM221 662h1v1h-1zM222 662h1v1h-1zM218 663h1v1h-1zM220 663h1v1h-1zM218 664h1v1h-1zM219 664h1v1h-1zM223 655h1v9h-1z"/><path class="c" fill="#000" d="M187 657h3v1h-3zM186 658h1v1h-1z"/><path class="c" fill="#00FFFF" d="M187 658h3v1h-3z"/><path class="c" fill="#000" d="M190 658h1v1h-1zM185 659h1v1h-1z"/><path class="c" fill="#00FFFF" d="M186 659h5v1h-5z"/><path class="c" fill="#000" d="M191 659h1v1h-1zM185 660h1v1h-1z"/><path class="c" fill="#00FFFF" d="M186 660h5v1h-5z"/><path class="c" fill="#000" d="M191 660h1v1h-1zM185 661h1v1h-1z"/><path class="c" fill="#00FFFF" d="M186 661h5v1h-5z"/><path class="c" fill="#000" d="M191 661h1v1h-1zM186 662h1v1h-1z"/><path class="c" fill="#00FFFF" d="M187 662h3v1h-3z"/><path class="c" fill="#000" d="M190 662h1v1h-1zM187 663h3v1h-3zM192 654h7v5h-7z"/><path class="c" fill="#00FFFF" d="M193 655h5v3h-5z"/><path class="c" fill="#fff" d="M221 666h1v25h-1z"/><path class="c" fill="#000" d="M225 616h27v1h-27zM225 617h1v1h-1z"/><path class="c" fill="#00FFFF" d="M226 617h25v1h-25z"/><path class="c" fill="#000" d="M251 617h2v1h-2zM225 618h28v1h-28zM225 619h1v1h-1z"/><path class="c" fill="#00FFFF" d="M226 619h1v1h-1z"/><path class="c" fill="#000" d="M227 619h2v1h-2z"/><path class="c" fill="#00FFFF" d="M229 619h1v1h-1z"/><path class="c" fill="#000" d="M230 619h1v1h-1z"/><path class="c" fill="#00FFFF" d="M231 619h15v1h-15z"/><path class="c" fill="#000" d="M246 619h1v1h-1z"/><path class="c" fill="#00FFFF" d="M247 619h1v1h-1z"/><path class="c" fill="#000" d="M248 619h2v1h-2z"/><path class="c" fill="#00FFFF" d="M250 619h1v1h-1z"/><path class="c" fill="#000" d="M251 619h1v1h-1zM225 620h1v1h-1z"/><path class="c" fill="#00FFFF" d="M226 620h2v1h-2z"/><path class="c" fill="#000" d="M228 620h3v1h-3z"/><path class="c" fill="#00FFFF" d="M231 620h15v1h-15z"/><path class="c" fill="#000" d="M246 620h3v1h-3z"/><path class="c" fill="#00FFFF" d="M249 620h2v1h-2z"/><path class="c" fill="#000" d="M251 620h1v1h-1zM225 621h1v1h-1z"/><path class="c" fill="#00FFFF" d="M226 621h3v1h-3z"/><path class="c" fill="#000" d="M229 621h3v1h-3z"/><path class="c" fill="#00FFFF" d="M232 621h13v1h-13z"/><path class="c" fill="#000" d="M245 621h3v1h-3z"/><path class="c" fill="#00FFFF" d="M248 621h3v1h-3z"/><path class="c" fill="#000" d="M251 621h1v1h-1zM225 622h1v1h-1z"/><path class="c" fill="#00FFFF" d="M226 622h3v1h-3z"/><path class="c" fill="#000" d="M229 622h3v1h-3z"/><path class="c" fill="#00FFFF" d="M232 622h13v1h-13z"/><path class="c" fill="#000" d="M245 622h3v1h-3z"/><path class="c" fill="#00FFFF" d="M248 622h3v1h-3z"/><path class="c" fill="#000" d="M251 622h1v1h-1zM225 623h27v1h-27zM225 624h2v1h-2z"/><path class="c" fill="#00FFFF" d="M227 624h23v1h-23z"/><path class="c" fill="#000" d="M250 624h2v1h-2zM227 625h1v1h-1z"/><path class="c" fill="#00FFFF" d="M228 625h20v1h-20z"/><path class="c" fill="#000" d="M248 625h2v1h-2zM228 626h2v1h-2z"/><path class="c" fill="#00FFFF" d="M230 626h18v1h-18z"/><path class="c" fill="#000" d="M248 626h2v1h-2zM230 627h2v1h-2z"/><path class="c" fill="#00FFFF" d="M232 627h14v1h-14z"/><path class="c" fill="#000" d="M246 627h2v1h-2zM231 628h15v1h-15z"/><path class="c" fill="#fff" d="M239 630h1v24h-1z"/><path class="c" fill="#00FFFF" d="M235 658h10v1h-10zM247 658h10v1h-10zM259 658h8v1h-8zM233 661h5v1h-5zM240 661h10v1h-10zM252 661h10v1h-10zM264 661h3v1h-3zM233 655h1v1h-1zM234 655h1v1h-1zM232 656h1v1h-1zM234 656h1v1h-1zM235 656h1v1h-1zM232 657h1v1h-1zM235 657h1v1h-1zM235 658h1v1h-1zM236 658h1v1h-1zM236 659h1v1h-1zM236 660h1v1h-1zM237 660h1v1h-1zM237 661h1v1h-1zM237 662h1v1h-1zM238 662h1v1h-1zM241 662h1v1h-1zM242 662h1v1h-1zM238 663h1v1h-1zM240 663h1v1h-1zM238 664h1v1h-1zM239 664h1v1h-1zM245 655h1v1h-1zM246 655h1v1h-1zM244 656h1v1h-1zM246 656h1v1h-1zM247 656h1v1h-1zM244 657h1v1h-1zM247 657h1v1h-1zM247 658h1v1h-1zM248 658h1v1h-1zM248 659h1v1h-1zM248 660h1v1h-1zM249 660h1v1h-1zM249 661h1v1h-1zM249 662h1v1h-1zM250 662h1v1h-1zM253 662h1v1h-1zM254 662h1v1h-1zM250 663h1v1h-1zM252 663h1v1h-1zM250 664h1v1h-1zM251 664h1v1h-1zM257 655h1v1h-1zM258 655h1v1h-1zM256 656h1v1h-1zM258 656h1v1h-1zM259 656h1v1h-1zM256 657h1v1h-1zM259 657h1v1h-1zM259 658h1v1h-1zM260 658h1v1h-1zM260 659h1v1h-1zM260 660h1v1h-1zM261 660h1v1h-1zM261 661h1v1h-1zM261 662h1v1h-1zM262 662h1v1h-1zM265 662h1v1h-1zM266 662h1v1h-1zM262 663h1v1h-1zM264 663h1v1h-1zM262 664h1v1h-1zM263 664h1v1h-1zM267 655h1v9h-1z"/><path class="c" fill="#000" d="M231 657h3v1h-3zM230 658h1v1h-1z"/><path class="c" fill="#00FFFF" d="M231 658h3v1h-3z"/><path class="c" fill="#000" d="M234 658h1v1h-1zM229 659h1v1h-1z"/><path class="c" fill="#00FFFF" d="M230 659h5v1h-5z"/><path class="c" fill="#000" d="M235 659h1v1h-1zM229 660h1v1h-1z"/><path class="c" fill="#00FFFF" d="M230 660h5v1h-5z"/><path class="c" fill="#000" d="M235 660h1v1h-1zM229 661h1v1h-1z"/><path class="c" fill="#00FFFF" d="M230 661h5v1h-5z"/><path class="c" fill="#000" d="M235 661h1v1h-1zM230 662h1v1h-1z"/><path class="c" fill="#00FFFF" d="M231 662h3v1h-3z"/><path class="c" fill="#000" d="M234 662h1v1h-1zM231 663h3v1h-3zM236 654h7v5h-7z"/><path class="c" fill="#00FFFF" d="M237 655h5v3h-5z"/><path class="c" fill="#fff" d="M265 666h1v25h-1z"/><path class="c" fill="#000" d="M273 616h27v1h-27zM273 617h1v1h-1z"/><path class="c" fill="#00FFFF" d="M274 617h25v1h-25z"/><path class="c" fill="#000" d="M299 617h2v1h-2zM273 618h28v1h-28zM273 619h1v1h-1z"/><path class="c" fill="#00FFFF" d="M274 619h1v1h-1z"/><path class="c" fill="#000" d="M275 619h2v1h-2z"/><path class="c" fill="#00FFFF" d="M277 619h1v1h-1z"/><path class="c" fill="#000" d="M278 619h1v1h-1z"/><path class="c" fill="#00FFFF" d="M279 619h15v1h-15z"/><path class="c" fill="#000" d="M294 619h1v1h-1z"/><path class="c" fill="#00FFFF" d="M295 619h1v1h-1z"/><path class="c" fill="#000" d="M296 619h2v1h-2z"/><path class="c" fill="#00FFFF" d="M298 619h1v1h-1z"/><path class="c" fill="#000" d="M299 619h1v1h-1zM273 620h1v1h-1z"/><path class="c" fill="#00FFFF" d="M274 620h2v1h-2z"/><path class="c" fill="#000" d="M276 620h3v1h-3z"/><path class="c" fill="#00FFFF" d="M279 620h15v1h-15z"/><path class="c" fill="#000" d="M294 620h3v1h-3z"/><path class="c" fill="#00FFFF" d="M297 620h2v1h-2z"/><path class="c" fill="#000" d="M299 620h1v1h-1zM273 621h1v1h-1z"/><path class="c" fill="#00FFFF" d="M274 621h3v1h-3z"/><path class="c" fill="#000" d="M277 621h3v1h-3z"/><path class="c" fill="#00FFFF" d="M280 621h13v1h-13z"/><path class="c" fill="#000" d="M293 621h3v1h-3z"/><path class="c" fill="#00FFFF" d="M296 621h3v1h-3z"/><path class="c" fill="#000" d="M299 621h1v1h-1zM273 622h1v1h-1z"/><path class="c" fill="#00FFFF" d="M274 622h3v1h-3z"/><path class="c" fill="#000" d="M277 622h3v1h-3z"/><path class="c" fill="#00FFFF" d="M280 622h13v1h-13z"/><path class="c" fill="#000" d="M293 622h3v1h-3z"/><path class="c" fill="#00FFFF" d="M296 622h3v1h-3z"/><path class="c" fill="#000" d="M299 622h1v1h-1zM273 623h27v1h-27zM273 624h2v1h-2z"/><path class="c" fill="#00FFFF" d="M275 624h23v1h-23z"/><path class="c" fill="#000" d="M298 624h2v1h-2zM275 625h1v1h-1z"/><path class="c" fill="#00FFFF" d="M276 625h20v1h-20z"/><path class="c" fill="#000" d="M296 625h2v1h-2zM276 626h2v1h-2z"/><path class="c" fill="#00FFFF" d="M278 626h18v1h-18z"/><path class="c" fill="#000" d="M296 626h2v1h-2zM278 627h2v1h-2z"/><path class="c" fill="#00FFFF" d="M280 627h14v1h-14z"/><path class="c" fill="#000" d="M294 627h2v1h-2zM279 628h15v1h-15z"/><path class="c" fill="#fff" d="M287 630h1v24h-1z"/><path class="c" fill="#00FFFF" d="M283 658h10v1h-10zM295 658h10v1h-10zM307 658h8v1h-8zM281 661h5v1h-5zM288 661h10v1h-10zM300 661h10v1h-10zM312 661h3v1h-3zM281 655h1v1h-1zM282 655h1v1h-1zM280 656h1v1h-1zM282 656h1v1h-1zM283 656h1v1h-1zM280 657h1v1h-1zM283 657h1v1h-1zM283 658h1v1h-1zM284 658h1v1h-1zM284 659h1v1h-1zM284 660h1v1h-1zM285 660h1v1h-1zM285 661h1v1h-1zM285 662h1v1h-1zM286 662h1v1h-1zM289 662h1v1h-1zM290 662h1v1h-1zM286 663h1v1h-1zM288 663h1v1h-1zM286 664h1v1h-1zM287 664h1v1h-1zM293 655h1v1h-1zM294 655h1v1h-1zM292 656h1v1h-1zM294 656h1v1h-1zM295 656h1v1h-1zM292 657h1v1h-1zM295 657h1v1h-1zM295 658h1v1h-1zM296 658h1v1h-1zM296 659h1v1h-1zM296 660h1v1h-1zM297 660h1v1h-1zM297 661h1v1h-1zM297 662h1v1h-1zM298 662h1v1h-1zM301 662h1v1h-1zM302 662h1v1h-1zM298 663h1v1h-1zM300 663h1v1h-1zM298 664h1v1h-1zM299 664h1v1h-1zM305 655h1v1h-1zM306 655h1v1h-1zM304 656h1v1h-1zM306 656h1v1h-1zM307 656h1v1h-1zM304 657h1v1h-1zM307 657h1v1h-1zM307 658h1v1h-1zM308 658h1v1h-1zM308 659h1v1h-1zM308 660h1v1h-1zM309 660h1v1h-1zM309 661h1v1h-1zM309 662h1v1h-1zM310 662h1v1h-1zM313 662h1v1h-1zM314 662h1v1h-1zM310 663h1v1h-1zM312 663h1v1h-1zM310 664h1v1h-1zM311 664h1v1h-1zM315 655h1v9h-1z"/><path class="c" fill="#000" d="M279 657h3v1h-3zM278 658h1v1h-1z"/><path class="c" fill="#00FFFF" d="M279 658h3v1h-3z"/><path class="c" fill="#000" d="M282 658h1v1h-1zM277 659h1v1h-1z"/><path class="c" fill="#00FFFF" d="M278 659h5v1h-5z"/><path class="c" fill="#000" d="M283 659h1v1h-1zM277 660h1v1h-1z"/><path class="c" fill="#00FFFF" d="M278 660h5v1h-5z"/><path class="c" fill="#000" d="M283 660h1v1h-1zM277 661h1v1h-1z"/><path class="c" fill="#00FFFF" d="M278 661h5v1h-5z"/><path class="c" fill="#000" d="M283 661h1v1h-1zM278 662h1v1h-1z"/><path class="c" fill="#00FFFF" d="M279 662h3v1h-3z"/><path class="c" fill="#000" d="M282 662h1v1h-1zM279 663h3v1h-3zM284 654h7v5h-7z"/><path class="c" fill="#00FFFF" d="M285 655h5v3h-5z"/><path class="c" fill="#fff" d="M313 666h1v25h-1z"/><path class="c" fill="#000" d="M317 616h27v1h-27zM317 617h1v1h-1z"/><path class="c" fill="#00FFFF" d="M318 617h25v1h-25z"/><path class="c" fill="#000" d="M343 617h2v1h-2zM317 618h28v1h-28zM317 619h1v1h-1z"/><path class="c" fill="#00FFFF" d="M318 619h1v1h-1z"/><path class="c" fill="#000" d="M319 619h2v1h-2z"/><path class="c" fill="#00FFFF" d="M321 619h1v1h-1z"/><path class="c" fill="#000" d="M322 619h1v1h-1z"/><path class="c" fill="#00FFFF" d="M323 619h15v1h-15z"/><path class="c" fill="#000" d="M338 619h1v1h-1z"/><path class="c" fill="#00FFFF" d="M339 619h1v1h-1z"/><path class="c" fill="#000" d="M340 619h2v1h-2z"/><path class="c" fill="#00FFFF" d="M342 619h1v1h-1z"/><path class="c" fill="#000" d="M343 619h1v1h-1zM317 620h1v1h-1z"/><path class="c" fill="#00FFFF" d="M318 620h2v1h-2z"/><path class="c" fill="#000" d="M320 620h3v1h-3z"/><path class="c" fill="#00FFFF" d="M323 620h15v1h-15z"/><path class="c" fill="#000" d="M338 620h3v1h-3z"/><path class="c" fill="#00FFFF" d="M341 620h2v1h-2z"/><path class="c" fill="#000" d="M343 620h1v1h-1zM317 621h1v1h-1z"/><path class="c" fill="#00FFFF" d="M318 621h3v1h-3z"/><path class="c" fill="#000" d="M321 621h3v1h-3z"/><path class="c" fill="#00FFFF" d="M324 621h13v1h-13z"/><path class="c" fill="#000" d="M337 621h3v1h-3z"/><path class="c" fill="#00FFFF" d="M340 621h3v1h-3z"/><path class="c" fill="#000" d="M343 621h1v1h-1zM317 622h1v1h-1z"/><path class="c" fill="#00FFFF" d="M318 622h3v1h-3z"/><path class="c" fill="#000" d="M321 622h3v1h-3z"/><path class="c" fill="#00FFFF" d="M324 622h13v1h-13z"/><path class="c" fill="#000" d="M337 622h3v1h-3z"/><path class="c" fill="#00FFFF" d="M340 622h3v1h-3z"/><path class="c" fill="#000" d="M343 622h1v1h-1zM317 623h27v1h-27zM317 624h2v1h-2z"/><path class="c" fill="#00FFFF" d="M319 624h23v1h-23z"/><path class="c" fill="#000" d="M342 624h2v1h-2zM319 625h1v1h-1z"/><path class="c" fill="#00FFFF" d="M320 625h20v1h-20z"/><path class="c" fill="#000" d="M340 625h2v1h-2zM320 626h2v1h-2z"/><path class="c" fill="#00FFFF" d="M322 626h18v1h-18z"/><path class="c" fill="#000" d="M340 626h2v1h-2zM322 627h2v1h-2z"/><path class="c" fill="#00FFFF" d="M324 627h14v1h-14z"/><path class="c" fill="#000" d="M338 627h2v1h-2zM323 628h15v1h-15z"/><path class="c" fill="#fff" d="M331 630h1v24h-1z"/><path class="c" fill="#00FFFF" d="M327 658h10v1h-10zM339 658h10v1h-10zM351 658h8v1h-8zM325 661h5v1h-5zM332 661h10v1h-10zM344 661h10v1h-10zM356 661h3v1h-3zM325 655h1v1h-1zM326 655h1v1h-1zM324 656h1v1h-1zM326 656h1v1h-1zM327 656h1v1h-1zM324 657h1v1h-1zM327 657h1v1h-1zM327 658h1v1h-1zM328 658h1v1h-1zM328 659h1v1h-1zM328 660h1v1h-1zM329 660h1v1h-1zM329 661h1v1h-1zM329 662h1v1h-1zM330 662h1v1h-1zM333 662h1v1h-1zM334 662h1v1h-1zM330 663h1v1h-1zM332 663h1v1h-1zM330 664h1v1h-1zM331 664h1v1h-1zM337 655h1v1h-1zM338 655h1v1h-1zM336 656h1v1h-1zM338 656h1v1h-1zM339 656h1v1h-1zM336 657h1v1h-1zM339 657h1v1h-1zM339 658h1v1h-1zM340 658h1v1h-1zM340 659h1v1h-1zM340 660h1v1h-1zM341 660h1v1h-1zM341 661h1v1h-1zM341 662h1v1h-1zM342 662h1v1h-1zM345 662h1v1h-1zM346 662h1v1h-1zM342 663h1v1h-1zM344 663h1v1h-1zM342 664h1v1h-1zM343 664h1v1h-1zM349 655h1v1h-1zM350 655h1v1h-1zM348 656h1v1h-1zM350 656h1v1h-1zM351 656h1v1h-1zM348 657h1v1h-1zM351 657h1v1h-1zM351 658h1v1h-1zM352 658h1v1h-1zM352 659h1v1h-1zM352 660h1v1h-1zM353 660h1v1h-1zM353 661h1v1h-1zM353 662h1v1h-1zM354 662h1v1h-1zM357 662h1v1h-1zM358 662h1v1h-1zM354 663h1v1h-1zM356 663h1v1h-1zM354 664h1v1h-1zM355 664h1v1h-1zM359 655h1v9h-1z"/><path class="c" fill="#000" d="M323 657h3v1h-3zM322 658h1v1h-1z"/><path class="c" fill="#00FFFF" d="M323 658h3v1h-3z"/><path class="c" fill="#000" d="M326 658h1v1h-1zM321 659h1v1h-1z"/><path class="c" fill="#00FFFF" d="M322 659h5v1h-5z"/><path class="c" fill="#000" d="M327 659h1v1h-1zM321 660h1v1h-1z"/><path class="c" fill="#00FFFF" d="M322 660h5v1h-5z"/><path class="c" fill="#000" d="M327 660h1v1h-1zM321 661h1v1h-1z"/><path class="c" fill="#00FFFF" d="M322 661h5v1h-5z"/><path class="c" fill="#000" d="M327 661h1v1h-1zM322 662h1v1h-1z"/><path class="c" fill="#00FFFF" d="M323 662h3v1h-3z"/><path class="c" fill="#000" d="M326 662h1v1h-1zM323 663h3v1h-3zM328 654h7v5h-7z"/><path class="c" fill="#00FFFF" d="M329 655h5v3h-5z"/><path class="c" fill="#fff" d="M357 666h1v25h-1z"/><path class="c" fill="#000" d="M365 616h27v1h-27zM365 617h1v1h-1z"/><path class="c" fill="#00FFFF" d="M366 617h25v1h-25z"/><path class="c" fill="#000" d="M391 617h2v1h-2zM365 618h28v1h-28zM365 619h1v1h-1z"/><path class="c" fill="#00FFFF" d="M366 619h1v1h-1z"/><path class="c" fill="#000" d="M367 619h2v1h-2z"/><path class="c" fill="#00FFFF" d="M369 619h1v1h-1z"/><path class="c" fill="#000" d="M370 619h1v1h-1z"/><path class="c" fill="#00FFFF" d="M371 619h15v1h-15z"/><path class="c" fill="#000" d="M386 619h1v1h-1z"/><path class="c" fill="#00FFFF" d="M387 619h1v1h-1z"/><path class="c" fill="#000" d="M388 619h2v1h-2z"/><path class="c" fill="#00FFFF" d="M390 619h1v1h-1z"/><path class="c" fill="#000" d="M391 619h1v1h-1zM365 620h1v1h-1z"/><path class="c" fill="#00FFFF" d="M366 620h2v1h-2z"/><path class="c" fill="#000" d="M368 620h3v1h-3z"/><path class="c" fill="#00FFFF" d="M371 620h15v1h-15z"/><path class="c" fill="#000" d="M386 620h3v1h-3z"/><path class="c" fill="#00FFFF" d="M389 620h2v1h-2z"/><path class="c" fill="#000" d="M391 620h1v1h-1zM365 621h1v1h-1z"/><path class="c" fill="#00FFFF" d="M366 621h3v1h-3z"/><path class="c" fill="#000" d="M369 621h3v1h-3z"/><path class="c" fill="#00FFFF" d="M372 621h13v1h-13z"/><path class="c" fill="#000" d="M385 621h3v1h-3z"/><path class="c" fill="#00FFFF" d="M388 621h3v1h-3z"/><path class="c" fill="#000" d="M391 621h1v1h-1zM365 622h1v1h-1z"/><path class="c" fill="#00FFFF" d="M366 622h3v1h-3z"/><path class="c" fill="#000" d="M369 622h3v1h-3z"/><path class="c" fill="#00FFFF" d="M372 622h13v1h-13z"/><path class="c" fill="#000" d="M385 622h3v1h-3z"/><path class="c" fill="#00FFFF" d="M388 622h3v1h-3z"/><path class="c" fill="#000" d="M391 622h1v1h-1zM365 623h27v1h-27zM365 624h2v1h-2z"/><path class="c" fill="#00FFFF" d="M367 624h23v1h-23z"/><path class="c" fill="#000" d="M390 624h2v1h-2zM367 625h1v1h-1z"/><path class="c" fill="#00FFFF" d="M368 625h20v1h-20z"/><path class="c" fill="#000" d="M388 625h2v1h-2zM368 626h2v1h-2z"/><path class="c" fill="#00FFFF" d="M370 626h18v1h-18z"/><path class="c" fill="#000" d="M388 626h2v1h-2zM370 627h2v1h-2z"/><path class="c" fill="#00FFFF" d="M372 627h14v1h-14z"/><path class="c" fill="#000" d="M386 627h2v1h-2zM371 628h15v1h-15z"/><path class="c" fill="#fff" d="M379 630h1v24h-1z"/><path class="c" fill="#00FFFF" d="M375 658h10v1h-10zM387 658h10v1h-10zM399 658h8v1h-8zM373 661h5v1h-5zM380 661h10v1h-10zM392 661h10v1h-10zM404 661h3v1h-3zM373 655h1v1h-1zM374 655h1v1h-1zM372 656h1v1h-1zM374 656h1v1h-1zM375 656h1v1h-1zM372 657h1v1h-1zM375 657h1v1h-1zM375 658h1v1h-1zM376 658h1v1h-1zM376 659h1v1h-1zM376 660h1v1h-1zM377 660h1v1h-1zM377 661h1v1h-1zM377 662h1v1h-1zM378 662h1v1h-1zM381 662h1v1h-1zM382 662h1v1h-1zM378 663h1v1h-1zM380 663h1v1h-1zM378 664h1v1h-1zM379 664h1v1h-1zM385 655h1v1h-1zM386 655h1v1h-1zM384 656h1v1h-1zM386 656h1v1h-1zM387 656h1v1h-1zM384 657h1v1h-1zM387 657h1v1h-1zM387 658h1v1h-1zM388 658h1v1h-1zM388 659h1v1h-1zM388 660h1v1h-1zM389 660h1v1h-1zM389 661h1v1h-1zM389 662h1v1h-1zM390 662h1v1h-1zM393 662h1v1h-1zM394 662h1v1h-1zM390 663h1v1h-1zM392 663h1v1h-1zM390 664h1v1h-1zM391 664h1v1h-1zM397 655h1v1h-1zM398 655h1v1h-1zM396 656h1v1h-1zM398 656h1v1h-1zM399 656h1v1h-1zM396 657h1v1h-1zM399 657h1v1h-1zM399 658h1v1h-1zM400 658h1v1h-1zM400 659h1v1h-1zM400 660h1v1h-1zM401 660h1v1h-1zM401 661h1v1h-1zM401 662h1v1h-1zM402 662h1v1h-1zM405 662h1v1h-1zM406 662h1v1h-1zM402 663h1v1h-1zM404 663h1v1h-1zM402 664h1v1h-1zM403 664h1v1h-1zM407 655h1v9h-1z"/><path class="c" fill="#000" d="M371 657h3v1h-3zM370 658h1v1h-1z"/><path class="c" fill="#00FFFF" d="M371 658h3v1h-3z"/><path class="c" fill="#000" d="M374 658h1v1h-1zM369 659h1v1h-1z"/><path class="c" fill="#00FFFF" d="M370 659h5v1h-5z"/><path class="c" fill="#000" d="M375 659h1v1h-1zM369 660h1v1h-1z"/><path class="c" fill="#00FFFF" d="M370 660h5v1h-5z"/><path class="c" fill="#000" d="M375 660h1v1h-1zM369 661h1v1h-1z"/><path class="c" fill="#00FFFF" d="M370 661h5v1h-5z"/><path class="c" fill="#000" d="M375 661h1v1h-1zM370 662h1v1h-1z"/><path class="c" fill="#00FFFF" d="M371 662h3v1h-3z"/><path class="c" fill="#000" d="M374 662h1v1h-1zM371 663h3v1h-3zM376 654h7v5h-7z"/><path class="c" fill="#00FFFF" d="M377 655h5v3h-5z"/><path class="c" fill="#fff" d="M405 666h1v25h-1z"/><path class="c" fill="#000" d="M413 616h27v1h-27zM413 617h1v1h-1z"/><path class="c" fill="#00FFFF" d="M414 617h25v1h-25z"/><path class="c" fill="#000" d="M439 617h2v1h-2zM413 618h28v1h-28zM413 619h1v1h-1z"/><path class="c" fill="#00FFFF" d="M414 619h1v1h-1z"/><path class="c" fill="#000" d="M415 619h2v1h-2z"/><path class="c" fill="#00FFFF" d="M417 619h1v1h-1z"/><path class="c" fill="#000" d="M418 619h1v1h-1z"/><path class="c" fill="#00FFFF" d="M419 619h15v1h-15z"/><path class="c" fill="#000" d="M434 619h1v1h-1z"/><path class="c" fill="#00FFFF" d="M435 619h1v1h-1z"/><path class="c" fill="#000" d="M436 619h2v1h-2z"/><path class="c" fill="#00FFFF" d="M438 619h1v1h-1z"/><path class="c" fill="#000" d="M439 619h1v1h-1zM413 620h1v1h-1z"/><path class="c" fill="#00FFFF" d="M414 620h2v1h-2z"/><path class="c" fill="#000" d="M416 620h3v1h-3z"/><path class="c" fill="#00FFFF" d="M419 620h15v1h-15z"/><path class="c" fill="#000" d="M434 620h3v1h-3z"/><path class="c" fill="#00FFFF" d="M437 620h2v1h-2z"/><path class="c" fill="#000" d="M439 620h1v1h-1zM413 621h1v1h-1z"/><path class="c" fill="#00FFFF" d="M414 621h3v1h-3z"/><path class="c" fill="#000" d="M417 621h3v1h-3z"/><path class="c" fill="#00FFFF" d="M420 621h13v1h-13z"/><path class="c" fill="#000" d="M433 621h3v1h-3z"/><path class="c" fill="#00FFFF" d="M436 621h3v1h-3z"/><path class="c" fill="#000" d="M439 621h1v1h-1zM413 622h1v1h-1z"/><path class="c" fill="#00FFFF" d="M414 622h3v1h-3z"/><path class="c" fill="#000" d="M417 622h3v1h-3z"/><path class="c" fill="#00FFFF" d="M420 622h13v1h-13z"/><path class="c" fill="#000" d="M433 622h3v1h-3z"/><path class="c" fill="#00FFFF" d="M436 622h3v1h-3z"/><path class="c" fill="#000" d="M439 622h1v1h-1zM413 623h27v1h-27zM413 624h2v1h-2z"/><path class="c" fill="#00FFFF" d="M415 624h23v1h-23z"/><path class="c" fill="#000" d="M438 624h2v1h-2zM415 625h1v1h-1z"/><path class="c" fill="#00FFFF" d="M416 625h20v1h-20z"/><path class="c" fill="#000" d="M436 625h2v1h-2zM416 626h2v1h-2z"/><path class="c" fill="#00FFFF" d="M418 626h18v1h-18z"/><path class="c" fill="#000" d="M436 626h2v1h-2zM418 627h2v1h-2z"/><path class="c" fill="#00FFFF" d="M420 627h14v1h-14z"/><path class="c" fill="#000" d="M434 627h2v1h-2zM419 628h15v1h-15z"/><path class="c" fill="#fff" d="M427 630h1v24h-1z"/><path class="c" fill="#00FFFF" d="M423 658h10v1h-10zM435 658h10v1h-10zM447 658h8v1h-8zM421 661h5v1h-5zM428 661h10v1h-10zM440 661h10v1h-10zM452 661h3v1h-3zM421 655h1v1h-1zM422 655h1v1h-1zM420 656h1v1h-1zM422 656h1v1h-1zM423 656h1v1h-1zM420 657h1v1h-1zM423 657h1v1h-1zM423 658h1v1h-1zM424 658h1v1h-1zM424 659h1v1h-1zM424 660h1v1h-1zM425 660h1v1h-1zM425 661h1v1h-1zM425 662h1v1h-1zM426 662h1v1h-1zM429 662h1v1h-1zM430 662h1v1h-1zM426 663h1v1h-1zM428 663h1v1h-1zM426 664h1v1h-1zM427 664h1v1h-1zM433 655h1v1h-1zM434 655h1v1h-1zM432 656h1v1h-1zM434 656h1v1h-1zM435 656h1v1h-1zM432 657h1v1h-1zM435 657h1v1h-1zM435 658h1v1h-1zM436 658h1v1h-1zM436 659h1v1h-1zM436 660h1v1h-1zM437 660h1v1h-1zM437 661h1v1h-1zM437 662h1v1h-1zM438 662h1v1h-1zM441 662h1v1h-1zM442 662h1v1h-1zM438 663h1v1h-1zM440 663h1v1h-1zM438 664h1v1h-1zM439 664h1v1h-1zM445 655h1v1h-1zM446 655h1v1h-1zM444 656h1v1h-1zM446 656h1v1h-1zM447 656h1v1h-1zM444 657h1v1h-1zM447 657h1v1h-1zM447 658h1v1h-1zM448 658h1v1h-1zM448 659h1v1h-1zM448 660h1v1h-1zM449 660h1v1h-1zM449 661h1v1h-1zM449 662h1v1h-1zM450 662h1v1h-1zM453 662h1v1h-1zM454 662h1v1h-1zM450 663h1v1h-1zM452 663h1v1h-1zM450 664h1v1h-1zM451 664h1v1h-1zM455 655h1v9h-1z"/><path class="c" fill="#000" d="M419 657h3v1h-3zM418 658h1v1h-1z"/><path class="c" fill="#00FFFF" d="M419 658h3v1h-3z"/><path class="c" fill="#000" d="M422 658h1v1h-1zM417 659h1v1h-1z"/><path class="c" fill="#00FFFF" d="M418 659h5v1h-5z"/><path class="c" fill="#000" d="M423 659h1v1h-1zM417 660h1v1h-1z"/><path class="c" fill="#00FFFF" d="M418 660h5v1h-5z"/><path class="c" fill="#000" d="M423 660h1v1h-1zM417 661h1v1h-1z"/><path class="c" fill="#00FFFF" d="M418 661h5v1h-5z"/><path class="c" fill="#000" d="M423 661h1v1h-1zM418 662h1v1h-1z"/><path class="c" fill="#00FFFF" d="M419 662h3v1h-3z"/><path class="c" fill="#000" d="M422 662h1v1h-1zM419 663h3v1h-3zM424 654h7v5h-7z"/><path class="c" fill="#00FFFF" d="M425 655h5v3h-5z"/><path class="c" fill="#fff" d="M453 666h1v25h-1z"/><path class="c" fill="#000" d="M457 616h27v1h-27zM457 617h1v1h-1z"/><path class="c" fill="#00FFFF" d="M458 617h25v1h-25z"/><path class="c" fill="#000" d="M483 617h2v1h-2zM457 618h28v1h-28zM457 619h1v1h-1z"/><path class="c" fill="#00FFFF" d="M458 619h1v1h-1z"/><path class="c" fill="#000" d="M459 619h2v1h-2z"/><path class="c" fill="#00FFFF" d="M461 619h1v1h-1z"/><path class="c" fill="#000" d="M462 619h1v1h-1z"/><path class="c" fill="#00FFFF" d="M463 619h15v1h-15z"/><path class="c" fill="#000" d="M478 619h1v1h-1z"/><path class="c" fill="#00FFFF" d="M479 619h1v1h-1z"/><path class="c" fill="#000" d="M480 619h2v1h-2z"/><path class="c" fill="#00FFFF" d="M482 619h1v1h-1z"/><path class="c" fill="#000" d="M483 619h1v1h-1zM457 620h1v1h-1z"/><path class="c" fill="#00FFFF" d="M458 620h2v1h-2z"/><path class="c" fill="#000" d="M460 620h3v1h-3z"/><path class="c" fill="#00FFFF" d="M463 620h15v1h-15z"/><path class="c" fill="#000" d="M478 620h3v1h-3z"/><path class="c" fill="#00FFFF" d="M481 620h2v1h-2z"/><path class="c" fill="#000" d="M483 620h1v1h-1zM457 621h1v1h-1z"/><path class="c" fill="#00FFFF" d="M458 621h3v1h-3z"/><path class="c" fill="#000" d="M461 621h3v1h-3z"/><path class="c" fill="#00FFFF" d="M464 621h13v1h-13z"/><path class="c" fill="#000" d="M477 621h3v1h-3z"/><path class="c" fill="#00FFFF" d="M480 621h3v1h-3z"/><path class="c" fill="#000" d="M483 621h1v1h-1zM457 622h1v1h-1z"/><path class="c" fill="#00FFFF" d="M458 622h3v1h-3z"/><path class="c" fill="#000" d="M461 622h3v1h-3z"/><path class="c" fill="#00FFFF" d="M464 622h13v1h-13z"/><path class="c" fill="#000" d="M477 622h3v1h-3z"/><path class="c" fill="#00FFFF" d="M480 622h3v1h-3z"/><path class="c" fill="#000" d="M483 622h1v1h-1zM457 623h27v1h-27zM457 624h2v1h-2z"/><path class="c" fill="#00FFFF" d="M459 624h23v1h-23z"/><path class="c" fill="#000" d="M482 624h2v1h-2zM459 625h1v1h-1z"/><path class="c" fill="#00FFFF" d="M460 625h20v1h-20z"/><path class="c" fill="#000" d="M480 625h2v1h-2zM460 626h2v1h-2z"/><path class="c" fill="#00FFFF" d="M462 626h18v1h-18z"/><path class="c" fill="#000" d="M480 626h2v1h-2zM462 627h2v1h-2z"/><path class="c" fill="#00FFFF" d="M464 627h14v1h-14z"/><path class="c" fill="#000" d="M478 627h2v1h-2zM463 628h15v1h-15z"/><path class="c" fill="#fff" d="M471 630h1v24h-1z"/><path class="c" fill="#00FFFF" d="M467 658h10v1h-10zM479 658h10v1h-10zM491 658h8v1h-8zM465 661h5v1h-5zM472 661h10v1h-10zM484 661h10v1h-10zM496 661h3v1h-3zM465 655h1v1h-1zM466 655h1v1h-1zM464 656h1v1h-1zM466 656h1v1h-1zM467 656h1v1h-1zM464 657h1v1h-1zM467 657h1v1h-1zM467 658h1v1h-1zM468 658h1v1h-1zM468 659h1v1h-1zM468 660h1v1h-1zM469 660h1v1h-1zM469 661h1v1h-1zM469 662h1v1h-1zM470 662h1v1h-1zM473 662h1v1h-1zM474 662h1v1h-1zM470 663h1v1h-1zM472 663h1v1h-1zM470 664h1v1h-1zM471 664h1v1h-1zM477 655h1v1h-1zM478 655h1v1h-1zM476 656h1v1h-1zM478 656h1v1h-1zM479 656h1v1h-1zM476 657h1v1h-1zM479 657h1v1h-1zM479 658h1v1h-1zM480 658h1v1h-1zM480 659h1v1h-1zM480 660h1v1h-1zM481 660h1v1h-1zM481 661h1v1h-1zM481 662h1v1h-1zM482 662h1v1h-1zM485 662h1v1h-1zM486 662h1v1h-1zM482 663h1v1h-1zM484 663h1v1h-1zM482 664h1v1h-1zM483 664h1v1h-1zM489 655h1v1h-1zM490 655h1v1h-1zM488 656h1v1h-1zM490 656h1v1h-1zM491 656h1v1h-1zM488 657h1v1h-1zM491 657h1v1h-1zM491 658h1v1h-1zM492 658h1v1h-1zM492 659h1v1h-1zM492 660h1v1h-1zM493 660h1v1h-1zM493 661h1v1h-1zM493 662h1v1h-1zM494 662h1v1h-1zM497 662h1v1h-1zM498 662h1v1h-1zM494 663h1v1h-1zM496 663h1v1h-1zM494 664h1v1h-1zM495 664h1v1h-1zM499 655h1v9h-1z"/><path class="c" fill="#000" d="M463 657h3v1h-3zM462 658h1v1h-1z"/><path class="c" fill="#00FFFF" d="M463 658h3v1h-3z"/><path class="c" fill="#000" d="M466 658h1v1h-1zM461 659h1v1h-1z"/><path class="c" fill="#00FFFF" d="M462 659h5v1h-5z"/><path class="c" fill="#000" d="M467 659h1v1h-1zM461 660h1v1h-1z"/><path class="c" fill="#00FFFF" d="M462 660h5v1h-5z"/><path class="c" fill="#000" d="M467 660h1v1h-1zM461 661h1v1h-1z"/><path class="c" fill="#00FFFF" d="M462 661h5v1h-5z"/><path class="c" fill="#000" d="M467 661h1v1h-1zM462 662h1v1h-1z"/><path class="c" fill="#00FFFF" d="M463 662h3v1h-3z"/><path class="c" fill="#000" d="M466 662h1v1h-1zM463 663h3v1h-3zM468 654h7v5h-7z"/><path class="c" fill="#00FFFF" d="M469 655h5v3h-5z"/><path class="c" fill="#fff" d="M497 666h1v25h-1z"/><text x="109" y="210" font-size="12.9" fill="#fff" style="font-weight:bold;" text-anchor="start" textLength="23" lengthAdjust="spacingAndGlyphs" filter="url(#crisp)" >511</text><text x="97" y="245" font-size="12.9" fill="#fff" style="font-weight:bold;" text-anchor="start" textLength="23" lengthAdjust="spacingAndGlyphs" filter="url(#crisp)" >512</text><text x="153" y="210" font-size="12.9" fill="#fff" style="font-weight:bold;" text-anchor="start" textLength="23" lengthAdjust="spacingAndGlyphs" filter="url(#crisp)" >513</text><text x="141" y="245" font-size="12.9" fill="#fff" style="font-weight:bold;" text-anchor="start" textLength="23" lengthAdjust="spacingAndGlyphs" filter="url(#crisp)" >514</text><text x="202" y="210" font-size="12.9" fill="#fff" style="font-weight:bold;" text-anchor="start" textLength="23" lengthAdjust="spacingAndGlyphs" filter="url(#crisp)" >515</text><text x="190" y="245" font-size="12.9" fill="#fff" style="font-weight:bold;" text-anchor="start" textLength="23" lengthAdjust="spacingAndGlyphs" filter="url(#crisp)" >516</text><text x="246" y="210" font-size="12.9" fill="#fff" style="font-weight:bold;" text-anchor="start" textLength="23" lengthAdjust="spacingAndGlyphs" filter="url(#crisp)" >517</text><text x="234" y="245" font-size="12.9" fill="#fff" style="font-weight:bold;" text-anchor="start" textLength="23" lengthAdjust="spacingAndGlyphs" filter="url(#crisp)" >518</text><text x="294" y="210" font-size="12.9" fill="#fff" style="font-weight:bold;" text-anchor="start" textLength="23" lengthAdjust="spacingAndGlyphs" filter="url(#crisp)" >519</text><text x="282" y="245" font-size="12.9" fill="#fff" style="font-weight:bold;" text-anchor="start" textLength="23" lengthAdjust="spacingAndGlyphs" filter="url(#crisp)" >520</text><text x="338" y="210" font-size="12.9" fill="#fff" style="font-weight:bold;" text-anchor="start" textLength="23" lengthAdjust="spacingAndGlyphs" filter="url(#crisp)" >521</text><text x="326" y="245" font-size="12.9" fill="#fff" style="font-weight:bold;" text-anchor="start" textLength="23" lengthAdjust="spacingAndGlyphs" filter="url(#crisp)" >522</text><text x="386" y="210" font-size="12.9" fill="#fff" style="font-weight:bold;" text-anchor="start" textLength="23" lengthAdjust="spacingAndGlyphs" filter="url(#crisp)" >523</text><text x="374" y="245" font-size="12.9" fill="#fff" style="font-weight:bold;" text-anchor="start" textLength="23" lengthAdjust="spacingAndGlyphs" filter="url(#crisp)" >524</text><text x="434" y="210" font-size="12.9" fill="#fff" style="font-weight:bold;" text-anchor="start" textLength="23" lengthAdjust="spacingAndGlyphs" filter="url(#crisp)" >525</text><text x="422" y="245" font-size="12.9" fill="#fff" style="font-weight:bold;" text-anchor="start" textLength="23" lengthAdjust="spacingAndGlyphs" filter="url(#crisp)" >526</text><text x="478" y="210" font-size="12.9" fill="#fff" style="font-weight:bold;" text-anchor="start" textLength="23" lengthAdjust="spacingAndGlyphs" filter="url(#crisp)" >527</text><text x="466" y="245" font-size="12.9" fill="#fff" style="font-weight:bold;" text-anchor="start" textLength="23" lengthAdjust="spacingAndGlyphs" filter="url(#crisp)" >528</text><text x="109" y="418" font-size="12.9" fill="#fff" style="font-weight:bold;" text-anchor="start" textLength="23" lengthAdjust="spacingAndGlyphs" filter="url(#crisp)" >530</text><text x="97" y="453" font-size="12.9" fill="#fff" style="font-weight:bold;" text-anchor="start" textLength="23" lengthAdjust="spacingAndGlyphs" filter="url(#crisp)" >531</text><text x="153" y="418" font-size="12.9" fill="#fff" style="font-weight:bold;" text-anchor="start" textLength="23" lengthAdjust="spacingAndGlyphs" filter="url(#crisp)" >532</text><text x="141" y="453" font-size="12.9" fill="#fff" style="font-weight:bold;" text-anchor="start" textLength="23" lengthAdjust="spacingAndGlyphs" filter="url(#crisp)" >533</text><text x="202" y="418" font-size="12.9" fill="#fff" style="font-weight:bold;" text-anchor="start" textLength="23" lengthAdjust="spacingAndGlyphs" filter="url(#crisp)" >534</text><text x="190" y="453" font-size="12.9" fill="#fff" style="font-weight:bold;" text-anchor="start" textLength="23" lengthAdjust="spacingAndGlyphs" filter="url(#crisp)" >535</text><text x="246" y="418" font-size="12.9" fill="#fff" style="font-weight:bold;" text-anchor="start" textLength="23" lengthAdjust="spacingAndGlyphs" filter="url(#crisp)" >536</text><text x="234" y="453" font-size="12.9" fill="#fff" style="font-weight:bold;" text-anchor="start" textLength="23" lengthAdjust="spacingAndGlyphs" filter="url(#crisp)" >537</text><text x="294" y="418" font-size="12.9" fill="#fff" style="font-weight:bold;" text-anchor="start" textLength="23" lengthAdjust="spacingAndGlyphs" filter="url(#crisp)" >538</text><text x="282" y="453" font-size="12.9" fill="#fff" style="font-weight:bold;" text-anchor="start" textLength="23" lengthAdjust="spacingAndGlyphs" filter="url(#crisp)" >539</text><text x="338" y="418" font-size="12.9" fill="#fff" style="font-weight:bold;" text-anchor="start" textLength="23" lengthAdjust="spacingAndGlyphs" filter="url(#crisp)" >540</text><text x="326" y="453" font-size="12.9" fill="#fff" style="font-weight:bold;" text-anchor="start" textLength="23" lengthAdjust="spacingAndGlyphs" filter="url(#crisp)" >541</text><text x="386" y="418" font-size="12.9" fill="#fff" style="font-weight:bold;" text-anchor="start" textLength="23" lengthAdjust="spacingAndGlyphs" filter="url(#crisp)" >542</text><text x="374" y="453" font-size="12.9" fill="#fff" style="font-weight:bold;" text-anchor="start" textLength="23" lengthAdjust="spacingAndGlyphs" filter="url(#crisp)" >543</text><text x="434" y="418" font-size="12.9" fill="#fff" style="font-weight:bold;" text-anchor="start" textLength="23" lengthAdjust="spacingAndGlyphs" filter="url(#crisp)" >544</text><text x="422" y="453" font-size="12.9" fill="#fff" style="font-weight:bold;" text-anchor="start" textLength="23" lengthAdjust="spacingAndGlyphs" filter="url(#crisp)" >545</text><text x="478" y="418" font-size="12.9" fill="#fff" style="font-weight:bold;" text-anchor="start" textLength="23" lengthAdjust="spacingAndGlyphs" filter="url(#crisp)" >546</text><text x="466" y="453" font-size="12.9" fill="#fff" style="font-weight:bold;" text-anchor="start" textLength="23" lengthAdjust="spacingAndGlyphs" filter="url(#crisp)" >547</text><text x="109" y="646" font-size="12.9" fill="#fff" style="font-weight:bold;" text-anchor="start" textLength="23" lengthAdjust="spacingAndGlyphs" filter="url(#crisp)" >549</text><text x="97" y="681" font-size="12.9" fill="#fff" style="font-weight:bold;" text-anchor="start" textLength="23" lengthAdjust="spacingAndGlyphs" filter="url(#crisp)" >550</text><text x="153" y="646" font-size="12.9" fill="#fff" style="font-weight:bold;" text-anchor="start" textLength="23" lengthAdjust="spacingAndGlyphs" filter="url(#crisp)" >551</text><text x="141" y="681" font-size="12.9" fill="#fff" style="font-weight:bold;" text-anchor="start" textLength="23" lengthAdjust="spacingAndGlyphs" filter="url(#crisp)" >552</text><text x="202" y="646" font-size="12.9" fill="#fff" style="font-weight:bold;" text-anchor="start" textLength="23" lengthAdjust="spacingAndGlyphs" filter="url(#crisp)" >553</text><text x="190" y="681" font-size="12.9" fill="#fff" style="font-weight:bold;" text-anchor="start" textLength="23" lengthAdjust="spacingAndGlyphs" filter="url(#crisp)" >554</text><text x="246" y="646" font-size="12.9" fill="#fff" style="font-weight:bold;" text-anchor="start" textLength="23" lengthAdjust="spacingAndGlyphs" filter="url(#crisp)" >555</text><text x="234" y="681" font-size="12.9" fill="#fff" style="font-weight:bold;" text-anchor="start" textLength="23" lengthAdjust="spacingAndGlyphs" filter="url(#crisp)" >556</text><text x="294" y="646" font-size="12.9" fill="#fff" style="font-weight:bold;" text-anchor="start" textLength="23" lengthAdjust="spacingAndGlyphs" filter="url(#crisp)" >557</text><text x="282" y="681" font-size="12.9" fill="#fff" style="font-weight:bold;" text-anchor="start" textLength="23" lengthAdjust="spacingAndGlyphs" filter="url(#crisp)" >558</text><text x="338" y="646" font-size="12.9" fill="#fff" style="font-weight:bold;" text-anchor="start" textLength="23" lengthAdjust="spacingAndGlyphs" filter="url(#crisp)" >559</text><text x="326" y="681" font-size="12.9" fill="#fff" style="font-weight:bold;" text-anchor="start" textLength="23" lengthAdjust="spacingAndGlyphs" filter="url(#crisp)" >560</text><text x="386" y="646" font-size="12.9" fill="#fff" style="font-weight:bold;" text-anchor="start" textLength="23" lengthAdjust="spacingAndGlyphs" filter="url(#crisp)" >561</text><text x="374" y="681" font-size="12.9" fill="#fff" style="font-weight:bold;" text-anchor="start" textLength="23" lengthAdjust="spacingAndGlyphs" filter="url(#crisp)" >562</text><text x="434" y="646" font-size="12.9" fill="#fff" style="font-weight:bold;" text-anchor="start" textLength="23" lengthAdjust="spacingAndGlyphs" filter="url(#crisp)" >563</text><text x="422" y="681" font-size="12.9" fill="#fff" style="font-weight:bold;" text-anchor="start" textLength="23" lengthAdjust="spacingAndGlyphs" filter="url(#crisp)" >564</text><text x="478" y="646" font-size="12.9" fill="#fff" style="font-weight:bold;" text-anchor="start" textLength="23" lengthAdjust="spacingAndGlyphs" filter="url(#crisp)" >565</text><text x="466" y="681" font-size="12.9" fill="#fff" style="font-weight:bold;" text-anchor="start" textLength="23" lengthAdjust="spacingAndGlyphs" filter="url(#crisp)" >566</text><path class="c" fill="#00FFFF" d="M129 258h3v1h-3zM134 258h10v1h-10zM146 258h10v1h-10zM158 258h10v1h-10zM170 258h10v1h-10zM182 258h10v1h-10zM194 258h10v1h-10zM206 258h10v1h-10zM218 258h10v1h-10zM230 258h10v1h-10zM242 258h10v1h-10zM254 258h10v1h-10zM266 258h10v1h-10zM278 258h10v1h-10zM290 258h10v1h-10zM302 258h10v1h-10zM314 258h10v1h-10zM326 258h10v1h-10zM338 258h10v1h-10zM350 258h10v1h-10zM362 258h10v1h-10zM374 258h10v1h-10zM386 258h10v1h-10zM398 258h12v1h-12zM129 261h8v1h-8zM139 261h10v1h-10zM151 261h10v1h-10zM163 261h10v1h-10zM175 261h10v1h-10zM187 261h10v1h-10zM199 261h10v1h-10zM211 261h10v1h-10zM223 261h10v1h-10zM235 261h10v1h-10zM247 261h10v1h-10zM259 261h10v1h-10zM271 261h10v1h-10zM283 261h10v1h-10zM295 261h10v1h-10zM307 261h10v1h-10zM319 261h10v1h-10zM331 261h10v1h-10zM343 261h10v1h-10zM355 261h10v1h-10zM367 261h10v1h-10zM379 261h10v1h-10zM391 261h10v1h-10zM403 261h7v1h-7zM132 255h1v1h-1zM133 255h1v1h-1zM131 256h1v1h-1zM133 256h1v1h-1zM134 256h1v1h-1zM131 257h1v1h-1zM134 257h1v1h-1zM134 258h1v1h-1zM135 258h1v1h-1zM135 259h1v1h-1zM135 260h1v1h-1zM136 260h1v1h-1zM136 261h1v1h-1zM136 262h1v1h-1zM137 262h1v1h-1zM140 262h1v1h-1zM141 262h1v1h-1zM137 263h1v1h-1zM139 263h1v1h-1zM137 264h1v1h-1zM138 264h1v1h-1zM144 255h1v1h-1zM145 255h1v1h-1zM143 256h1v1h-1zM145 256h1v1h-1zM146 256h1v1h-1zM143 257h1v1h-1zM146 257h1v1h-1zM146 258h1v1h-1zM147 258h1v1h-1zM147 259h1v1h-1zM147 260h1v1h-1zM148 260h1v1h-1zM148 261h1v1h-1zM148 262h1v1h-1zM149 262h1v1h-1zM152 262h1v1h-1zM153 262h1v1h-1zM149 263h1v1h-1zM151 263h1v1h-1zM149 264h1v1h-1zM150 264h1v1h-1zM156 255h1v1h-1zM157 255h1v1h-1zM155 256h1v1h-1zM157 256h1v1h-1zM158 256h1v1h-1zM155 257h1v1h-1zM158 257h1v1h-1zM158 258h1v1h-1zM159 258h1v1h-1zM159 259h1v1h-1zM159 260h1v1h-1zM160 260h1v1h-1zM160 261h1v1h-1zM160 262h1v1h-1zM161 262h1v1h-1zM164 262h1v1h-1zM165 262h1v1h-1zM161 263h1v1h-1zM163 263h1v1h-1zM161 264h1v1h-1zM162 264h1v1h-1zM168 255h1v1h-1zM169 255h1v1h-1zM167 256h1v1h-1zM169 256h1v1h-1zM170 256h1v1h-1zM167 257h1v1h-1zM170 257h1v1h-1zM170 258h1v1h-1zM171 258h1v1h-1zM171 259h1v1h-1zM171 260h1v1h-1zM172 260h1v1h-1zM172 261h1v1h-1zM172 262h1v1h-1zM173 262h1v1h-1zM176 262h1v1h-1zM177 262h1v1h-1zM173 263h1v1h-1zM175 263h1v1h-1zM173 264h1v1h-1zM174 264h1v1h-1zM180 255h1v1h-1zM181 255h1v1h-1zM179 256h1v1h-1zM181 256h1v1h-1zM182 256h1v1h-1zM179 257h1v1h-1zM182 257h1v1h-1zM182 258h1v1h-1zM183 258h1v1h-1zM183 259h1v1h-1zM183 260h1v1h-1zM184 260h1v1h-1zM184 261h1v1h-1zM184 262h1v1h-1zM185 262h1v1h-1zM188 262h1v1h-1zM189 262h1v1h-1zM185 263h1v1h-1zM187 263h1v1h-1zM185 264h1v1h-1zM186 264h1v1h-1zM192 255h1v1h-1zM193 255h1v1h-1zM191 256h1v1h-1zM193 256h1v1h-1zM194 256h1v1h-1zM191 257h1v1h-1zM194 257h1v1h-1zM194 258h1v1h-1zM195 258h1v1h-1zM195 259h1v1h-1zM195 260h1v1h-1zM196 260h1v1h-1zM196 261h1v1h-1zM196 262h1v1h-1zM197 262h1v1h-1zM200 262h1v1h-1zM201 262h1v1h-1zM197 263h1v1h-1zM199 263h1v1h-1zM197 264h1v1h-1zM198 264h1v1h-1zM204 255h1v1h-1zM205 255h1v1h-1zM203 256h1v1h-1zM205 256h1v1h-1zM206 256h1v1h-1zM203 257h1v1h-1zM206 257h1v1h-1zM206 258h1v1h-1zM207 258h1v1h-1zM207 259h1v1h-1zM207 260h1v1h-1zM208 260h1v1h-1zM208 261h1v1h-1zM208 262h1v1h-1zM209 262h1v1h-1zM212 262h1v1h-1zM213 262h1v1h-1zM209 263h1v1h-1zM211 263h1v1h-1zM209 264h1v1h-1zM210 264h1v1h-1zM216 255h1v1h-1zM217 255h1v1h-1zM215 256h1v1h-1zM217 256h1v1h-1zM218 256h1v1h-1zM215 257h1v1h-1zM218 257h1v1h-1zM218 258h1v1h-1zM219 258h1v1h-1zM219 259h1v1h-1zM219 260h1v1h-1zM220 260h1v1h-1zM220 261h1v1h-1zM220 262h1v1h-1zM221 262h1v1h-1zM224 262h1v1h-1zM225 262h1v1h-1zM221 263h1v1h-1zM223 263h1v1h-1zM221 264h1v1h-1zM222 264h1v1h-1zM228 255h1v1h-1zM229 255h1v1h-1zM227 256h1v1h-1zM229 256h1v1h-1zM230 256h1v1h-1zM227 257h1v1h-1zM230 257h1v1h-1zM230 258h1v1h-1zM231 258h1v1h-1zM231 259h1v1h-1zM231 260h1v1h-1zM232 260h1v1h-1zM232 261h1v1h-1zM232 262h1v1h-1zM233 262h1v1h-1zM236 262h1v1h-1zM237 262h1v1h-1zM233 263h1v1h-1zM235 263h1v1h-1zM233 264h1v1h-1zM234 264h1v1h-1zM240 255h1v1h-1zM241 255h1v1h-1zM239 256h1v1h-1zM241 256h1v1h-1zM242 256h1v1h-1zM239 257h1v1h-1zM242 257h1v1h-1zM242 258h1v1h-1zM243 258h1v1h-1zM243 259h1v1h-1zM243 260h1v1h-1zM244 260h1v1h-1zM244 261h1v1h-1zM244 262h1v1h-1zM245 262h1v1h-1zM248 262h1v1h-1zM249 262h1v1h-1zM245 263h1v1h-1zM247 263h1v1h-1zM245 264h1v1h-1zM246 264h1v1h-1zM252 255h1v1h-1zM253 255h1v1h-1zM251 256h1v1h-1zM253 256h1v1h-1zM254 256h1v1h-1zM251 257h1v1h-1zM254 257h1v1h-1zM254 258h1v1h-1zM255 258h1v1h-1zM255 259h1v1h-1zM255 260h1v1h-1zM256 260h1v1h-1zM256 261h1v1h-1zM256 262h1v1h-1zM257 262h1v1h-1zM260 262h1v1h-1zM261 262h1v1h-1zM257 263h1v1h-1zM259 263h1v1h-1zM257 264h1v1h-1zM258 264h1v1h-1zM264 255h1v1h-1zM265 255h1v1h-1zM263 256h1v1h-1zM265 256h1v1h-1zM266 256h1v1h-1zM263 257h1v1h-1zM266 257h1v1h-1zM266 258h1v1h-1zM267 258h1v1h-1zM267 259h1v1h-1zM267 260h1v1h-1zM268 260h1v1h-1zM268 261h1v1h-1zM268 262h1v1h-1zM269 262h1v1h-1zM272 262h1v1h-1zM273 262h1v1h-1zM269 263h1v1h-1zM271 263h1v1h-1zM269 264h1v1h-1zM270 264h1v1h-1zM276 255h1v1h-1zM277 255h1v1h-1zM275 256h1v1h-1zM277 256h1v1h-1zM278 256h1v1h-1zM275 257h1v1h-1zM278 257h1v1h-1zM278 258h1v1h-1zM279 258h1v1h-1zM279 259h1v1h-1zM279 260h1v1h-1zM280 260h1v1h-1zM280 261h1v1h-1zM280 262h1v1h-1zM281 262h1v1h-1zM284 262h1v1h-1zM285 262h1v1h-1zM281 263h1v1h-1zM283 263h1v1h-1zM281 264h1v1h-1zM282 264h1v1h-1zM288 255h1v1h-1zM289 255h1v1h-1zM287 256h1v1h-1zM289 256h1v1h-1zM290 256h1v1h-1zM287 257h1v1h-1zM290 257h1v1h-1zM290 258h1v1h-1zM291 258h1v1h-1zM291 259h1v1h-1zM291 260h1v1h-1zM292 260h1v1h-1zM292 261h1v1h-1zM292 262h1v1h-1zM293 262h1v1h-1zM296 262h1v1h-1zM297 262h1v1h-1zM293 263h1v1h-1zM295 263h1v1h-1zM293 264h1v1h-1zM294 264h1v1h-1zM300 255h1v1h-1zM301 255h1v1h-1zM299 256h1v1h-1zM301 256h1v1h-1zM302 256h1v1h-1zM299 257h1v1h-1zM302 257h1v1h-1zM302 258h1v1h-1zM303 258h1v1h-1zM303 259h1v1h-1zM303 260h1v1h-1zM304 260h1v1h-1zM304 261h1v1h-1zM304 262h1v1h-1zM305 262h1v1h-1zM308 262h1v1h-1zM309 262h1v1h-1zM305 263h1v1h-1zM307 263h1v1h-1zM305 264h1v1h-1zM306 264h1v1h-1zM312 255h1v1h-1zM313 255h1v1h-1zM311 256h1v1h-1zM313 256h1v1h-1zM314 256h1v1h-1zM311 257h1v1h-1zM314 257h1v1h-1zM314 258h1v1h-1zM315 258h1v1h-1zM315 259h1v1h-1zM315 260h1v1h-1zM316 260h1v1h-1zM316 261h1v1h-1zM316 262h1v1h-1zM317 262h1v1h-1zM320 262h1v1h-1zM321 262h1v1h-1zM317 263h1v1h-1zM319 263h1v1h-1zM317 264h1v1h-1zM318 264h1v1h-1zM324 255h1v1h-1zM325 255h1v1h-1zM323 256h1v1h-1zM325 256h1v1h-1zM326 256h1v1h-1zM323 257h1v1h-1zM326 257h1v1h-1zM326 258h1v1h-1zM327 258h1v1h-1zM327 259h1v1h-1zM327 260h1v1h-1zM328 260h1v1h-1zM328 261h1v1h-1zM328 262h1v1h-1zM329 262h1v1h-1zM332 262h1v1h-1zM333 262h1v1h-1zM329 263h1v1h-1zM331 263h1v1h-1zM329 264h1v1h-1zM330 264h1v1h-1zM336 255h1v1h-1zM337 255h1v1h-1zM335 256h1v1h-1zM337 256h1v1h-1zM338 256h1v1h-1zM335 257h1v1h-1zM338 257h1v1h-1zM338 258h1v1h-1zM339 258h1v1h-1zM339 259h1v1h-1zM339 260h1v1h-1zM340 260h1v1h-1zM340 261h1v1h-1zM340 262h1v1h-1zM341 262h1v1h-1zM344 262h1v1h-1zM345 262h1v1h-1zM341 263h1v1h-1zM343 263h1v1h-1zM341 264h1v1h-1zM342 264h1v1h-1zM348 255h1v1h-1zM349 255h1v1h-1zM347 256h1v1h-1zM349 256h1v1h-1zM350 256h1v1h-1zM347 257h1v1h-1zM350 257h1v1h-1zM350 258h1v1h-1zM351 258h1v1h-1zM351 259h1v1h-1zM351 260h1v1h-1zM352 260h1v1h-1zM352 261h1v1h-1zM352 262h1v1h-1zM353 262h1v1h-1zM356 262h1v1h-1zM357 262h1v1h-1zM353 263h1v1h-1zM355 263h1v1h-1zM353 264h1v1h-1zM354 264h1v1h-1zM360 255h1v1h-1zM361 255h1v1h-1zM359 256h1v1h-1zM361 256h1v1h-1zM362 256h1v1h-1zM359 257h1v1h-1zM362 257h1v1h-1zM362 258h1v1h-1zM363 258h1v1h-1zM363 259h1v1h-1zM363 260h1v1h-1zM364 260h1v1h-1zM364 261h1v1h-1zM364 262h1v1h-1zM365 262h1v1h-1zM368 262h1v1h-1zM369 262h1v1h-1zM365 263h1v1h-1zM367 263h1v1h-1zM365 264h1v1h-1zM366 264h1v1h-1zM372 255h1v1h-1zM373 255h1v1h-1zM371 256h1v1h-1zM373 256h1v1h-1zM374 256h1v1h-1zM371 257h1v1h-1zM374 257h1v1h-1zM374 258h1v1h-1zM375 258h1v1h-1zM375 259h1v1h-1zM375 260h1v1h-1zM376 260h1v1h-1zM376 261h1v1h-1zM376 262h1v1h-1zM377 262h1v1h-1zM380 262h1v1h-1zM381 262h1v1h-1zM377 263h1v1h-1zM379 263h1v1h-1zM377 264h1v1h-1zM378 264h1v1h-1zM384 255h1v1h-1zM385 255h1v1h-1zM383 256h1v1h-1zM385 256h1v1h-1zM386 256h1v1h-1zM383 257h1v1h-1zM386 257h1v1h-1zM386 258h1v1h-1zM387 258h1v1h-1zM387 259h1v1h-1zM387 260h1v1h-1zM388 260h1v1h-1zM388 261h1v1h-1zM388 262h1v1h-1zM389 262h1v1h-1zM392 262h1v1h-1zM393 262h1v1h-1zM389 263h1v1h-1zM391 263h1v1h-1zM389 264h1v1h-1zM390 264h1v1h-1zM396 255h1v1h-1zM397 255h1v1h-1zM395 256h1v1h-1zM397 256h1v1h-1zM398 256h1v1h-1zM395 257h1v1h-1zM398 257h1v1h-1zM398 258h1v1h-1zM399 258h1v1h-1zM399 259h1v1h-1zM399 260h1v1h-1zM400 260h1v1h-1zM400 261h1v1h-1zM400 262h1v1h-1zM401 262h1v1h-1zM404 262h1v1h-1zM405 262h1v1h-1zM401 263h1v1h-1zM403 263h1v1h-1zM401 264h1v1h-1zM402 264h1v1h-1zM121 255h1v9h-1zM122 260h2v1h-2zM410 255h1v9h-1z"/><path class="c" fill="#000" d="M126 257h3v1h-3zM125 258h1v1h-1z"/><path class="c" fill="#00FFFF" d="M126 258h3v1h-3z"/><path class="c" fill="#000" d="M129 258h1v1h-1zM124 259h1v1h-1z"/><path class="c" fill="#00FFFF" d="M125 259h5v1h-5z"/><path class="c" fill="#000" d="M130 259h1v1h-1zM124 260h1v1h-1z"/><path class="c" fill="#00FFFF" d="M125 260h5v1h-5z"/><path class="c" fill="#000" d="M130 260h1v1h-1zM124 261h1v1h-1z"/><path class="c" fill="#00FFFF" d="M125 261h5v1h-5z"/><path class="c" fill="#000" d="M130 261h1v1h-1zM125 262h1v1h-1z"/><path class="c" fill="#00FFFF" d="M126 262h3v1h-3z"/><path class="c" fill="#000" d="M129 262h1v1h-1zM126 263h3v1h-3zM401 254h7v5h-7z"/><path class="c" fill="#00FFFF" d="M402 255h5v3h-5z"/><text x="90" y="268" font-size="12.9" fill="#fff" style="font-weight:bold;" text-anchor="start" textLength="23" lengthAdjust="spacingAndGlyphs" filter="url(#crisp)" >529</text><path class="c" fill="#00FFFF" d="M129 466h3v1h-3zM134 466h10v1h-10zM146 466h10v1h-10zM158 466h10v1h-10zM170 466h10v1h-10zM182 466h10v1h-10zM194 466h10v1h-10zM206 466h10v1h-10zM218 466h10v1h-10zM230 466h10v1h-10zM242 466h10v1h-10zM254 466h10v1h-10zM266 466h10v1h-10zM278 466h10v1h-10zM290 466h10v1h-10zM302 466h10v1h-10zM314 466h10v1h-10zM326 466h10v1h-10zM338 466h10v1h-10zM350 466h10v1h-10zM362 466h10v1h-10zM374 466h10v1h-10zM386 466h10v1h-10zM398 466h12v1h-12zM129 469h8v1h-8zM139 469h10v1h-10zM151 469h10v1h-10zM163 469h10v1h-10zM175 469h10v1h-10zM187 469h10v1h-10zM199 469h10v1h-10zM211 469h10v1h-10zM223 469h10v1h-10zM235 469h10v1h-10zM247 469h10v1h-10zM259 469h10v1h-10zM271 469h10v1h-10zM283 469h10v1h-10zM295 469h10v1h-10zM307 469h10v1h-10zM319 469h10v1h-10zM331 469h10v1h-10zM343 469h10v1h-10zM355 469h10v1h-10zM367 469h10v1h-10zM379 469h10v1h-10zM391 469h10v1h-10zM403 469h7v1h-7zM132 463h1v1h-1zM133 463h1v1h-1zM131 464h1v1h-1zM133 464h1v1h-1zM134 464h1v1h-1zM131 465h1v1h-1zM134 465h1v1h-1zM134 466h1v1h-1zM135 466h1v1h-1zM135 467h1v1h-1zM135 468h1v1h-1zM136 468h1v1h-1zM136 469h1v1h-1zM136 470h1v1h-1zM137 470h1v1h-1zM140 470h1v1h-1zM141 470h1v1h-1zM137 471h1v1h-1zM139 471h1v1h-1zM137 472h1v1h-1zM138 472h1v1h-1zM144 463h1v1h-1zM145 463h1v1h-1zM143 464h1v1h-1zM145 464h1v1h-1zM146 464h1v1h-1zM143 465h1v1h-1zM146 465h1v1h-1zM146 466h1v1h-1zM147 466h1v1h-1zM147 467h1v1h-1zM147 468h1v1h-1zM148 468h1v1h-1zM148 469h1v1h-1zM148 470h1v1h-1zM149 470h1v1h-1zM152 470h1v1h-1zM153 470h1v1h-1zM149 471h1v1h-1zM151 471h1v1h-1zM149 472h1v1h-1zM150 472h1v1h-1zM156 463h1v1h-1zM157 463h1v1h-1zM155 464h1v1h-1zM157 464h1v1h-1zM158 464h1v1h-1zM155 465h1v1h-1zM158 465h1v1h-1zM158 466h1v1h-1zM159 466h1v1h-1zM159 467h1v1h-1zM159 468h1v1h-1zM160 468h1v1h-1zM160 469h1v1h-1zM160 470h1v1h-1zM161 470h1v1h-1zM164 470h1v1h-1zM165 470h1v1h-1zM161 471h1v1h-1zM163 471h1v1h-1zM161 472h1v1h-1zM162 472h1v1h-1zM168 463h1v1h-1zM169 463h1v1h-1zM167 464h1v1h-1zM169 464h1v1h-1zM170 464h1v1h-1zM167 465h1v1h-1zM170 465h1v1h-1zM170 466h1v1h-1zM171 466h1v1h-1zM171 467h1v1h-1zM171 468h1v1h-1zM172 468h1v1h-1zM172 469h1v1h-1zM172 470h1v1h-1zM173 470h1v1h-1zM176 470h1v1h-1zM177 470h1v1h-1zM173 471h1v1h-1zM175 471h1v1h-1zM173 472h1v1h-1zM174 472h1v1h-1zM180 463h1v1h-1zM181 463h1v1h-1zM179 464h1v1h-1zM181 464h1v1h-1zM182 464h1v1h-1zM179 465h1v1h-1zM182 465h1v1h-1zM182 466h1v1h-1zM183 466h1v1h-1zM183 467h1v1h-1zM183 468h1v1h-1zM184 468h1v1h-1zM184 469h1v1h-1zM184 470h1v1h-1zM185 470h1v1h-1zM188 470h1v1h-1zM189 470h1v1h-1zM185 471h1v1h-1zM187 471h1v1h-1zM185 472h1v1h-1zM186 472h1v1h-1zM192 463h1v1h-1zM193 463h1v1h-1zM191 464h1v1h-1zM193 464h1v1h-1zM194 464h1v1h-1zM191 465h1v1h-1zM194 465h1v1h-1zM194 466h1v1h-1zM195 466h1v1h-1zM195 467h1v1h-1zM195 468h1v1h-1zM196 468h1v1h-1zM196 469h1v1h-1zM196 470h1v1h-1zM197 470h1v1h-1zM200 470h1v1h-1zM201 470h1v1h-1zM197 471h1v1h-1zM199 471h1v1h-1zM197 472h1v1h-1zM198 472h1v1h-1zM204 463h1v1h-1zM205 463h1v1h-1zM203 464h1v1h-1zM205 464h1v1h-1zM206 464h1v1h-1zM203 465h1v1h-1zM206 465h1v1h-1zM206 466h1v1h-1zM207 466h1v1h-1zM207 467h1v1h-1zM207 468h1v1h-1zM208 468h1v1h-1zM208 469h1v1h-1zM208 470h1v1h-1zM209 470h1v1h-1zM212 470h1v1h-1zM213 470h1v1h-1zM209 471h1v1h-1zM211 471h1v1h-1zM209 472h1v1h-1zM210 472h1v1h-1zM216 463h1v1h-1zM217 463h1v1h-1zM215 464h1v1h-1zM217 464h1v1h-1zM218 464h1v1h-1zM215 465h1v1h-1zM218 465h1v1h-1zM218 466h1v1h-1zM219 466h1v1h-1zM219 467h1v1h-1zM219 468h1v1h-1zM220 468h1v1h-1zM220 469h1v1h-1zM220 470h1v1h-1zM221 470h1v1h-1zM224 470h1v1h-1zM225 470h1v1h-1zM221 471h1v1h-1zM223 471h1v1h-1zM221 472h1v1h-1zM222 472h1v1h-1zM228 463h1v1h-1zM229 463h1v1h-1zM227 464h1v1h-1zM229 464h1v1h-1zM230 464h1v1h-1zM227 465h1v1h-1zM230 465h1v1h-1zM230 466h1v1h-1zM231 466h1v1h-1zM231 467h1v1h-1zM231 468h1v1h-1zM232 468h1v1h-1zM232 469h1v1h-1zM232 470h1v1h-1zM233 470h1v1h-1zM236 470h1v1h-1zM237 470h1v1h-1zM233 471h1v1h-1zM235 471h1v1h-1zM233 472h1v1h-1zM234 472h1v1h-1zM240 463h1v1h-1zM241 463h1v1h-1zM239 464h1v1h-1zM241 464h1v1h-1zM242 464h1v1h-1zM239 465h1v1h-1zM242 465h1v1h-1zM242 466h1v1h-1zM243 466h1v1h-1zM243 467h1v1h-1zM243 468h1v1h-1zM244 468h1v1h-1zM244 469h1v1h-1zM244 470h1v1h-1zM245 470h1v1h-1zM248 470h1v1h-1zM249 470h1v1h-1zM245 471h1v1h-1zM247 471h1v1h-1zM245 472h1v1h-1zM246 472h1v1h-1zM252 463h1v1h-1zM253 463h1v1h-1zM251 464h1v1h-1zM253 464h1v1h-1zM254 464h1v1h-1zM251 465h1v1h-1zM254 465h1v1h-1zM254 466h1v1h-1zM255 466h1v1h-1zM255 467h1v1h-1zM255 468h1v1h-1zM256 468h1v1h-1zM256 469h1v1h-1zM256 470h1v1h-1zM257 470h1v1h-1zM260 470h1v1h-1zM261 470h1v1h-1zM257 471h1v1h-1zM259 471h1v1h-1zM257 472h1v1h-1zM258 472h1v1h-1zM264 463h1v1h-1zM265 463h1v1h-1zM263 464h1v1h-1zM265 464h1v1h-1zM266 464h1v1h-1zM263 465h1v1h-1zM266 465h1v1h-1zM266 466h1v1h-1zM267 466h1v1h-1zM267 467h1v1h-1zM267 468h1v1h-1zM268 468h1v1h-1zM268 469h1v1h-1zM268 470h1v1h-1zM269 470h1v1h-1zM272 470h1v1h-1zM273 470h1v1h-1zM269 471h1v1h-1zM271 471h1v1h-1zM269 472h1v1h-1zM270 472h1v1h-1zM276 463h1v1h-1zM277 463h1v1h-1zM275 464h1v1h-1zM277 464h1v1h-1zM278 464h1v1h-1zM275 465h1v1h-1zM278 465h1v1h-1zM278 466h1v1h-1zM279 466h1v1h-1zM279 467h1v1h-1zM279 468h1v1h-1zM280 468h1v1h-1zM280 469h1v1h-1zM280 470h1v1h-1zM281 470h1v1h-1zM284 470h1v1h-1zM285 470h1v1h-1zM281 471h1v1h-1zM283 471h1v1h-1zM281 472h1v1h-1zM282 472h1v1h-1zM288 463h1v1h-1zM289 463h1v1h-1zM287 464h1v1h-1zM289 464h1v1h-1zM290 464h1v1h-1zM287 465h1v1h-1zM290 465h1v1h-1zM290 466h1v1h-1zM291 466h1v1h-1zM291 467h1v1h-1zM291 468h1v1h-1zM292 468h1v1h-1zM292 469h1v1h-1zM292 470h1v1h-1zM293 470h1v1h-1zM296 470h1v1h-1zM297 470h1v1h-1zM293 471h1v1h-1zM295 471h1v1h-1zM293 472h1v1h-1zM294 472h1v1h-1zM300 463h1v1h-1zM301 463h1v1h-1zM299 464h1v1h-1zM301 464h1v1h-1zM302 464h1v1h-1zM299 465h1v1h-1zM302 465h1v1h-1zM302 466h1v1h-1zM303 466h1v1h-1zM303 467h1v1h-1zM303 468h1v1h-1zM304 468h1v1h-1zM304 469h1v1h-1zM304 470h1v1h-1zM305 470h1v1h-1zM308 470h1v1h-1zM309 470h1v1h-1zM305 471h1v1h-1zM307 471h1v1h-1zM305 472h1v1h-1zM306 472h1v1h-1zM312 463h1v1h-1zM313 463h1v1h-1zM311 464h1v1h-1zM313 464h1v1h-1zM314 464h1v1h-1zM311 465h1v1h-1zM314 465h1v1h-1zM314 466h1v1h-1zM315 466h1v1h-1zM315 467h1v1h-1zM315 468h1v1h-1zM316 468h1v1h-1zM316 469h1v1h-1zM316 470h1v1h-1zM317 470h1v1h-1zM320 470h1v1h-1zM321 470h1v1h-1zM317 471h1v1h-1zM319 471h1v1h-1zM317 472h1v1h-1zM318 472h1v1h-1zM324 463h1v1h-1zM325 463h1v1h-1zM323 464h1v1h-1zM325 464h1v1h-1zM326 464h1v1h-1zM323 465h1v1h-1zM326 465h1v1h-1zM326 466h1v1h-1zM327 466h1v1h-1zM327 467h1v1h-1zM327 468h1v1h-1zM328 468h1v1h-1zM328 469h1v1h-1zM328 470h1v1h-1zM329 470h1v1h-1zM332 470h1v1h-1zM333 470h1v1h-1zM329 471h1v1h-1zM331 471h1v1h-1zM329 472h1v1h-1zM330 472h1v1h-1zM336 463h1v1h-1zM337 463h1v1h-1zM335 464h1v1h-1zM337 464h1v1h-1zM338 464h1v1h-1zM335 465h1v1h-1zM338 465h1v1h-1zM338 466h1v1h-1zM339 466h1v1h-1zM339 467h1v1h-1zM339 468h1v1h-1zM340 468h1v1h-1zM340 469h1v1h-1zM340 470h1v1h-1zM341 470h1v1h-1zM344 470h1v1h-1zM345 470h1v1h-1zM341 471h1v1h-1zM343 471h1v1h-1zM341 472h1v1h-1zM342 472h1v1h-1zM348 463h1v1h-1zM349 463h1v1h-1zM347 464h1v1h-1zM349 464h1v1h-1zM350 464h1v1h-1zM347 465h1v1h-1zM350 465h1v1h-1zM350 466h1v1h-1zM351 466h1v1h-1zM351 467h1v1h-1zM351 468h1v1h-1zM352 468h1v1h-1zM352 469h1v1h-1zM352 470h1v1h-1zM353 470h1v1h-1zM356 470h1v1h-1zM357 470h1v1h-1zM353 471h1v1h-1zM355 471h1v1h-1zM353 472h1v1h-1zM354 472h1v1h-1zM360 463h1v1h-1zM361 463h1v1h-1zM359 464h1v1h-1zM361 464h1v1h-1zM362 464h1v1h-1zM359 465h1v1h-1zM362 465h1v1h-1zM362 466h1v1h-1zM363 466h1v1h-1zM363 467h1v1h-1zM363 468h1v1h-1zM364 468h1v1h-1zM364 469h1v1h-1zM364 470h1v1h-1zM365 470h1v1h-1zM368 470h1v1h-1zM369 470h1v1h-1zM365 471h1v1h-1zM367 471h1v1h-1zM365 472h1v1h-1zM366 472h1v1h-1zM372 463h1v1h-1zM373 463h1v1h-1zM371 464h1v1h-1zM373 464h1v1h-1zM374 464h1v1h-1zM371 465h1v1h-1zM374 465h1v1h-1zM374 466h1v1h-1zM375 466h1v1h-1zM375 467h1v1h-1zM375 468h1v1h-1zM376 468h1v1h-1zM376 469h1v1h-1zM376 470h1v1h-1zM377 470h1v1h-1zM380 470h1v1h-1zM381 470h1v1h-1zM377 471h1v1h-1zM379 471h1v1h-1zM377 472h1v1h-1zM378 472h1v1h-1zM384 463h1v1h-1zM385 463h1v1h-1zM383 464h1v1h-1zM385 464h1v1h-1zM386 464h1v1h-1zM383 465h1v1h-1zM386 465h1v1h-1zM386 466h1v1h-1zM387 466h1v1h-1zM387 467h1v1h-1zM387 468h1v1h-1zM388 468h1v1h-1zM388 469h1v1h-1zM388 470h1v1h-1zM389 470h1v1h-1zM392 470h1v1h-1zM393 470h1v1h-1zM389 471h1v1h-1zM391 471h1v1h-1zM389 472h1v1h-1zM390 472h1v1h-1zM396 463h1v1h-1zM397 463h1v1h-1zM395 464h1v1h-1zM397 464h1v1h-1zM398 464h1v1h-1zM395 465h1v1h-1zM398 465h1v1h-1zM398 466h1v1h-1zM399 466h1v1h-1zM399 467h1v1h-1zM399 468h1v1h-1zM400 468h1v1h-1zM400 469h1v1h-1zM400 470h1v1h-1zM401 470h1v1h-1zM404 470h1v1h-1zM405 470h1v1h-1zM401 471h1v1h-1zM403 471h1v1h-1zM401 472h1v1h-1zM402 472h1v1h-1zM121 463h1v9h-1zM122 468h2v1h-2zM410 463h1v9h-1z"/><path class="c" fill="#000" d="M126 465h3v1h-3zM125 466h1v1h-1z"/><path class="c" fill="#00FFFF" d="M126 466h3v1h-3z"/><path class="c" fill="#000" d="M129 466h1v1h-1zM124 467h1v1h-1z"/><path class="c" fill="#00FFFF" d="M125 467h5v1h-5z"/><path class="c" fill="#000" d="M130 467h1v1h-1zM124 468h1v1h-1z"/><path class="c" fill="#00FFFF" d="M125 468h5v1h-5z"/><path class="c" fill="#000" d="M130 468h1v1h-1zM124 469h1v1h-1z"/><path class="c" fill="#00FFFF" d="M125 469h5v1h-5z"/><path class="c" fill="#000" d="M130 469h1v1h-1zM125 470h1v1h-1z"/><path class="c" fill="#00FFFF" d="M126 470h3v1h-3z"/><path class="c" fill="#000" d="M129 470h1v1h-1zM126 471h3v1h-3zM401 462h7v5h-7z"/><path class="c" fill="#00FFFF" d="M402 463h5v3h-5z"/><text x="90" y="476" font-size="12.9" fill="#fff" style="font-weight:bold;" text-anchor="start" textLength="23" lengthAdjust="spacingAndGlyphs" filter="url(#crisp)" >548</text><path class="c" fill="#00FFFF" d="M129 694h3v1h-3zM134 694h10v1h-10zM146 694h10v1h-10zM158 694h10v1h-10zM170 694h10v1h-10zM182 694h10v1h-10zM194 694h10v1h-10zM206 694h10v1h-10zM218 694h10v1h-10zM230 694h10v1h-10zM242 694h10v1h-10zM254 694h10v1h-10zM266 694h10v1h-10zM278 694h10v1h-10zM290 694h10v1h-10zM302 694h10v1h-10zM314 694h10v1h-10zM326 694h10v1h-10zM338 694h10v1h-10zM350 694h10v1h-10zM362 694h10v1h-10zM374 694h10v1h-10zM386 694h10v1h-10zM398 694h10v1h-10zM410 694h10v1h-10zM422 694h10v1h-10zM434 694h9v1h-9zM129 697h8v1h-8zM139 697h10v1h-10zM151 697h10v1h-10zM163 697h10v1h-10zM175 697h10v1h-10zM187 697h10v1h-10zM199 697h10v1h-10zM211 697h10v1h-10zM223 697h10v1h-10zM235 697h10v1h-10zM247 697h10v1h-10zM259 697h10v1h-10zM271 697h10v1h-10zM283 697h10v1h-10zM295 697h10v1h-10zM307 697h10v1h-10zM319 697h10v1h-10zM331 697h10v1h-10zM343 697h10v1h-10zM355 697h10v1h-10zM367 697h10v1h-10zM379 697h10v1h-10zM391 697h10v1h-10zM403 697h10v1h-10zM415 697h10v1h-10zM427 697h10v1h-10zM439 697h4v1h-4zM132 691h1v1h-1zM133 691h1v1h-1zM131 692h1v1h-1zM133 692h1v1h-1zM134 692h1v1h-1zM131 693h1v1h-1zM134 693h1v1h-1zM134 694h1v1h-1zM135 694h1v1h-1zM135 695h1v1h-1zM135 696h1v1h-1zM136 696h1v1h-1zM136 697h1v1h-1zM136 698h1v1h-1zM137 698h1v1h-1zM140 698h1v1h-1zM141 698h1v1h-1zM137 699h1v1h-1zM139 699h1v1h-1zM137 700h1v1h-1zM138 700h1v1h-1zM144 691h1v1h-1zM145 691h1v1h-1zM143 692h1v1h-1zM145 692h1v1h-1zM146 692h1v1h-1zM143 693h1v1h-1zM146 693h1v1h-1zM146 694h1v1h-1zM147 694h1v1h-1zM147 695h1v1h-1zM147 696h1v1h-1zM148 696h1v1h-1zM148 697h1v1h-1zM148 698h1v1h-1zM149 698h1v1h-1zM152 698h1v1h-1zM153 698h1v1h-1zM149 699h1v1h-1zM151 699h1v1h-1zM149 700h1v1h-1zM150 700h1v1h-1zM156 691h1v1h-1zM157 691h1v1h-1zM155 692h1v1h-1zM157 692h1v1h-1zM158 692h1v1h-1zM155 693h1v1h-1zM158 693h1v1h-1zM158 694h1v1h-1zM159 694h1v1h-1zM159 695h1v1h-1zM159 696h1v1h-1zM160 696h1v1h-1zM160 697h1v1h-1zM160 698h1v1h-1zM161 698h1v1h-1zM164 698h1v1h-1zM165 698h1v1h-1zM161 699h1v1h-1zM163 699h1v1h-1zM161 700h1v1h-1zM162 700h1v1h-1zM168 691h1v1h-1zM169 691h1v1h-1zM167 692h1v1h-1zM169 692h1v1h-1zM170 692h1v1h-1zM167 693h1v1h-1zM170 693h1v1h-1zM170 694h1v1h-1zM171 694h1v1h-1zM171 695h1v1h-1zM171 696h1v1h-1zM172 696h1v1h-1zM172 697h1v1h-1zM172 698h1v1h-1zM173 698h1v1h-1zM176 698h1v1h-1zM177 698h1v1h-1zM173 699h1v1h-1zM175 699h1v1h-1zM173 700h1v1h-1zM174 700h1v1h-1zM180 691h1v1h-1zM181 691h1v1h-1zM179 692h1v1h-1zM181 692h1v1h-1zM182 692h1v1h-1zM179 693h1v1h-1zM182 693h1v1h-1zM182 694h1v1h-1zM183 694h1v1h-1zM183 695h1v1h-1zM183 696h1v1h-1zM184 696h1v1h-1zM184 697h1v1h-1zM184 698h1v1h-1zM185 698h1v1h-1zM188 698h1v1h-1zM189 698h1v1h-1zM185 699h1v1h-1zM187 699h1v1h-1zM185 700h1v1h-1zM186 700h1v1h-1zM192 691h1v1h-1zM193 691h1v1h-1zM191 692h1v1h-1zM193 692h1v1h-1zM194 692h1v1h-1zM191 693h1v1h-1zM194 693h1v1h-1zM194 694h1v1h-1zM195 694h1v1h-1zM195 695h1v1h-1zM195 696h1v1h-1zM196 696h1v1h-1zM196 697h1v1h-1zM196 698h1v1h-1zM197 698h1v1h-1zM200 698h1v1h-1zM201 698h1v1h-1zM197 699h1v1h-1zM199 699h1v1h-1zM197 700h1v1h-1zM198 700h1v1h-1zM204 691h1v1h-1zM205 691h1v1h-1zM203 692h1v1h-1zM205 692h1v1h-1zM206 692h1v1h-1zM203 693h1v1h-1zM206 693h1v1h-1zM206 694h1v1h-1zM207 694h1v1h-1zM207 695h1v1h-1zM207 696h1v1h-1zM208 696h1v1h-1zM208 697h1v1h-1zM208 698h1v1h-1zM209 698h1v1h-1zM212 698h1v1h-1zM213 698h1v1h-1zM209 699h1v1h-1zM211 699h1v1h-1zM209 700h1v1h-1zM210 700h1v1h-1zM216 691h1v1h-1zM217 691h1v1h-1zM215 692h1v1h-1zM217 692h1v1h-1zM218 692h1v1h-1zM215 693h1v1h-1zM218 693h1v1h-1zM218 694h1v1h-1zM219 694h1v1h-1zM219 695h1v1h-1zM219 696h1v1h-1zM220 696h1v1h-1zM220 697h1v1h-1zM220 698h1v1h-1zM221 698h1v1h-1zM224 698h1v1h-1zM225 698h1v1h-1zM221 699h1v1h-1zM223 699h1v1h-1zM221 700h1v1h-1zM222 700h1v1h-1zM228 691h1v1h-1zM229 691h1v1h-1zM227 692h1v1h-1zM229 692h1v1h-1zM230 692h1v1h-1zM227 693h1v1h-1zM230 693h1v1h-1zM230 694h1v1h-1zM231 694h1v1h-1zM231 695h1v1h-1zM231 696h1v1h-1zM232 696h1v1h-1zM232 697h1v1h-1zM232 698h1v1h-1zM233 698h1v1h-1zM236 698h1v1h-1zM237 698h1v1h-1zM233 699h1v1h-1zM235 699h1v1h-1zM233 700h1v1h-1zM234 700h1v1h-1zM240 691h1v1h-1zM241 691h1v1h-1zM239 692h1v1h-1zM241 692h1v1h-1zM242 692h1v1h-1zM239 693h1v1h-1zM242 693h1v1h-1zM242 694h1v1h-1zM243 694h1v1h-1zM243 695h1v1h-1zM243 696h1v1h-1zM244 696h1v1h-1zM244 697h1v1h-1zM244 698h1v1h-1zM245 698h1v1h-1zM248 698h1v1h-1zM249 698h1v1h-1zM245 699h1v1h-1zM247 699h1v1h-1zM245 700h1v1h-1zM246 700h1v1h-1zM252 691h1v1h-1zM253 691h1v1h-1zM251 692h1v1h-1zM253 692h1v1h-1zM254 692h1v1h-1zM251 693h1v1h-1zM254 693h1v1h-1zM254 694h1v1h-1zM255 694h1v1h-1zM255 695h1v1h-1zM255 696h1v1h-1zM256 696h1v1h-1zM256 697h1v1h-1zM256 698h1v1h-1zM257 698h1v1h-1zM260 698h1v1h-1zM261 698h1v1h-1zM257 699h1v1h-1zM259 699h1v1h-1zM257 700h1v1h-1zM258 700h1v1h-1zM264 691h1v1h-1zM265 691h1v1h-1zM263 692h1v1h-1zM265 692h1v1h-1zM266 692h1v1h-1zM263 693h1v1h-1zM266 693h1v1h-1zM266 694h1v1h-1zM267 694h1v1h-1zM267 695h1v1h-1zM267 696h1v1h-1zM268 696h1v1h-1zM268 697h1v1h-1zM268 698h1v1h-1zM269 698h1v1h-1zM272 698h1v1h-1zM273 698h1v1h-1zM269 699h1v1h-1zM271 699h1v1h-1zM269 700h1v1h-1zM270 700h1v1h-1zM276 691h1v1h-1zM277 691h1v1h-1zM275 692h1v1h-1zM277 692h1v1h-1zM278 692h1v1h-1zM275 693h1v1h-1zM278 693h1v1h-1zM278 694h1v1h-1zM279 694h1v1h-1zM279 695h1v1h-1zM279 696h1v1h-1zM280 696h1v1h-1zM280 697h1v1h-1zM280 698h1v1h-1zM281 698h1v1h-1zM284 698h1v1h-1zM285 698h1v1h-1zM281 699h1v1h-1zM283 699h1v1h-1zM281 700h1v1h-1zM282 700h1v1h-1zM288 691h1v1h-1zM289 691h1v1h-1zM287 692h1v1h-1zM289 692h1v1h-1zM290 692h1v1h-1zM287 693h1v1h-1zM290 693h1v1h-1zM290 694h1v1h-1zM291 694h1v1h-1zM291 695h1v1h-1zM291 696h1v1h-1zM292 696h1v1h-1zM292 697h1v1h-1zM292 698h1v1h-1zM293 698h1v1h-1zM296 698h1v1h-1zM297 698h1v1h-1zM293 699h1v1h-1zM295 699h1v1h-1zM293 700h1v1h-1zM294 700h1v1h-1zM300 691h1v1h-1zM301 691h1v1h-1zM299 692h1v1h-1zM301 692h1v1h-1zM302 692h1v1h-1zM299 693h1v1h-1zM302 693h1v1h-1zM302 694h1v1h-1zM303 694h1v1h-1zM303 695h1v1h-1zM303 696h1v1h-1zM304 696h1v1h-1zM304 697h1v1h-1zM304 698h1v1h-1zM305 698h1v1h-1zM308 698h1v1h-1zM309 698h1v1h-1zM305 699h1v1h-1zM307 699h1v1h-1zM305 700h1v1h-1zM306 700h1v1h-1zM312 691h1v1h-1zM313 691h1v1h-1zM311 692h1v1h-1zM313 692h1v1h-1zM314 692h1v1h-1zM311 693h1v1h-1zM314 693h1v1h-1zM314 694h1v1h-1zM315 694h1v1h-1zM315 695h1v1h-1zM315 696h1v1h-1zM316 696h1v1h-1zM316 697h1v1h-1zM316 698h1v1h-1zM317 698h1v1h-1zM320 698h1v1h-1zM321 698h1v1h-1zM317 699h1v1h-1zM319 699h1v1h-1zM317 700h1v1h-1zM318 700h1v1h-1zM324 691h1v1h-1zM325 691h1v1h-1zM323 692h1v1h-1zM325 692h1v1h-1zM326 692h1v1h-1zM323 693h1v1h-1zM326 693h1v1h-1zM326 694h1v1h-1zM327 694h1v1h-1zM327 695h1v1h-1zM327 696h1v1h-1zM328 696h1v1h-1zM328 697h1v1h-1zM328 698h1v1h-1zM329 698h1v1h-1zM332 698h1v1h-1zM333 698h1v1h-1zM329 699h1v1h-1zM331 699h1v1h-1zM329 700h1v1h-1zM330 700h1v1h-1zM336 691h1v1h-1zM337 691h1v1h-1zM335 692h1v1h-1zM337 692h1v1h-1zM338 692h1v1h-1zM335 693h1v1h-1zM338 693h1v1h-1zM338 694h1v1h-1zM339 694h1v1h-1zM339 695h1v1h-1zM339 696h1v1h-1zM340 696h1v1h-1zM340 697h1v1h-1zM340 698h1v1h-1zM341 698h1v1h-1zM344 698h1v1h-1zM345 698h1v1h-1zM341 699h1v1h-1zM343 699h1v1h-1zM341 700h1v1h-1zM342 700h1v1h-1zM348 691h1v1h-1zM349 691h1v1h-1zM347 692h1v1h-1zM349 692h1v1h-1zM350 692h1v1h-1zM347 693h1v1h-1zM350 693h1v1h-1zM350 694h1v1h-1zM351 694h1v1h-1zM351 695h1v1h-1zM351 696h1v1h-1zM352 696h1v1h-1zM352 697h1v1h-1zM352 698h1v1h-1zM353 698h1v1h-1zM356 698h1v1h-1zM357 698h1v1h-1zM353 699h1v1h-1zM355 699h1v1h-1zM353 700h1v1h-1zM354 700h1v1h-1zM360 691h1v1h-1zM361 691h1v1h-1zM359 692h1v1h-1zM361 692h1v1h-1zM362 692h1v1h-1zM359 693h1v1h-1zM362 693h1v1h-1zM362 694h1v1h-1zM363 694h1v1h-1zM363 695h1v1h-1zM363 696h1v1h-1zM364 696h1v1h-1zM364 697h1v1h-1zM364 698h1v1h-1zM365 698h1v1h-1zM368 698h1v1h-1zM369 698h1v1h-1zM365 699h1v1h-1zM367 699h1v1h-1zM365 700h1v1h-1zM366 700h1v1h-1zM372 691h1v1h-1zM373 691h1v1h-1zM371 692h1v1h-1zM373 692h1v1h-1zM374 692h1v1h-1zM371 693h1v1h-1zM374 693h1v1h-1zM374 694h1v1h-1zM375 694h1v1h-1zM375 695h1v1h-1zM375 696h1v1h-1zM376 696h1v1h-1zM376 697h1v1h-1zM376 698h1v1h-1zM377 698h1v1h-1zM380 698h1v1h-1zM381 698h1v1h-1zM377 699h1v1h-1zM379 699h1v1h-1zM377 700h1v1h-1zM378 700h1v1h-1zM384 691h1v1h-1zM385 691h1v1h-1zM383 692h1v1h-1zM385 692h1v1h-1zM386 692h1v1h-1zM383 693h1v1h-1zM386 693h1v1h-1zM386 694h1v1h-1zM387 694h1v1h-1zM387 695h1v1h-1zM387 696h1v1h-1zM388 696h1v1h-1zM388 697h1v1h-1zM388 698h1v1h-1zM389 698h1v1h-1zM392 698h1v1h-1zM393 698h1v1h-1zM389 699h1v1h-1zM391 699h1v1h-1zM389 700h1v1h-1zM390 700h1v1h-1zM396 691h1v1h-1zM397 691h1v1h-1zM395 692h1v1h-1zM397 692h1v1h-1zM398 692h1v1h-1zM395 693h1v1h-1zM398 693h1v1h-1zM398 694h1v1h-1zM399 694h1v1h-1zM399 695h1v1h-1zM399 696h1v1h-1zM400 696h1v1h-1zM400 697h1v1h-1zM400 698h1v1h-1zM401 698h1v1h-1zM404 698h1v1h-1zM405 698h1v1h-1zM401 699h1v1h-1zM403 699h1v1h-1zM401 700h1v1h-1zM402 700h1v1h-1zM408 691h1v1h-1zM409 691h1v1h-1zM407 692h1v1h-1zM409 692h1v1h-1zM410 692h1v1h-1zM407 693h1v1h-1zM410 693h1v1h-1zM410 694h1v1h-1zM411 694h1v1h-1zM411 695h1v1h-1zM411 696h1v1h-1zM412 696h1v1h-1zM412 697h1v1h-1zM412 698h1v1h-1zM413 698h1v1h-1zM416 698h1v1h-1zM417 698h1v1h-1zM413 699h1v1h-1zM415 699h1v1h-1zM413 700h1v1h-1zM414 700h1v1h-1zM420 691h1v1h-1zM421 691h1v1h-1zM419 692h1v1h-1zM421 692h1v1h-1zM422 692h1v1h-1zM419 693h1v1h-1zM422 693h1v1h-1zM422 694h1v1h-1zM423 694h1v1h-1zM423 695h1v1h-1zM423 696h1v1h-1zM424 696h1v1h-1zM424 697h1v1h-1zM424 698h1v1h-1zM425 698h1v1h-1zM428 698h1v1h-1zM429 698h1v1h-1zM425 699h1v1h-1zM427 699h1v1h-1zM425 700h1v1h-1zM426 700h1v1h-1zM432 691h1v1h-1zM433 691h1v1h-1zM431 692h1v1h-1zM433 692h1v1h-1zM434 692h1v1h-1zM431 693h1v1h-1zM434 693h1v1h-1zM434 694h1v1h-1zM435 694h1v1h-1zM435 695h1v1h-1zM435 696h1v1h-1zM436 696h1v1h-1zM436 697h1v1h-1zM436 698h1v1h-1zM437 698h1v1h-1zM440 698h1v1h-1zM441 698h1v1h-1zM437 699h1v1h-1zM439 699h1v1h-1zM437 700h1v1h-1zM438 700h1v1h-1zM121 691h1v9h-1zM122 696h2v1h-2zM443 691h1v9h-1z"/><path class="c" fill="#000" d="M126 693h3v1h-3zM125 694h1v1h-1z"/><path class="c" fill="#00FFFF" d="M126 694h3v1h-3z"/><path class="c" fill="#000" d="M129 694h1v1h-1zM124 695h1v1h-1z"/><path class="c" fill="#00FFFF" d="M125 695h5v1h-5z"/><path class="c" fill="#000" d="M130 695h1v1h-1zM124 696h1v1h-1z"/><path class="c" fill="#00FFFF" d="M125 696h5v1h-5z"/><path class="c" fill="#000" d="M130 696h1v1h-1zM124 697h1v1h-1z"/><path class="c" fill="#00FFFF" d="M125 697h5v1h-5z"/><path class="c" fill="#000" d="M130 697h1v1h-1zM125 698h1v1h-1z"/><path class="c" fill="#00FFFF" d="M126 698h3v1h-3z"/><path class="c" fill="#000" d="M129 698h1v1h-1zM126 699h3v1h-3zM434 690h7v5h-7z"/><path class="c" fill="#00FFFF" d="M435 691h5v3h-5z"/><text x="90" y="704" font-size="12.9" fill="#fff" style="font-weight:bold;" text-anchor="start" textLength="23" lengthAdjust="spacingAndGlyphs" filter="url(#crisp)" >567</text><path class="c" fill="#fff" d="M13 113h16v1h-16zM28 73h1v41h-1zM28 73h19v1h-19zM67 73h48v1h-48zM135 73h71v1h-71zM227 73h71v1h-71zM319 73h63v1h-63zM381 73h1v18h-1zM56 83h1v427h-1zM124 83h1v7h-1zM217 83h1v7h-1zM308 83h1v7h-1z"/><path d="M51,73 H56 L61,79" stroke="#FFFF00" stroke-width="2" fill="none" stroke-linejoin="miter"/><text x="70" y="87" font-size="12.9" fill="#fff" style="font-weight:bold;" text-anchor="start" textLength="23" lengthAdjust="spacingAndGlyphs" filter="url(#crisp)" >500</text><path d="M119,73 H124 L129,79" stroke="#FFFF00" stroke-width="2" fill="none" stroke-linejoin="miter"/><text x="138" y="87" font-size="12.9" fill="#fff" style="font-weight:bold;" text-anchor="start" textLength="23" lengthAdjust="spacingAndGlyphs" filter="url(#crisp)" >501</text><path d="M212,73 H217 L222,79" stroke="#FFFF00" stroke-width="2" fill="none" stroke-linejoin="miter"/><text x="231" y="87" font-size="12.9" fill="#fff" style="font-weight:bold;" text-anchor="start" textLength="23" lengthAdjust="spacingAndGlyphs" filter="url(#crisp)" >502</text><path d="M303,73 H308 L313,79" stroke="#FFFF00" stroke-width="2" fill="none" stroke-linejoin="miter"/><text x="322" y="87" font-size="12.9" fill="#fff" style="font-weight:bold;" text-anchor="start" textLength="23" lengthAdjust="spacingAndGlyphs" filter="url(#crisp)" >503</text><text x="6" y="131" font-size="12.5" fill="#fff" style="" text-anchor="start" textLength="34" lengthAdjust="spacingAndGlyphs" >В/сорт</text><text x="402" y="79" font-size="12" fill="#fff" style="" text-anchor="start" textLength="25" lengthAdjust="spacingAndGlyphs" >с 411</text><path class="c" fill="#fff" d="M429 74h19v1h-19zM447 74h1v16h-1zM456 84h1v6h-1zM456 84h69v1h-69zM524 81h1v4h-1z"/><text x="106" y="287" font-size="12.5" fill="#fff" style="" text-anchor="start" textLength="26" lengthAdjust="spacingAndGlyphs" >с 501</text><path class="c" fill="#fff" d="M124 291h1v7h-1z"/><text x="202" y="287" font-size="12.5" fill="#fff" style="" text-anchor="start" textLength="26" lengthAdjust="spacingAndGlyphs" >с 502</text><path class="c" fill="#fff" d="M217 291h1v7h-1z"/><text x="294" y="287" font-size="12.5" fill="#fff" style="" text-anchor="start" textLength="26" lengthAdjust="spacingAndGlyphs" >с 503</text><path class="c" fill="#fff" d="M308 291h1v7h-1z"/><text x="366" y="287" font-size="12.5" fill="#fff" style="" text-anchor="start" textLength="26" lengthAdjust="spacingAndGlyphs" >с 503</text><path class="c" fill="#fff" d="M380 291h1v7h-1z"/><text x="433" y="287" font-size="12.5" fill="#fff" style="" text-anchor="start" textLength="26" lengthAdjust="spacingAndGlyphs" >с 510</text><path class="c" fill="#fff" d="M448 291h1v7h-1z"/><text x="6" y="495" font-size="12" fill="#fff" style="" text-anchor="start" textLength="33" lengthAdjust="spacingAndGlyphs" >1/сорт</text><path class="c" fill="#fff" d="M43 492h10v1h-10zM59 492h80v1h-80zM159 492h72v1h-72zM252 492h71v1h-71zM343 492h35v1h-35zM399 492h50v1h-50zM448 492h1v35h-1zM56 509h39v1h-39zM115 509h31v1h-31zM151 509h37v1h-37zM208 509h30v1h-30zM244 509h34v1h-34zM299 509h31v1h-31zM335 509h43v1h-43zM377 509h1v18h-1z"/><path d="M143,492 H148 L153,498" stroke="#FFFF00" stroke-width="2" fill="none" stroke-linejoin="miter"/><text x="162" y="506" font-size="12.9" fill="#fff" style="font-weight:bold;" text-anchor="start" textLength="23" lengthAdjust="spacingAndGlyphs" filter="url(#crisp)" >505</text><path d="M236,492 H241 L246,498" stroke="#FFFF00" stroke-width="2" fill="none" stroke-linejoin="miter"/><text x="255" y="506" font-size="12.9" fill="#fff" style="font-weight:bold;" text-anchor="start" textLength="23" lengthAdjust="spacingAndGlyphs" filter="url(#crisp)" >507</text><path d="M328,492 H333 L338,498" stroke="#FFFF00" stroke-width="2" fill="none" stroke-linejoin="miter"/><text x="347" y="506" font-size="12.9" fill="#fff" style="font-weight:bold;" text-anchor="start" textLength="23" lengthAdjust="spacingAndGlyphs" filter="url(#crisp)" >509</text><path d="M383,492 H388 L393,498" stroke="#FFFF00" stroke-width="2" fill="none" stroke-linejoin="miter"/><text x="402" y="506" font-size="12.9" fill="#fff" style="font-weight:bold;" text-anchor="start" textLength="23" lengthAdjust="spacingAndGlyphs" filter="url(#crisp)" >510</text><path d="M99,509 H104 L109,515" stroke="#FFFF00" stroke-width="2" fill="none" stroke-linejoin="miter"/><text x="118" y="523" font-size="12.9" fill="#fff" style="font-weight:bold;" text-anchor="start" textLength="23" lengthAdjust="spacingAndGlyphs" filter="url(#crisp)" >504</text><path d="M192,509 H197 L202,515" stroke="#FFFF00" stroke-width="2" fill="none" stroke-linejoin="miter"/><text x="211" y="523" font-size="12.9" fill="#fff" style="font-weight:bold;" text-anchor="start" textLength="23" lengthAdjust="spacingAndGlyphs" filter="url(#crisp)" >506</text><path d="M283,509 H288 L293,515" stroke="#FFFF00" stroke-width="2" fill="none" stroke-linejoin="miter"/><text x="302" y="523" font-size="12.9" fill="#fff" style="font-weight:bold;" text-anchor="start" textLength="23" lengthAdjust="spacingAndGlyphs" filter="url(#crisp)" >508</text><path class="c" fill="#fff" d="M148 502h1v25h-1zM241 497h1v30h-1zM332 497h1v30h-1zM388 497h1v30h-1zM104 519h1v8h-1zM197 519h1v8h-1zM288 519h1v8h-1zM452 230h1v28h-1zM452 257h73v1h-73zM524 257h1v353h-1zM524 609h56v1h-56zM579 609h1v30h-1zM496 230h1v28h-1zM495 256h3v3h-3zM404 266h1v7h-1zM404 272h118v1h-118zM527 272h30v1h-30zM556 272h1v320h-1zM556 591h153v1h-153zM708 591h1v48h-1zM452 438h1v27h-1zM452 464h73v1h-73zM523 463h3v3h-3zM496 438h1v27h-1zM495 463h3v3h-3zM404 474h1v7h-1zM404 480h118v1h-118zM527 480h30v1h-30zM555 479h3v3h-3zM437 696h1v13h-1zM437 708h88v1h-88zM524 630h1v79h-1zM524 630h51v1h-51zM574 630h1v9h-1zM452 666h1v43h-1zM451 707h3v3h-3zM496 666h1v43h-1zM495 707h3v3h-3zM551 71h6v1h-6zM556 71h1v171h-1zM556 241h6v1h-6zM417 720h1v6h-1zM417 725h267v1h-267zM683 629h1v97h-1zM683 629h20v1h-20zM702 629h1v10h-1zM586 216h1v18h-1zM586 216h223v1h-223zM808 200h1v17h-1zM688 200h1v17h-1zM687 215h3v3h-3zM633 650h1v39h-1zM765 650h1v38h-1z"/><path class="c" fill="#00FFFF" d="M576 642h3v1h-3zM581 642h10v1h-10zM593 642h10v1h-10zM605 642h10v1h-10zM617 642h10v1h-10zM629 642h8v1h-8zM576 645h8v1h-8zM586 645h10v1h-10zM598 645h10v1h-10zM610 645h10v1h-10zM622 645h10v1h-10zM634 645h3v1h-3zM579 639h1v1h-1zM580 639h1v1h-1zM578 640h1v1h-1zM580 640h1v1h-1zM581 640h1v1h-1zM578 641h1v1h-1zM581 641h1v1h-1zM581 642h1v1h-1zM582 642h1v1h-1zM582 643h1v1h-1zM582 644h1v1h-1zM583 644h1v1h-1zM583 645h1v1h-1zM583 646h1v1h-1zM584 646h1v1h-1zM587 646h1v1h-1zM588 646h1v1h-1zM584 647h1v1h-1zM586 647h1v1h-1zM584 648h1v1h-1zM585 648h1v1h-1zM591 639h1v1h-1zM592 639h1v1h-1zM590 640h1v1h-1zM592 640h1v1h-1zM593 640h1v1h-1zM590 641h1v1h-1zM593 641h1v1h-1zM593 642h1v1h-1zM594 642h1v1h-1zM594 643h1v1h-1zM594 644h1v1h-1zM595 644h1v1h-1zM595 645h1v1h-1zM595 646h1v1h-1zM596 646h1v1h-1zM599 646h1v1h-1zM600 646h1v1h-1zM596 647h1v1h-1zM598 647h1v1h-1zM596 648h1v1h-1zM597 648h1v1h-1zM603 639h1v1h-1zM604 639h1v1h-1zM602 640h1v1h-1zM604 640h1v1h-1zM605 640h1v1h-1zM602 641h1v1h-1zM605 641h1v1h-1zM605 642h1v1h-1zM606 642h1v1h-1zM606 643h1v1h-1zM606 644h1v1h-1zM607 644h1v1h-1zM607 645h1v1h-1zM607 646h1v1h-1zM608 646h1v1h-1zM611 646h1v1h-1zM612 646h1v1h-1zM608 647h1v1h-1zM610 647h1v1h-1zM608 648h1v1h-1zM609 648h1v1h-1zM615 639h1v1h-1zM616 639h1v1h-1zM614 640h1v1h-1zM616 640h1v1h-1zM617 640h1v1h-1zM614 641h1v1h-1zM617 641h1v1h-1zM617 642h1v1h-1zM618 642h1v1h-1zM618 643h1v1h-1zM618 644h1v1h-1zM619 644h1v1h-1zM619 645h1v1h-1zM619 646h1v1h-1zM620 646h1v1h-1zM623 646h1v1h-1zM624 646h1v1h-1zM620 647h1v1h-1zM622 647h1v1h-1zM620 648h1v1h-1zM621 648h1v1h-1zM627 639h1v1h-1zM628 639h1v1h-1zM626 640h1v1h-1zM628 640h1v1h-1zM629 640h1v1h-1zM626 641h1v1h-1zM629 641h1v1h-1zM629 642h1v1h-1zM630 642h1v1h-1zM630 643h1v1h-1zM630 644h1v1h-1zM631 644h1v1h-1zM631 645h1v1h-1zM631 646h1v1h-1zM632 646h1v1h-1zM635 646h1v1h-1zM636 646h1v1h-1zM632 647h1v1h-1zM634 647h1v1h-1zM632 648h1v1h-1zM633 648h1v1h-1zM568 639h1v9h-1zM569 644h2v1h-2zM637 639h1v9h-1z"/><path class="c" fill="#000" d="M573 641h3v1h-3zM572 642h1v1h-1z"/><path class="c" fill="#00FFFF" d="M573 642h3v1h-3z"/><path class="c" fill="#000" d="M576 642h1v1h-1zM571 643h1v1h-1z"/><path class="c" fill="#00FFFF" d="M572 643h5v1h-5z"/><path class="c" fill="#000" d="M577 643h1v1h-1zM571 644h1v1h-1z"/><path class="c" fill="#00FFFF" d="M572 644h5v1h-5z"/><path class="c" fill="#000" d="M577 644h1v1h-1zM571 645h1v1h-1z"/><path class="c" fill="#00FFFF" d="M572 645h5v1h-5z"/><path class="c" fill="#000" d="M577 645h1v1h-1zM572 646h1v1h-1z"/><path class="c" fill="#00FFFF" d="M573 646h3v1h-3z"/><path class="c" fill="#000" d="M576 646h1v1h-1zM573 647h3v1h-3zM628 638h7v5h-7z"/><path class="c" fill="#00FFFF" d="M629 639h5v3h-5zM708 642h3v1h-3zM713 642h10v1h-10zM725 642h10v1h-10zM737 642h10v1h-10zM749 642h10v1h-10zM761 642h8v1h-8zM708 645h8v1h-8zM718 645h10v1h-10zM730 645h10v1h-10zM742 645h10v1h-10zM754 645h10v1h-10zM766 645h3v1h-3zM711 639h1v1h-1zM712 639h1v1h-1zM710 640h1v1h-1zM712 640h1v1h-1zM713 640h1v1h-1zM710 641h1v1h-1zM713 641h1v1h-1zM713 642h1v1h-1zM714 642h1v1h-1zM714 643h1v1h-1zM714 644h1v1h-1zM715 644h1v1h-1zM715 645h1v1h-1zM715 646h1v1h-1zM716 646h1v1h-1zM719 646h1v1h-1zM720 646h1v1h-1zM716 647h1v1h-1zM718 647h1v1h-1zM716 648h1v1h-1zM717 648h1v1h-1zM723 639h1v1h-1zM724 639h1v1h-1zM722 640h1v1h-1zM724 640h1v1h-1zM725 640h1v1h-1zM722 641h1v1h-1zM725 641h1v1h-1zM725 642h1v1h-1zM726 642h1v1h-1zM726 643h1v1h-1zM726 644h1v1h-1zM727 644h1v1h-1zM727 645h1v1h-1zM727 646h1v1h-1zM728 646h1v1h-1zM731 646h1v1h-1zM732 646h1v1h-1zM728 647h1v1h-1zM730 647h1v1h-1zM728 648h1v1h-1zM729 648h1v1h-1zM735 639h1v1h-1zM736 639h1v1h-1zM734 640h1v1h-1zM736 640h1v1h-1zM737 640h1v1h-1zM734 641h1v1h-1zM737 641h1v1h-1zM737 642h1v1h-1zM738 642h1v1h-1zM738 643h1v1h-1zM738 644h1v1h-1zM739 644h1v1h-1zM739 645h1v1h-1zM739 646h1v1h-1zM740 646h1v1h-1zM743 646h1v1h-1zM744 646h1v1h-1zM740 647h1v1h-1zM742 647h1v1h-1zM740 648h1v1h-1zM741 648h1v1h-1zM747 639h1v1h-1zM748 639h1v1h-1zM746 640h1v1h-1zM748 640h1v1h-1zM749 640h1v1h-1zM746 641h1v1h-1zM749 641h1v1h-1zM749 642h1v1h-1zM750 642h1v1h-1zM750 643h1v1h-1zM750 644h1v1h-1zM751 644h1v1h-1zM751 645h1v1h-1zM751 646h1v1h-1zM752 646h1v1h-1zM755 646h1v1h-1zM756 646h1v1h-1zM752 647h1v1h-1zM754 647h1v1h-1zM752 648h1v1h-1zM753 648h1v1h-1zM759 639h1v1h-1zM760 639h1v1h-1zM758 640h1v1h-1zM760 640h1v1h-1zM761 640h1v1h-1zM758 641h1v1h-1zM761 641h1v1h-1zM761 642h1v1h-1zM762 642h1v1h-1zM762 643h1v1h-1zM762 644h1v1h-1zM763 644h1v1h-1zM763 645h1v1h-1zM763 646h1v1h-1zM764 646h1v1h-1zM767 646h1v1h-1zM768 646h1v1h-1zM764 647h1v1h-1zM766 647h1v1h-1zM764 648h1v1h-1zM765 648h1v1h-1zM700 639h1v9h-1zM701 644h2v1h-2zM769 639h1v9h-1z"/><path class="c" fill="#000" d="M705 641h3v1h-3zM704 642h1v1h-1z"/><path class="c" fill="#00FFFF" d="M705 642h3v1h-3z"/><path class="c" fill="#000" d="M708 642h1v1h-1zM703 643h1v1h-1z"/><path class="c" fill="#00FFFF" d="M704 643h5v1h-5z"/><path class="c" fill="#000" d="M709 643h1v1h-1zM703 644h1v1h-1z"/><path class="c" fill="#00FFFF" d="M704 644h5v1h-5z"/><path class="c" fill="#000" d="M709 644h1v1h-1zM703 645h1v1h-1z"/><path class="c" fill="#00FFFF" d="M704 645h5v1h-5z"/><path class="c" fill="#000" d="M709 645h1v1h-1zM704 646h1v1h-1z"/><path class="c" fill="#00FFFF" d="M705 646h3v1h-3z"/><path class="c" fill="#000" d="M708 646h1v1h-1zM705 647h3v1h-3zM760 638h7v5h-7z"/><path class="c" fill="#00FFFF" d="M761 639h5v3h-5zM629 486h3v1h-3zM634 486h10v1h-10zM646 486h9v1h-9zM657 486h10v1h-10zM669 486h10v1h-10zM681 486h9v1h-9zM692 486h10v1h-10zM704 486h10v1h-10zM716 486h10v1h-10zM728 486h9v1h-9zM739 486h10v1h-10zM751 486h10v1h-10zM763 486h9v1h-9zM774 486h10v1h-10zM786 486h10v1h-10zM798 486h10v1h-10zM810 486h9v1h-9zM821 486h10v1h-10zM833 486h10v1h-10zM845 486h9v1h-9zM856 486h10v1h-10zM868 486h10v1h-10zM880 486h9v1h-9zM891 486h10v1h-10zM903 486h7v1h-7zM629 489h8v1h-8zM639 489h10v1h-10zM651 489h9v1h-9zM662 489h10v1h-10zM674 489h10v1h-10zM686 489h9v1h-9zM697 489h10v1h-10zM709 489h10v1h-10zM721 489h10v1h-10zM733 489h9v1h-9zM744 489h10v1h-10zM756 489h10v1h-10zM768 489h9v1h-9zM779 489h10v1h-10zM791 489h10v1h-10zM803 489h10v1h-10zM815 489h9v1h-9zM826 489h10v1h-10zM838 489h10v1h-10zM850 489h9v1h-9zM861 489h10v1h-10zM873 489h10v1h-10zM885 489h9v1h-9zM896 489h10v1h-10zM908 489h2v1h-2zM632 483h1v1h-1zM633 483h1v1h-1zM631 484h1v1h-1zM633 484h1v1h-1zM634 484h1v1h-1zM631 485h1v1h-1zM634 485h1v1h-1zM634 486h1v1h-1zM635 486h1v1h-1zM635 487h1v1h-1zM635 488h1v1h-1zM636 488h1v1h-1zM636 489h1v1h-1zM636 490h1v1h-1zM637 490h1v1h-1zM640 490h1v1h-1zM641 490h1v1h-1zM637 491h1v1h-1zM639 491h1v1h-1zM637 492h1v1h-1zM638 492h1v1h-1zM644 483h1v1h-1zM645 483h1v1h-1zM643 484h1v1h-1zM645 484h1v1h-1zM646 484h1v1h-1zM643 485h1v1h-1zM646 485h1v1h-1zM646 486h1v1h-1zM647 486h1v1h-1zM647 487h1v1h-1zM647 488h1v1h-1zM648 488h1v1h-1zM648 489h1v1h-1zM648 490h1v1h-1zM649 490h1v1h-1zM652 490h1v1h-1zM653 490h1v1h-1zM649 491h1v1h-1zM651 491h1v1h-1zM649 492h1v1h-1zM650 492h1v1h-1zM655 483h1v1h-1zM656 483h1v1h-1zM654 484h1v1h-1zM656 484h1v1h-1zM657 484h1v1h-1zM654 485h1v1h-1zM657 485h1v1h-1zM657 486h1v1h-1zM658 486h1v1h-1zM658 487h1v1h-1zM658 488h1v1h-1zM659 488h1v1h-1zM659 489h1v1h-1zM659 490h1v1h-1zM660 490h1v1h-1zM663 490h1v1h-1zM664 490h1v1h-1zM660 491h1v1h-1zM662 491h1v1h-1zM660 492h1v1h-1zM661 492h1v1h-1zM667 483h1v1h-1zM668 483h1v1h-1zM666 484h1v1h-1zM668 484h1v1h-1zM669 484h1v1h-1zM666 485h1v1h-1zM669 485h1v1h-1zM669 486h1v1h-1zM670 486h1v1h-1zM670 487h1v1h-1zM670 488h1v1h-1zM671 488h1v1h-1zM671 489h1v1h-1zM671 490h1v1h-1zM672 490h1v1h-1zM675 490h1v1h-1zM676 490h1v1h-1zM672 491h1v1h-1zM674 491h1v1h-1zM672 492h1v1h-1zM673 492h1v1h-1zM679 483h1v1h-1zM680 483h1v1h-1zM678 484h1v1h-1zM680 484h1v1h-1zM681 484h1v1h-1zM678 485h1v1h-1zM681 485h1v1h-1zM681 486h1v1h-1zM682 486h1v1h-1zM682 487h1v1h-1zM682 488h1v1h-1zM683 488h1v1h-1zM683 489h1v1h-1zM683 490h1v1h-1zM684 490h1v1h-1zM687 490h1v1h-1zM688 490h1v1h-1zM684 491h1v1h-1zM686 491h1v1h-1zM684 492h1v1h-1zM685 492h1v1h-1zM690 483h1v1h-1zM691 483h1v1h-1zM689 484h1v1h-1zM691 484h1v1h-1zM692 484h1v1h-1zM689 485h1v1h-1zM692 485h1v1h-1zM692 486h1v1h-1zM693 486h1v1h-1zM693 487h1v1h-1zM693 488h1v1h-1zM694 488h1v1h-1zM694 489h1v1h-1zM694 490h1v1h-1zM695 490h1v1h-1zM698 490h1v1h-1zM699 490h1v1h-1zM695 491h1v1h-1zM697 491h1v1h-1zM695 492h1v1h-1zM696 492h1v1h-1zM702 483h1v1h-1zM703 483h1v1h-1zM701 484h1v1h-1zM703 484h1v1h-1zM704 484h1v1h-1zM701 485h1v1h-1zM704 485h1v1h-1zM704 486h1v1h-1zM705 486h1v1h-1zM705 487h1v1h-1zM705 488h1v1h-1zM706 488h1v1h-1zM706 489h1v1h-1zM706 490h1v1h-1zM707 490h1v1h-1zM710 490h1v1h-1zM711 490h1v1h-1zM707 491h1v1h-1zM709 491h1v1h-1zM707 492h1v1h-1zM708 492h1v1h-1zM714 483h1v1h-1zM715 483h1v1h-1zM713 484h1v1h-1zM715 484h1v1h-1zM716 484h1v1h-1zM713 485h1v1h-1zM716 485h1v1h-1zM716 486h1v1h-1zM717 486h1v1h-1zM717 487h1v1h-1zM717 488h1v1h-1zM718 488h1v1h-1zM718 489h1v1h-1zM718 490h1v1h-1zM719 490h1v1h-1zM722 490h1v1h-1zM723 490h1v1h-1zM719 491h1v1h-1zM721 491h1v1h-1zM719 492h1v1h-1zM720 492h1v1h-1zM726 483h1v1h-1zM727 483h1v1h-1zM725 484h1v1h-1zM727 484h1v1h-1zM728 484h1v1h-1zM725 485h1v1h-1zM728 485h1v1h-1zM728 486h1v1h-1zM729 486h1v1h-1zM729 487h1v1h-1zM729 488h1v1h-1zM730 488h1v1h-1zM730 489h1v1h-1zM730 490h1v1h-1zM731 490h1v1h-1zM734 490h1v1h-1zM735 490h1v1h-1zM731 491h1v1h-1zM733 491h1v1h-1zM731 492h1v1h-1zM732 492h1v1h-1zM737 483h1v1h-1zM738 483h1v1h-1zM736 484h1v1h-1zM738 484h1v1h-1zM739 484h1v1h-1zM736 485h1v1h-1zM739 485h1v1h-1zM739 486h1v1h-1zM740 486h1v1h-1zM740 487h1v1h-1zM740 488h1v1h-1zM741 488h1v1h-1zM741 489h1v1h-1zM741 490h1v1h-1zM742 490h1v1h-1zM745 490h1v1h-1zM746 490h1v1h-1zM742 491h1v1h-1zM744 491h1v1h-1zM742 492h1v1h-1zM743 492h1v1h-1zM749 483h1v1h-1zM750 483h1v1h-1zM748 484h1v1h-1zM750 484h1v1h-1zM751 484h1v1h-1zM748 485h1v1h-1zM751 485h1v1h-1zM751 486h1v1h-1zM752 486h1v1h-1zM752 487h1v1h-1zM752 488h1v1h-1zM753 488h1v1h-1zM753 489h1v1h-1zM753 490h1v1h-1zM754 490h1v1h-1zM757 490h1v1h-1zM758 490h1v1h-1zM754 491h1v1h-1zM756 491h1v1h-1zM754 492h1v1h-1zM755 492h1v1h-1zM761 483h1v1h-1zM762 483h1v1h-1zM760 484h1v1h-1zM762 484h1v1h-1zM763 484h1v1h-1zM760 485h1v1h-1zM763 485h1v1h-1zM763 486h1v1h-1zM764 486h1v1h-1zM764 487h1v1h-1zM764 488h1v1h-1zM765 488h1v1h-1zM765 489h1v1h-1zM765 490h1v1h-1zM766 490h1v1h-1zM769 490h1v1h-1zM770 490h1v1h-1zM766 491h1v1h-1zM768 491h1v1h-1zM766 492h1v1h-1zM767 492h1v1h-1zM772 483h1v1h-1zM773 483h1v1h-1zM771 484h1v1h-1zM773 484h1v1h-1zM774 484h1v1h-1zM771 485h1v1h-1zM774 485h1v1h-1zM774 486h1v1h-1zM775 486h1v1h-1zM775 487h1v1h-1zM775 488h1v1h-1zM776 488h1v1h-1zM776 489h1v1h-1zM776 490h1v1h-1zM777 490h1v1h-1zM780 490h1v1h-1zM781 490h1v1h-1zM777 491h1v1h-1zM779 491h1v1h-1zM777 492h1v1h-1zM778 492h1v1h-1zM784 483h1v1h-1zM785 483h1v1h-1zM783 484h1v1h-1zM785 484h1v1h-1zM786 484h1v1h-1zM783 485h1v1h-1zM786 485h1v1h-1zM786 486h1v1h-1zM787 486h1v1h-1zM787 487h1v1h-1zM787 488h1v1h-1zM788 488h1v1h-1zM788 489h1v1h-1zM788 490h1v1h-1zM789 490h1v1h-1zM792 490h1v1h-1zM793 490h1v1h-1zM789 491h1v1h-1zM791 491h1v1h-1zM789 492h1v1h-1zM790 492h1v1h-1zM796 483h1v1h-1zM797 483h1v1h-1zM795 484h1v1h-1zM797 484h1v1h-1zM798 484h1v1h-1zM795 485h1v1h-1zM798 485h1v1h-1zM798 486h1v1h-1zM799 486h1v1h-1zM799 487h1v1h-1zM799 488h1v1h-1zM800 488h1v1h-1zM800 489h1v1h-1zM800 490h1v1h-1zM801 490h1v1h-1zM804 490h1v1h-1zM805 490h1v1h-1zM801 491h1v1h-1zM803 491h1v1h-1zM801 492h1v1h-1zM802 492h1v1h-1zM808 483h1v1h-1zM809 483h1v1h-1zM807 484h1v1h-1zM809 484h1v1h-1zM810 484h1v1h-1zM807 485h1v1h-1zM810 485h1v1h-1zM810 486h1v1h-1zM811 486h1v1h-1zM811 487h1v1h-1zM811 488h1v1h-1zM812 488h1v1h-1zM812 489h1v1h-1zM812 490h1v1h-1zM813 490h1v1h-1zM816 490h1v1h-1zM817 490h1v1h-1zM813 491h1v1h-1zM815 491h1v1h-1zM813 492h1v1h-1zM814 492h1v1h-1zM819 483h1v1h-1zM820 483h1v1h-1zM818 484h1v1h-1zM820 484h1v1h-1zM821 484h1v1h-1zM818 485h1v1h-1zM821 485h1v1h-1zM821 486h1v1h-1zM822 486h1v1h-1zM822 487h1v1h-1zM822 488h1v1h-1zM823 488h1v1h-1zM823 489h1v1h-1zM823 490h1v1h-1zM824 490h1v1h-1zM827 490h1v1h-1zM828 490h1v1h-1zM824 491h1v1h-1zM826 491h1v1h-1zM824 492h1v1h-1zM825 492h1v1h-1zM831 483h1v1h-1zM832 483h1v1h-1zM830 484h1v1h-1zM832 484h1v1h-1zM833 484h1v1h-1zM830 485h1v1h-1zM833 485h1v1h-1zM833 486h1v1h-1zM834 486h1v1h-1zM834 487h1v1h-1zM834 488h1v1h-1zM835 488h1v1h-1zM835 489h1v1h-1zM835 490h1v1h-1zM836 490h1v1h-1zM839 490h1v1h-1zM840 490h1v1h-1zM836 491h1v1h-1zM838 491h1v1h-1zM836 492h1v1h-1zM837 492h1v1h-1zM843 483h1v1h-1zM844 483h1v1h-1zM842 484h1v1h-1zM844 484h1v1h-1zM845 484h1v1h-1zM842 485h1v1h-1zM845 485h1v1h-1zM845 486h1v1h-1zM846 486h1v1h-1zM846 487h1v1h-1zM846 488h1v1h-1zM847 488h1v1h-1zM847 489h1v1h-1zM847 490h1v1h-1zM848 490h1v1h-1zM851 490h1v1h-1zM852 490h1v1h-1zM848 491h1v1h-1zM850 491h1v1h-1zM848 492h1v1h-1zM849 492h1v1h-1zM854 483h1v1h-1zM855 483h1v1h-1zM853 484h1v1h-1zM855 484h1v1h-1zM856 484h1v1h-1zM853 485h1v1h-1zM856 485h1v1h-1zM856 486h1v1h-1zM857 486h1v1h-1zM857 487h1v1h-1zM857 488h1v1h-1zM858 488h1v1h-1zM858 489h1v1h-1zM858 490h1v1h-1zM859 490h1v1h-1zM862 490h1v1h-1zM863 490h1v1h-1zM859 491h1v1h-1zM861 491h1v1h-1zM859 492h1v1h-1zM860 492h1v1h-1zM866 483h1v1h-1zM867 483h1v1h-1zM865 484h1v1h-1zM867 484h1v1h-1zM868 484h1v1h-1zM865 485h1v1h-1zM868 485h1v1h-1zM868 486h1v1h-1zM869 486h1v1h-1zM869 487h1v1h-1zM869 488h1v1h-1zM870 488h1v1h-1zM870 489h1v1h-1zM870 490h1v1h-1zM871 490h1v1h-1zM874 490h1v1h-1zM875 490h1v1h-1zM871 491h1v1h-1zM873 491h1v1h-1zM871 492h1v1h-1zM872 492h1v1h-1zM878 483h1v1h-1zM879 483h1v1h-1zM877 484h1v1h-1zM879 484h1v1h-1zM880 484h1v1h-1zM877 485h1v1h-1zM880 485h1v1h-1zM880 486h1v1h-1zM881 486h1v1h-1zM881 487h1v1h-1zM881 488h1v1h-1zM882 488h1v1h-1zM882 489h1v1h-1zM882 490h1v1h-1zM883 490h1v1h-1zM886 490h1v1h-1zM887 490h1v1h-1zM883 491h1v1h-1zM885 491h1v1h-1zM883 492h1v1h-1zM884 492h1v1h-1zM889 483h1v1h-1zM890 483h1v1h-1zM888 484h1v1h-1zM890 484h1v1h-1zM891 484h1v1h-1zM888 485h1v1h-1zM891 485h1v1h-1zM891 486h1v1h-1zM892 486h1v1h-1zM892 487h1v1h-1zM892 488h1v1h-1zM893 488h1v1h-1zM893 489h1v1h-1zM893 490h1v1h-1zM894 490h1v1h-1zM897 490h1v1h-1zM898 490h1v1h-1zM894 491h1v1h-1zM896 491h1v1h-1zM894 492h1v1h-1zM895 492h1v1h-1zM901 483h1v1h-1zM902 483h1v1h-1zM900 484h1v1h-1zM902 484h1v1h-1zM903 484h1v1h-1zM900 485h1v1h-1zM903 485h1v1h-1zM903 486h1v1h-1zM904 486h1v1h-1zM904 487h1v1h-1zM904 488h1v1h-1zM905 488h1v1h-1zM905 489h1v1h-1zM905 490h1v1h-1zM906 490h1v1h-1zM909 490h1v1h-1zM906 491h1v1h-1zM908 491h1v1h-1zM906 492h1v1h-1zM907 492h1v1h-1zM621 483h1v9h-1zM622 488h2v1h-2zM910 483h1v9h-1z"/><path class="c" fill="#000" d="M626 485h3v1h-3zM625 486h1v1h-1z"/><path class="c" fill="#00FFFF" d="M626 486h3v1h-3z"/><path class="c" fill="#000" d="M629 486h1v1h-1zM624 487h1v1h-1z"/><path class="c" fill="#00FFFF" d="M625 487h5v1h-5z"/><path class="c" fill="#000" d="M630 487h1v1h-1zM624 488h1v1h-1z"/><path class="c" fill="#00FFFF" d="M625 488h5v1h-5z"/><path class="c" fill="#000" d="M630 488h1v1h-1zM624 489h1v1h-1z"/><path class="c" fill="#00FFFF" d="M625 489h5v1h-5z"/><path class="c" fill="#000" d="M630 489h1v1h-1zM625 490h1v1h-1z"/><path class="c" fill="#00FFFF" d="M626 490h3v1h-3z"/><path class="c" fill="#000" d="M629 490h1v1h-1zM626 491h3v1h-3zM901 482h7v5h-7z"/><path class="c" fill="#00FFFF" d="M902 483h5v3h-5zM795 400h3v1h-3zM800 400h10v1h-10zM812 400h10v1h-10zM824 400h10v1h-10zM836 400h10v1h-10zM848 400h8v1h-8zM795 403h8v1h-8zM805 403h10v1h-10zM817 403h10v1h-10zM829 403h10v1h-10zM841 403h10v1h-10zM853 403h3v1h-3zM798 397h1v1h-1zM799 397h1v1h-1zM797 398h1v1h-1zM799 398h1v1h-1zM800 398h1v1h-1zM797 399h1v1h-1zM800 399h1v1h-1zM800 400h1v1h-1zM801 400h1v1h-1zM801 401h1v1h-1zM801 402h1v1h-1zM802 402h1v1h-1zM802 403h1v1h-1zM802 404h1v1h-1zM803 404h1v1h-1zM806 404h1v1h-1zM807 404h1v1h-1zM803 405h1v1h-1zM805 405h1v1h-1zM803 406h1v1h-1zM804 406h1v1h-1zM810 397h1v1h-1zM811 397h1v1h-1zM809 398h1v1h-1zM811 398h1v1h-1zM812 398h1v1h-1zM809 399h1v1h-1zM812 399h1v1h-1zM812 400h1v1h-1zM813 400h1v1h-1zM813 401h1v1h-1zM813 402h1v1h-1zM814 402h1v1h-1zM814 403h1v1h-1zM814 404h1v1h-1zM815 404h1v1h-1zM818 404h1v1h-1zM819 404h1v1h-1zM815 405h1v1h-1zM817 405h1v1h-1zM815 406h1v1h-1zM816 406h1v1h-1zM822 397h1v1h-1zM823 397h1v1h-1zM821 398h1v1h-1zM823 398h1v1h-1zM824 398h1v1h-1zM821 399h1v1h-1zM824 399h1v1h-1zM824 400h1v1h-1zM825 400h1v1h-1zM825 401h1v1h-1zM825 402h1v1h-1zM826 402h1v1h-1zM826 403h1v1h-1zM826 404h1v1h-1zM827 404h1v1h-1zM830 404h1v1h-1zM831 404h1v1h-1zM827 405h1v1h-1zM829 405h1v1h-1zM827 406h1v1h-1zM828 406h1v1h-1zM834 397h1v1h-1zM835 397h1v1h-1zM833 398h1v1h-1zM835 398h1v1h-1zM836 398h1v1h-1zM833 399h1v1h-1zM836 399h1v1h-1zM836 400h1v1h-1zM837 400h1v1h-1zM837 401h1v1h-1zM837 402h1v1h-1zM838 402h1v1h-1zM838 403h1v1h-1zM838 404h1v1h-1zM839 404h1v1h-1zM842 404h1v1h-1zM843 404h1v1h-1zM839 405h1v1h-1zM841 405h1v1h-1zM839 406h1v1h-1zM840 406h1v1h-1zM846 397h1v1h-1zM847 397h1v1h-1zM845 398h1v1h-1zM847 398h1v1h-1zM848 398h1v1h-1zM845 399h1v1h-1zM848 399h1v1h-1zM848 400h1v1h-1zM849 400h1v1h-1zM849 401h1v1h-1zM849 402h1v1h-1zM850 402h1v1h-1zM850 403h1v1h-1zM850 404h1v1h-1zM851 404h1v1h-1zM854 404h1v1h-1zM855 404h1v1h-1zM851 405h1v1h-1zM853 405h1v1h-1zM851 406h1v1h-1zM852 406h1v1h-1zM856 397h1v9h-1z"/><path class="c" fill="#000" d="M792 399h3v1h-3zM791 400h1v1h-1z"/><path class="c" fill="#00FFFF" d="M792 400h3v1h-3z"/><path class="c" fill="#000" d="M795 400h1v1h-1zM790 401h1v1h-1z"/><path class="c" fill="#00FFFF" d="M791 401h5v1h-5z"/><path class="c" fill="#000" d="M796 401h1v1h-1zM790 402h1v1h-1z"/><path class="c" fill="#00FFFF" d="M791 402h5v1h-5z"/><path class="c" fill="#000" d="M796 402h1v1h-1zM790 403h1v1h-1z"/><path class="c" fill="#00FFFF" d="M791 403h5v1h-5z"/><path class="c" fill="#000" d="M796 403h1v1h-1zM791 404h1v1h-1z"/><path class="c" fill="#00FFFF" d="M792 404h3v1h-3z"/><path class="c" fill="#000" d="M795 404h1v1h-1zM792 405h3v1h-3zM847 396h7v5h-7z"/><path class="c" fill="#00FFFF" d="M848 397h5v3h-5z"/><text x="573" y="665" font-size="12.9" fill="#fff" style="font-weight:bold;" text-anchor="start" textLength="23" lengthAdjust="spacingAndGlyphs" filter="url(#crisp)" >573</text><text x="705" y="665" font-size="12.9" fill="#fff" style="font-weight:bold;" text-anchor="start" textLength="23" lengthAdjust="spacingAndGlyphs" filter="url(#crisp)" >568</text><text x="590" y="496" font-size="12.9" fill="#fff" style="font-weight:bold;" text-anchor="start" textLength="23" lengthAdjust="spacingAndGlyphs" filter="url(#crisp)" >570</text><text x="829" y="390" font-size="12.9" fill="#fff" style="font-weight:bold;" text-anchor="start" textLength="23" lengthAdjust="spacingAndGlyphs" filter="url(#crisp)" >571</text><text x="386" y="715" font-size="12.9" fill="#fff" style="font-weight:bold;" text-anchor="start" textLength="14" lengthAdjust="spacingAndGlyphs" filter="url(#crisp)" >14</text><text x="567" y="82" font-size="12.9" fill="#fff" style="font-weight:bold;" text-anchor="start" textLength="23" lengthAdjust="spacingAndGlyphs" filter="url(#crisp)" >420</text><text x="620" y="246" font-size="12.9" fill="#fff" style="font-weight:bold;" text-anchor="start" textLength="23" lengthAdjust="spacingAndGlyphs" filter="url(#crisp)" >420</text><text x="640" y="277" font-size="12.9" fill="#fff" style="font-weight:bold;" text-anchor="start" textLength="23" lengthAdjust="spacingAndGlyphs" filter="url(#crisp)" >574</text><text x="684" y="356" font-size="12.9" fill="#fff" style="font-weight:bold;" text-anchor="start" textLength="23" lengthAdjust="spacingAndGlyphs" filter="url(#crisp)" >576</text><path d="M641.5,289 L647,283.5 H657 L662.5,289 V295 L667.5,301.5 H662 V307.5 H655 V302 H649.5 V307.5 H641.5 Z" transform="translate(0,0)" fill="#00FFFF" stroke="#000" stroke-width="1"/><path class="c" fill="#00FFFF" d="M656 306h6v1h-6zM647 309h1v24h-1z"/><path d="M647.5,310 L642.5,313.5 L644.5,317.5 H647.5" stroke="#00FFFF" fill="none" stroke-width="1"/><path d="M647.5,322 L642.5,325.5 L644.5,329.5 H647.5" stroke="#00FFFF" fill="none" stroke-width="1"/><path class="c" fill="#00FFFF" d="M645 332h3v1h-3zM657 309h1v24h-1z"/><path d="M657.5,310 L662.5,313.5 L660.5,317.5 H657.5" stroke="#00FFFF" fill="none" stroke-width="1"/><path d="M657.5,322 L662.5,325.5 L660.5,329.5 H657.5" stroke="#00FFFF" fill="none" stroke-width="1"/><path class="c" fill="#00FFFF" d="M657 332h3v1h-3z"/><path class="c" fill="#fff" d="M670 305h1v31h-1zM629 345h31v1h-31zM629 345h1v17h-1zM629 378h1v105h-1z"/><path class="c" fill="#FFFF00" d="M669 340h2v5h-2z"/><path d="M665,350 L670,344.5" stroke="#FFFF00" stroke-width="2.2" fill="none"/><path class="c" fill="#FFFF00" d="M664 349h2v2h-2z"/><path class="c" fill="#fff" d="M670 356h1v6h-1zM670 378h1v4h-1z"/><circle cx="629.5" cy="369" r="5.6" fill="#FFFFFF" stroke="#E6E2D6" stroke-width="1.2"/><path d="M623.9,369 A5.6,5.6 0 0 1 633.5,365.1" stroke="#A08C74" stroke-width="1.3" fill="none"/><circle cx="670.5" cy="369" r="5.6" fill="#FFFFFF" stroke="#E6E2D6" stroke-width="1.2"/><path d="M664.9,369 A5.6,5.6 0 0 1 674.5,365.1" stroke="#A08C74" stroke-width="1.3" fill="none"/><path class="c" fill="#000" d="M660 382h21v27h-21z"/><path class="c" fill="#52BEBE" d="M661 383h19v25h-19z"/><path d="M660.5,408 H680.5 L673.5,421.5 H667.5 Z" fill="#40A2A2" stroke="#000" stroke-width="1.2"/><path class="c" fill="#fff" d="M670 422h1v13h-1z"/><text x="654" y="447" font-size="11" fill="#fff" style="" text-anchor="start" textLength="52" lengthAdjust="spacingAndGlyphs" >выбой 1/с</text><text x="748" y="277" font-size="12.9" fill="#fff" style="font-weight:bold;" text-anchor="start" textLength="23" lengthAdjust="spacingAndGlyphs" filter="url(#crisp)" >569</text><text x="792" y="356" font-size="12.9" fill="#fff" style="font-weight:bold;" text-anchor="start" textLength="23" lengthAdjust="spacingAndGlyphs" filter="url(#crisp)" >577</text><path d="M641.5,289 L647,283.5 H657 L662.5,289 V295 L667.5,301.5 H662 V307.5 H655 V302 H649.5 V307.5 H641.5 Z" transform="translate(108,0)" fill="#00FFFF" stroke="#000" stroke-width="1"/><path class="c" fill="#00FFFF" d="M764 306h6v1h-6zM755 309h1v24h-1z"/><path d="M755.5,310 L750.5,313.5 L752.5,317.5 H755.5" stroke="#00FFFF" fill="none" stroke-width="1"/><path d="M755.5,322 L750.5,325.5 L752.5,329.5 H755.5" stroke="#00FFFF" fill="none" stroke-width="1"/><path class="c" fill="#00FFFF" d="M753 332h3v1h-3zM765 309h1v24h-1z"/><path d="M765.5,310 L770.5,313.5 L768.5,317.5 H765.5" stroke="#00FFFF" fill="none" stroke-width="1"/><path d="M765.5,322 L770.5,325.5 L768.5,329.5 H765.5" stroke="#00FFFF" fill="none" stroke-width="1"/><path class="c" fill="#00FFFF" d="M765 332h3v1h-3z"/><path class="c" fill="#fff" d="M778 305h1v31h-1zM737 345h31v1h-31zM737 345h1v17h-1zM737 378h1v105h-1z"/><path class="c" fill="#FFFF00" d="M777 340h2v5h-2z"/><path d="M773,350 L778,344.5" stroke="#FFFF00" stroke-width="2.2" fill="none"/><path class="c" fill="#FFFF00" d="M772 349h2v2h-2z"/><path class="c" fill="#fff" d="M778 356h1v6h-1zM778 378h1v4h-1z"/><circle cx="737.5" cy="369" r="5.6" fill="#FFFFFF" stroke="#E6E2D6" stroke-width="1.2"/><path d="M731.9,369 A5.6,5.6 0 0 1 741.5,365.1" stroke="#A08C74" stroke-width="1.3" fill="none"/><circle cx="778.5" cy="369" r="5.6" fill="#FFFFFF" stroke="#E6E2D6" stroke-width="1.2"/><path d="M772.9,369 A5.6,5.6 0 0 1 782.5,365.1" stroke="#A08C74" stroke-width="1.3" fill="none"/><path class="c" fill="#000" d="M768 382h21v27h-21z"/><path class="c" fill="#52BEBE" d="M769 383h19v25h-19z"/><path d="M768.5,408 H788.5 L781.5,421.5 H775.5 Z" fill="#40A2A2" stroke="#000" stroke-width="1.2"/><path class="c" fill="#fff" d="M778 422h1v13h-1z"/><text x="762" y="447" font-size="11" fill="#fff" style="" text-anchor="start" textLength="52" lengthAdjust="spacingAndGlyphs" >выбой В/с</text><path class="c" fill="#000" d="M667 389h7v5h-7z"/><path class="c" fill="#00FFFF" d="M668 390h5v3h-5z"/><path class="c" fill="#000" d="M667 398h7v5h-7z"/><path class="c" fill="#00FFFF" d="M668 399h5v3h-5z"/><path class="c" fill="#000" d="M772 389h7v5h-7z"/><path class="c" fill="#00FFFF" d="M773 390h5v3h-5z"/><path class="c" fill="#000" d="M780 389h7v5h-7z"/><path class="c" fill="#00FFFF" d="M781 390h5v3h-5z"/><path class="c" fill="#000" d="M776 398h7v5h-7z"/><path class="c" fill="#00FFFF" d="M777 399h5v3h-5z"/><path class="c" fill="#fff" d="M826 494h1v17h-1zM898 494h1v17h-1z"/><text x="826" y="524" font-size="11" fill="#fff" style="" text-anchor="start" textLength="74" lengthAdjust="spacingAndGlyphs" >в автомуковоз</text><path class="c" fill="#00FFFF" d="M647 661h1v24h-1zM645 661h3v1h-3z"/><path d="M647.5,665 L642.5,669.5 L644.5,673.5 H647.5" stroke="#00FFFF" fill="none" stroke-width="1"/><path d="M647.5,677 L642.5,681.5 L644.5,685.5 H647.5" stroke="#00FFFF" fill="none" stroke-width="1"/><path class="c" fill="#00FFFF" d="M657 661h1v24h-1zM657 661h3v1h-3z"/><path d="M657.5,665 L662.5,669.5 L660.5,673.5 H657.5" stroke="#00FFFF" fill="none" stroke-width="1"/><path d="M657.5,677 L662.5,681.5 L660.5,685.5 H657.5" stroke="#00FFFF" fill="none" stroke-width="1"/><path d="M641.5,684.5 H649.5 V691 H655 V686.5 H662.5 V705 L657,710.5 H647 L641.5,705 V698.5 L636.5,692.5 V691.5 H641.5 Z" transform="translate(0,0)" fill="#00FFFF" stroke="#000" stroke-width="1.2"/><path class="c" fill="#5EF0F0" d="M642 685h7v1h-7z"/><path class="c" fill="#000" d="M649 695h6v5h-6z"/><path class="c" fill="#00FFFF" d="M650 696h4v3h-4z"/><path d="M652,700.8 L655.7,704.5 L652,708.2 L648.3,704.5 Z" fill="none" stroke="#000" stroke-width="1.1"/><path class="c" fill="#00FFFF" d="M779 661h1v24h-1zM777 661h3v1h-3z"/><path d="M779.5,665 L774.5,669.5 L776.5,673.5 H779.5" stroke="#00FFFF" fill="none" stroke-width="1"/><path d="M779.5,677 L774.5,681.5 L776.5,685.5 H779.5" stroke="#00FFFF" fill="none" stroke-width="1"/><path class="c" fill="#00FFFF" d="M789 661h1v24h-1zM789 661h3v1h-3z"/><path d="M789.5,665 L794.5,669.5 L792.5,673.5 H789.5" stroke="#00FFFF" fill="none" stroke-width="1"/><path d="M789.5,677 L794.5,681.5 L792.5,685.5 H789.5" stroke="#00FFFF" fill="none" stroke-width="1"/><path d="M641.5,684.5 H649.5 V691 H655 V686.5 H662.5 V705 L657,710.5 H647 L641.5,705 V698.5 L636.5,692.5 V691.5 H641.5 Z" transform="translate(132,0)" fill="#00FFFF" stroke="#000" stroke-width="1.2"/><path class="c" fill="#5EF0F0" d="M774 685h7v1h-7z"/><path class="c" fill="#000" d="M781 695h6v5h-6z"/><path class="c" fill="#00FFFF" d="M782 696h4v3h-4z"/><path d="M784,700.8 L787.7,704.5 L784,708.2 L780.3,704.5 Z" fill="none" stroke="#000" stroke-width="1.1"/><path class="c" fill="#000" d="M513 66h3v1h-3zM502 67h9v1h-9zM513 67h1v1h-1z"/><path class="c" fill="#00FFFF" d="M514 67h1v1h-1z"/><path class="c" fill="#000" d="M515 67h24v1h-24zM501 68h1v1h-1z"/><path class="c" fill="#00FFFF" d="M502 68h5v1h-5z"/><path class="c" fill="#000" d="M507 68h1v1h-1z"/><path class="c" fill="#00FFFF" d="M508 68h2v1h-2z"/><path class="c" fill="#000" d="M510 68h1v1h-1zM513 68h1v1h-1z"/><path class="c" fill="#00FFFF" d="M514 68h1v1h-1z"/><path class="c" fill="#000" d="M515 68h1v1h-1z"/><path class="c" fill="#00FFFF" d="M516 68h22v1h-22z"/><path class="c" fill="#000" d="M538 68h1v1h-1zM501 69h1v1h-1z"/><path class="c" fill="#00FFFF" d="M502 69h9v1h-9z"/><path class="c" fill="#000" d="M511 69h1v1h-1zM513 69h1v1h-1z"/><path class="c" fill="#00FFFF" d="M514 69h1v1h-1z"/><path class="c" fill="#000" d="M515 69h1v1h-1z"/><path class="c" fill="#00FFFF" d="M516 69h4v1h-4z"/><path class="c" fill="#000" d="M520 69h8v1h-8z"/><path class="c" fill="#00FFFF" d="M528 69h10v1h-10z"/><path class="c" fill="#000" d="M538 69h1v1h-1zM501 70h1v1h-1z"/><path class="c" fill="#00FFFF" d="M502 70h9v1h-9z"/><path class="c" fill="#000" d="M511 70h3v1h-3z"/><path class="c" fill="#00FFFF" d="M514 70h1v1h-1z"/><path class="c" fill="#000" d="M515 70h1v1h-1z"/><path class="c" fill="#00FFFF" d="M516 70h4v1h-4z"/><path class="c" fill="#000" d="M520 70h1v1h-1z"/><path class="c" fill="#00FFFF" d="M521 70h6v1h-6z"/><path class="c" fill="#000" d="M527 70h1v1h-1z"/><path class="c" fill="#00FFFF" d="M528 70h9v1h-9z"/><path class="c" fill="#000" d="M537 70h1v1h-1zM501 71h1v1h-1z"/><path class="c" fill="#00FFFF" d="M502 71h9v1h-9z"/><path class="c" fill="#000" d="M511 71h1v1h-1z"/><path class="c" fill="#00FFFF" d="M512 71h1v1h-1z"/><path class="c" fill="#000" d="M513 71h1v1h-1z"/><path class="c" fill="#00FFFF" d="M514 71h1v1h-1z"/><path class="c" fill="#000" d="M515 71h1v1h-1z"/><path class="c" fill="#00FFFF" d="M516 71h4v1h-4z"/><path class="c" fill="#000" d="M520 71h1v1h-1z"/><path class="c" fill="#00FFFF" d="M521 71h6v1h-6z"/><path class="c" fill="#000" d="M527 71h1v1h-1z"/><path class="c" fill="#00FFFF" d="M528 71h8v1h-8z"/><path class="c" fill="#000" d="M536 71h1v1h-1zM501 72h1v1h-1z"/><path class="c" fill="#00FFFF" d="M502 72h9v1h-9z"/><path class="c" fill="#000" d="M511 72h3v1h-3z"/><path class="c" fill="#00FFFF" d="M514 72h1v1h-1z"/><path class="c" fill="#000" d="M515 72h1v1h-1z"/><path class="c" fill="#00FFFF" d="M516 72h4v1h-4z"/><path class="c" fill="#000" d="M520 72h1v1h-1z"/><path class="c" fill="#00FFFF" d="M521 72h6v1h-6z"/><path class="c" fill="#000" d="M527 72h1v1h-1z"/><path class="c" fill="#00FFFF" d="M528 72h7v1h-7z"/><path class="c" fill="#000" d="M535 72h1v1h-1zM501 73h1v1h-1z"/><path class="c" fill="#00FFFF" d="M502 73h9v1h-9z"/><path class="c" fill="#000" d="M511 73h1v1h-1zM513 73h1v1h-1z"/><path class="c" fill="#00FFFF" d="M514 73h1v1h-1z"/><path class="c" fill="#000" d="M515 73h1v1h-1z"/><path class="c" fill="#00FFFF" d="M516 73h4v1h-4z"/><path class="c" fill="#000" d="M520 73h8v1h-8z"/><path class="c" fill="#00FFFF" d="M528 73h6v1h-6z"/><path class="c" fill="#000" d="M534 73h1v1h-1zM501 74h1v1h-1z"/><path class="c" fill="#00FFFF" d="M502 74h9v1h-9z"/><path class="c" fill="#000" d="M511 74h1v1h-1zM513 74h1v1h-1z"/><path class="c" fill="#00FFFF" d="M514 74h1v1h-1z"/><path class="c" fill="#000" d="M515 74h1v1h-1z"/><path class="c" fill="#00FFFF" d="M516 74h17v1h-17z"/><path class="c" fill="#000" d="M533 74h1v1h-1zM502 75h9v1h-9zM513 75h1v1h-1z"/><path class="c" fill="#00FFFF" d="M514 75h1v1h-1z"/><path class="c" fill="#000" d="M515 75h7v1h-7z"/><path class="c" fill="#00FFFF" d="M522 75h6v1h-6z"/><path class="c" fill="#000" d="M528 75h6v1h-6zM513 76h3v1h-3zM520 76h2v1h-2z"/><path class="c" fill="#00FFFF" d="M522 76h8v1h-8z"/><path class="c" fill="#000" d="M530 76h2v1h-2zM518 77h2v1h-2z"/><path class="c" fill="#00FFFF" d="M520 77h12v1h-12z"/><path class="c" fill="#000" d="M532 77h2v1h-2zM518 78h16v1h-16zM518 79h1v1h-1z"/><path class="c" fill="#00FFFF" d="M519 79h14v1h-14z"/><path class="c" fill="#000" d="M533 79h1v1h-1zM518 80h16v1h-16z"/><path d="M534.5,76 L539.5,68 L542,75 L546,68 L548,75 L551,68 V77" stroke="#202020" stroke-width="3" fill="none" stroke-linejoin="miter"/><path d="M534.5,76 L539.5,68 L542,75 L546,68 L548,75 L551,68 V77" stroke="#9A9A9A" stroke-width="1.2" fill="none"/><path class="c" fill="#000" d="M579 233h16v1h-16zM579 234h1v1h-1z"/><path class="c" fill="#00FFFF" d="M580 234h14v1h-14z"/><path class="c" fill="#000" d="M594 234h1v1h-1zM579 235h16v1h-16zM579 236h2v1h-2z"/><path class="c" fill="#00FFFF" d="M581 236h12v1h-12z"/><path class="c" fill="#000" d="M593 236h2v1h-2zM581 237h2v1h-2z"/><path class="c" fill="#00FFFF" d="M583 237h8v1h-8z"/><path class="c" fill="#000" d="M591 237h2v1h-2zM597 237h3v1h-3zM579 238h6v1h-6z"/><path class="c" fill="#00FFFF" d="M585 238h6v1h-6z"/><path class="c" fill="#000" d="M591 238h7v1h-7z"/><path class="c" fill="#00FFFF" d="M598 238h1v1h-1z"/><path class="c" fill="#000" d="M599 238h1v1h-1zM602 238h9v1h-9zM579 239h1v1h-1z"/><path class="c" fill="#00FFFF" d="M580 239h17v1h-17z"/><path class="c" fill="#000" d="M597 239h1v1h-1z"/><path class="c" fill="#00FFFF" d="M598 239h1v1h-1z"/><path class="c" fill="#000" d="M599 239h1v1h-1zM601 239h1v1h-1z"/><path class="c" fill="#00FFFF" d="M602 239h9v1h-9z"/><path class="c" fill="#000" d="M611 239h1v1h-1zM578 240h1v1h-1z"/><path class="c" fill="#00FFFF" d="M579 240h6v1h-6z"/><path class="c" fill="#000" d="M585 240h8v1h-8z"/><path class="c" fill="#00FFFF" d="M593 240h4v1h-4z"/><path class="c" fill="#000" d="M597 240h1v1h-1z"/><path class="c" fill="#00FFFF" d="M598 240h1v1h-1z"/><path class="c" fill="#000" d="M599 240h1v1h-1zM601 240h1v1h-1z"/><path class="c" fill="#00FFFF" d="M602 240h9v1h-9z"/><path class="c" fill="#000" d="M611 240h1v1h-1zM577 241h1v1h-1z"/><path class="c" fill="#00FFFF" d="M578 241h7v1h-7z"/><path class="c" fill="#000" d="M585 241h1v1h-1z"/><path class="c" fill="#00FFFF" d="M586 241h6v1h-6z"/><path class="c" fill="#000" d="M592 241h1v1h-1z"/><path class="c" fill="#00FFFF" d="M593 241h4v1h-4z"/><path class="c" fill="#000" d="M597 241h1v1h-1z"/><path class="c" fill="#00FFFF" d="M598 241h1v1h-1z"/><path class="c" fill="#000" d="M599 241h3v1h-3z"/><path class="c" fill="#00FFFF" d="M602 241h9v1h-9z"/><path class="c" fill="#000" d="M611 241h1v1h-1zM576 242h1v1h-1z"/><path class="c" fill="#00FFFF" d="M577 242h8v1h-8z"/><path class="c" fill="#000" d="M585 242h1v1h-1z"/><path class="c" fill="#00FFFF" d="M586 242h6v1h-6z"/><path class="c" fill="#000" d="M592 242h1v1h-1z"/><path class="c" fill="#00FFFF" d="M593 242h4v1h-4z"/><path class="c" fill="#000" d="M597 242h1v1h-1z"/><path class="c" fill="#00FFFF" d="M598 242h1v1h-1z"/><path class="c" fill="#000" d="M599 242h1v1h-1z"/><path class="c" fill="#00FFFF" d="M600 242h1v1h-1z"/><path class="c" fill="#000" d="M601 242h1v1h-1z"/><path class="c" fill="#00FFFF" d="M602 242h9v1h-9z"/><path class="c" fill="#000" d="M611 242h1v1h-1zM575 243h1v1h-1z"/><path class="c" fill="#00FFFF" d="M576 243h9v1h-9z"/><path class="c" fill="#000" d="M585 243h1v1h-1z"/><path class="c" fill="#00FFFF" d="M586 243h6v1h-6z"/><path class="c" fill="#000" d="M592 243h1v1h-1z"/><path class="c" fill="#00FFFF" d="M593 243h4v1h-4z"/><path class="c" fill="#000" d="M597 243h1v1h-1z"/><path class="c" fill="#00FFFF" d="M598 243h1v1h-1z"/><path class="c" fill="#000" d="M599 243h3v1h-3z"/><path class="c" fill="#00FFFF" d="M602 243h9v1h-9z"/><path class="c" fill="#000" d="M611 243h1v1h-1zM574 244h1v1h-1z"/><path class="c" fill="#00FFFF" d="M575 244h10v1h-10z"/><path class="c" fill="#000" d="M585 244h8v1h-8z"/><path class="c" fill="#00FFFF" d="M593 244h4v1h-4z"/><path class="c" fill="#000" d="M597 244h1v1h-1z"/><path class="c" fill="#00FFFF" d="M598 244h1v1h-1z"/><path class="c" fill="#000" d="M599 244h1v1h-1zM601 244h1v1h-1z"/><path class="c" fill="#00FFFF" d="M602 244h9v1h-9z"/><path class="c" fill="#000" d="M611 244h1v1h-1zM574 245h1v1h-1z"/><path class="c" fill="#00FFFF" d="M575 245h22v1h-22z"/><path class="c" fill="#000" d="M597 245h1v1h-1z"/><path class="c" fill="#00FFFF" d="M598 245h1v1h-1z"/><path class="c" fill="#000" d="M599 245h1v1h-1zM602 245h1v1h-1z"/><path class="c" fill="#00FFFF" d="M603 245h2v1h-2z"/><path class="c" fill="#000" d="M605 245h1v1h-1z"/><path class="c" fill="#00FFFF" d="M606 245h5v1h-5z"/><path class="c" fill="#000" d="M611 245h1v1h-1zM574 246h24v1h-24z"/><path class="c" fill="#00FFFF" d="M598 246h1v1h-1z"/><path class="c" fill="#000" d="M599 246h1v1h-1zM602 246h9v1h-9zM597 247h3v1h-3z"/><path d="M578.5,237 L573.5,245 L571,238 L567,245 L565,238 L562,245 V236" stroke="#202020" stroke-width="3" fill="none" stroke-linejoin="miter"/><path d="M578.5,237 L573.5,245 L571,238 L567,245 L565,238 L562,245 V236" stroke="#9A9A9A" stroke-width="1.2" fill="none"/><path class="c" fill="#ECE9D8" d="M677 82h44v13h-44z"/><text x="698.5" y="93" font-size="12.5" fill="#000" style="font-weight:bold;" text-anchor="middle" textLength="29" lengthAdjust="spacingAndGlyphs" filter="url(#crispK)" >AC 6</text><text x="683" y="118" font-size="12.9" fill="#fff" style="font-weight:bold;" text-anchor="start" textLength="23" lengthAdjust="spacingAndGlyphs" filter="url(#crisp)" >416</text><text x="724" y="146" font-size="12.9" fill="#fff" style="font-weight:bold;" text-anchor="start" textLength="23" lengthAdjust="spacingAndGlyphs" filter="url(#crisp)" >414</text><path class="c" fill="#000" d="M684 124h9v2h-9z"/><path class="c" fill="#00FFFF" d="M685 124h7v1h-7z"/><path class="c" fill="#000" d="M677 126h23v40h-23z"/><path class="c" fill="#00FFFF" d="M678 127h21v38h-21z"/><path class="c" fill="#000" d="M677 137h23v1h-23zM688 129h1v1h-1zM687 130h1v1h-1zM689 130h1v1h-1zM688 131h1v1h-1zM699 127h4v10h-4z"/><path class="c" fill="#00FFFF" d="M700 128h2v8h-2z"/><path class="c" fill="#000" d="M683 139h17v12h-17z"/><path class="c" fill="#00FFFF" d="M684 140h15v10h-15z"/><path d="M677.5,165.5 H699.5 L690,191 H687 Z" fill="#00FFFF" stroke="#000" stroke-width="1"/><path class="c" fill="#000" d="M680 166h2v2h-2zM695 166h2v2h-2zM685 172h7v5h-7z"/><path class="c" fill="#00FFFF" d="M686 173h5v3h-5z"/><path class="c" fill="#000" d="M678 170h3v30h-3z"/><path class="c" fill="#00FFFF" d="M679 171h1v28h-1z"/><path class="c" fill="#000" d="M696 170h3v30h-3z"/><path class="c" fill="#00FFFF" d="M697 171h1v28h-1z"/><path class="c" fill="#000" d="M677 199h5v1h-5zM695 199h5v1h-5z"/><circle cx="688.5" cy="196.5" r="3.3" fill="#00FFFF" stroke="#000" stroke-width="1"/><path class="c" fill="#fff" d="M688 200h1v16h-1z"/><path d="M703,134.5 H712.5 V165.5 H722" stroke="#C8C0B0" stroke-dasharray="5,3" fill="none"/><path class="c" fill="#000" d="M723 161h3v11h-3z"/><path class="c" fill="#00FFFF" d="M724 162h1v9h-1z"/><path class="c" fill="#000" d="M725 153h8v27h-8z"/><path class="c" fill="#00FFFF" d="M726 154h6v25h-6z"/><path class="c" fill="#000" d="M732 161h12v12h-12z"/><path class="c" fill="#00FFFF" d="M733 162h10v10h-10z"/><path d="M733,162 L743,172 M743,162 L733,172" stroke="#000" stroke-width="1"/><path class="c" fill="#000" d="M743 161h3v12h-3z"/><path class="c" fill="#00FFFF" d="M744 162h1v10h-1z"/><path class="c" fill="#000" d="M732 174h12v11h-12z"/><path class="c" fill="#00FFFF" d="M733 175h10v9h-10z"/><path class="c" fill="#ECE9D8" d="M797 82h44v13h-44z"/><text x="818.5" y="93" font-size="12.5" fill="#000" style="font-weight:bold;" text-anchor="middle" textLength="29" lengthAdjust="spacingAndGlyphs" filter="url(#crispK)" >AC 5</text><text x="803" y="118" font-size="12.9" fill="#fff" style="font-weight:bold;" text-anchor="start" textLength="23" lengthAdjust="spacingAndGlyphs" filter="url(#crisp)" >419</text><text x="844" y="146" font-size="12.9" fill="#fff" style="font-weight:bold;" text-anchor="start" textLength="23" lengthAdjust="spacingAndGlyphs" filter="url(#crisp)" >417</text><path class="c" fill="#000" d="M804 124h9v2h-9z"/><path class="c" fill="#00FFFF" d="M805 124h7v1h-7z"/><path class="c" fill="#000" d="M797 126h23v40h-23z"/><path class="c" fill="#00FFFF" d="M798 127h21v38h-21z"/><path class="c" fill="#000" d="M797 137h23v1h-23zM808 129h1v1h-1zM807 130h1v1h-1zM809 130h1v1h-1zM808 131h1v1h-1zM819 127h4v10h-4z"/><path class="c" fill="#00FFFF" d="M820 128h2v8h-2z"/><path class="c" fill="#000" d="M803 139h17v12h-17z"/><path class="c" fill="#00FFFF" d="M804 140h15v10h-15z"/><path d="M797.5,165.5 H819.5 L810,191 H807 Z" fill="#00FFFF" stroke="#000" stroke-width="1"/><path class="c" fill="#000" d="M800 166h2v2h-2zM815 166h2v2h-2zM805 172h7v5h-7z"/><path class="c" fill="#00FFFF" d="M806 173h5v3h-5z"/><path class="c" fill="#000" d="M798 170h3v30h-3z"/><path class="c" fill="#00FFFF" d="M799 171h1v28h-1z"/><path class="c" fill="#000" d="M816 170h3v30h-3z"/><path class="c" fill="#00FFFF" d="M817 171h1v28h-1z"/><path class="c" fill="#000" d="M797 199h5v1h-5zM815 199h5v1h-5z"/><circle cx="808.5" cy="196.5" r="3.3" fill="#00FFFF" stroke="#000" stroke-width="1"/><path class="c" fill="#fff" d="M808 200h1v16h-1z"/><path d="M823,134.5 H832.5 V165.5 H842" stroke="#C8C0B0" stroke-dasharray="5,3" fill="none"/><path class="c" fill="#000" d="M843 161h3v11h-3z"/><path class="c" fill="#00FFFF" d="M844 162h1v9h-1z"/><path class="c" fill="#000" d="M845 153h8v27h-8z"/><path class="c" fill="#00FFFF" d="M846 154h6v25h-6z"/><path class="c" fill="#000" d="M852 161h12v12h-12z"/><path class="c" fill="#00FFFF" d="M853 162h10v10h-10z"/><path d="M853,162 L863,172 M863,162 L853,172" stroke="#000" stroke-width="1"/><path class="c" fill="#000" d="M863 161h3v12h-3z"/><path class="c" fill="#00FFFF" d="M864 162h1v10h-1z"/><path class="c" fill="#000" d="M852 174h12v11h-12z"/><path class="c" fill="#00FFFF" d="M853 175h10v9h-10z"/><path d="M1001.5,68.5 H1011.5 L1015.5,73 V83 L1018,88.5 H994.5 L997.5,83 V73 Z" fill="#00FFFF"/><path d="M994.5,88 L997.5,83 V73 L1001.5,68.5 H1011.5" stroke="#000" fill="none"/><path d="M1011.5,68.5 L1015.5,73 V83 L1018,88.5 H994.5" stroke="#fff" fill="none"/><path d="M1005,89 H1011 V90 L1008,93 L1005,90 Z" fill="#00FFFF" stroke="#000" stroke-width="0.8"/><path class="c" fill="#716F64" d="M808 293h97v21h-97z"/><path class="c" fill="#FFFFFF" d="M808 293h96v20h-96z"/><path class="c" fill="#ACA899" d="M809 294h95v19h-95z"/><path class="c" fill="#ECE9D8" d="M809 294h94v18h-94z"/><text x="815" y="308" font-size="12.5" fill="#000" style="font-weight:bold;" text-anchor="start" textLength="83" lengthAdjust="spacingAndGlyphs" filter="url(#crispK)" >Стоп вибродн.</text><path class="c" fill="#00FFFF" d="M412 707h8v2h-8z"/><path class="c" fill="#FFFF00" d="M408 710h19v2h-19zM425 712h2v4h-2z"/><path class="c" fill="#00FFFF" d="M412 713h8v2h-8z"/><path class="c" fill="#0B3434" d="M800 537h27v59h-27zM827 537h27v59h-27zM820 532h7v1h-7zM827 532h7v1h-7zM816 533h11v1h-11zM827 533h11v1h-11zM808 534h19v1h-19zM827 534h19v1h-19z"/><path class="c" fill="#14D4D4" d="M816 534h6v1h-6zM832 534h6v1h-6z"/><path class="c" fill="#0B3434" d="M804 535h23v2h-23zM827 535h23v2h-23z"/><path class="c" fill="#14D4D4" d="M808 535h2v1h-2zM844 535h2v1h-2zM816 535h11v1h-11zM827 535h11v1h-11zM805 536h11v1h-11zM838 536h11v1h-11z"/><path class="c" fill="#1AE4E4" d="M816 536h11v1h-11zM827 536h11v1h-11z"/><path class="c" fill="#0B3434" d="M798 537h19v1h-19zM837 537h19v1h-19z"/><path class="c" fill="#1AE4E4" d="M817 537h10v1h-10zM827 537h10v1h-10zM806 538h21v13h-21zM827 538h21v13h-21zM805 540h1v10h-1zM848 540h1v10h-1z"/><path class="c" fill="#0B3434" d="M795 539h5v14h-5zM854 539h5v14h-5z"/><path class="c" fill="#14D4D4" d="M796 541h1v2h-1zM857 541h1v2h-1zM798 541h1v1h-1zM855 541h1v1h-1zM797 544h1v1h-1zM856 544h1v1h-1zM796 546h1v2h-1zM857 546h1v2h-1zM798 546h1v2h-1zM855 546h1v2h-1zM800 539h4v7h-4zM850 539h4v7h-4zM801 546h2v7h-2zM851 546h2v7h-2zM802 553h2v1h-2zM850 553h2v1h-2zM808 555h12v1h-12zM834 555h12v1h-12zM821 555h6v1h-6zM827 555h6v1h-6zM808 557h19v5h-19zM827 557h19v5h-19zM801 555h1v11h-1zM852 555h1v11h-1zM801 567h1v7h-1zM852 567h1v7h-1zM803 557h2v17h-2zM849 557h2v17h-2zM806 555h1v19h-1zM847 555h1v19h-1zM823 568h4v1h-4zM827 568h4v1h-4zM825 569h2v1h-2zM827 569h2v1h-2zM803 577h1v3h-1zM850 577h1v3h-1zM805 577h5v3h-5zM844 577h5v3h-5zM812 576h15v5h-15zM827 576h15v5h-15z"/><path class="c" fill="#0B3434" d="M825 577h2v3h-2zM827 577h2v3h-2z"/><path class="c" fill="#14D4D4" d="M803 582h4v13h-4zM847 582h4v13h-4zM808 589h5v6h-5zM841 589h5v6h-5zM808 583h1v1h-1zM845 583h1v1h-1zM810 583h1v1h-1zM843 583h1v1h-1zM809 585h1v1h-1zM844 585h1v1h-1zM811 585h1v1h-1zM842 585h1v1h-1zM808 587h1v1h-1zM845 587h1v1h-1zM810 587h1v1h-1zM843 587h1v1h-1zM813 582h6v2h-6zM835 582h6v2h-6zM815 585h3v5h-3zM836 585h3v5h-3zM820 586h7v1h-7zM827 586h7v1h-7zM820 589h7v1h-7zM827 589h7v1h-7zM819 582h8v3h-8zM827 582h8v3h-8z"/><path class="c" fill="#008080" d="M813 591h14v5h-14zM827 591h14v5h-14z"/><path class="c" fill="#0B3434" d="M872 537h27v59h-27zM899 537h27v59h-27zM892 532h7v1h-7zM899 532h7v1h-7zM888 533h11v1h-11zM899 533h11v1h-11zM880 534h19v1h-19zM899 534h19v1h-19z"/><path class="c" fill="#14D4D4" d="M888 534h6v1h-6zM904 534h6v1h-6z"/><path class="c" fill="#0B3434" d="M876 535h23v2h-23zM899 535h23v2h-23z"/><path class="c" fill="#14D4D4" d="M880 535h2v1h-2zM916 535h2v1h-2zM888 535h11v1h-11zM899 535h11v1h-11zM877 536h11v1h-11zM910 536h11v1h-11z"/><path class="c" fill="#1AE4E4" d="M888 536h11v1h-11zM899 536h11v1h-11z"/><path class="c" fill="#0B3434" d="M870 537h19v1h-19zM909 537h19v1h-19z"/><path class="c" fill="#1AE4E4" d="M889 537h10v1h-10zM899 537h10v1h-10zM878 538h21v13h-21zM899 538h21v13h-21zM877 540h1v10h-1zM920 540h1v10h-1z"/><path class="c" fill="#0B3434" d="M867 539h5v14h-5zM926 539h5v14h-5z"/><path class="c" fill="#14D4D4" d="M868 541h1v2h-1zM929 541h1v2h-1zM870 541h1v1h-1zM927 541h1v1h-1zM869 544h1v1h-1zM928 544h1v1h-1zM868 546h1v2h-1zM929 546h1v2h-1zM870 546h1v2h-1zM927 546h1v2h-1zM872 539h4v7h-4zM922 539h4v7h-4zM873 546h2v7h-2zM923 546h2v7h-2zM874 553h2v1h-2zM922 553h2v1h-2zM880 555h12v1h-12zM906 555h12v1h-12zM893 555h6v1h-6zM899 555h6v1h-6zM880 557h19v5h-19zM899 557h19v5h-19zM873 555h1v11h-1zM924 555h1v11h-1zM873 567h1v7h-1zM924 567h1v7h-1zM875 557h2v17h-2zM921 557h2v17h-2zM878 555h1v19h-1zM919 555h1v19h-1zM895 568h4v1h-4zM899 568h4v1h-4zM897 569h2v1h-2zM899 569h2v1h-2zM875 577h1v3h-1zM922 577h1v3h-1zM877 577h5v3h-5zM916 577h5v3h-5zM884 576h15v5h-15zM899 576h15v5h-15z"/><path class="c" fill="#0B3434" d="M897 577h2v3h-2zM899 577h2v3h-2z"/><path class="c" fill="#14D4D4" d="M875 582h4v13h-4zM919 582h4v13h-4zM880 589h5v6h-5zM913 589h5v6h-5zM880 583h1v1h-1zM917 583h1v1h-1zM882 583h1v1h-1zM915 583h1v1h-1zM881 585h1v1h-1zM916 585h1v1h-1zM883 585h1v1h-1zM914 585h1v1h-1zM880 587h1v1h-1zM917 587h1v1h-1zM882 587h1v1h-1zM915 587h1v1h-1zM885 582h6v2h-6zM907 582h6v2h-6zM887 585h3v5h-3zM908 585h3v5h-3zM892 586h7v1h-7zM899 586h7v1h-7zM892 589h7v1h-7zM899 589h7v1h-7zM891 582h8v3h-8zM899 582h8v3h-8z"/><path class="c" fill="#008080" d="M885 591h14v5h-14zM899 591h14v5h-14z"/><rect x="0" y="735" width="1024" height="33" fill="#D4D0C8"/><rect x="0" y="736" width="1024" height="1" fill="#FFFFFF"/><rect x="1" y="737" width="169" height="30" fill="#ECE9D8"/><rect x="1" y="737" width="169" height="1" fill="#ACA899"/><rect x="1" y="737" width="1" height="29" fill="#ACA899"/><rect x="170" y="737" width="1" height="30" fill="#FFFFFF"/><rect x="171" y="737" width="852" height="30" fill="#ECE9D8"/><rect x="171" y="737" width="852" height="1" fill="#ACA899"/><rect x="171" y="737" width="1" height="29" fill="#ACA899"/><rect x="1022" y="737" width="1" height="30" fill="#FFFFFF"/><rect x="0" y="766" width="1024" height="1" fill="#FFFFFF"/><rect x="0" y="767" width="1024" height="1" fill="#ACA899"/><rect x="1023" y="736" width="1" height="32" fill="#ACA899"/></svg></body></html>
